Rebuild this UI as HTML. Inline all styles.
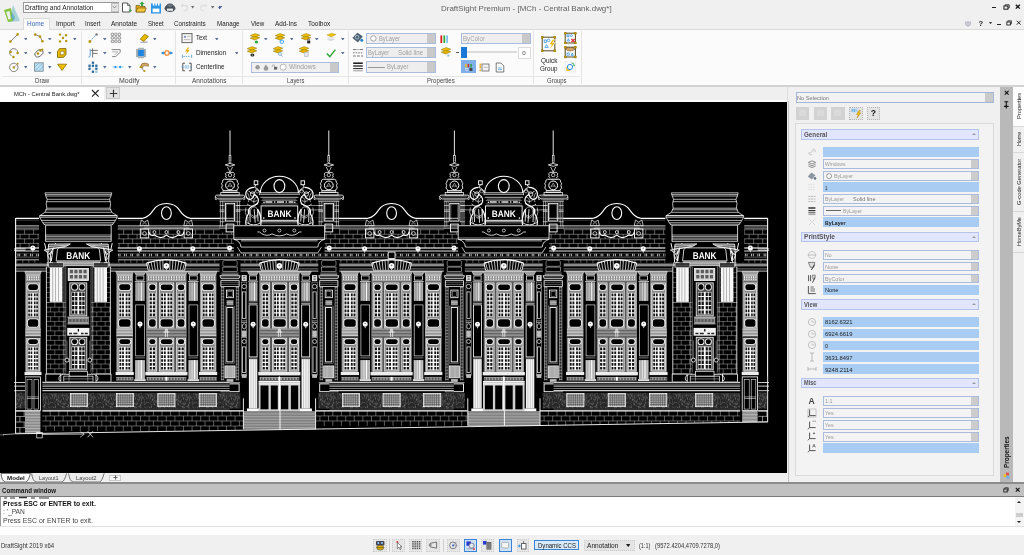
<!DOCTYPE html><html><head><meta charset="utf-8"><title>DraftSight Premium - [MCh - Central Bank.dwg*]</title><style>html,body{margin:0;padding:0;background:#f0f0f0;}
body{width:1024px;height:555px;position:relative;overflow:hidden;font-family:"Liberation Sans",sans-serif;}
.r{position:absolute;display:block;}
.t{position:absolute;white-space:nowrap;transform-origin:0 0;}
svg text{text-rendering:geometricPrecision;}
#root{position:absolute;left:0;top:0;width:1024px;height:555px;will-change:transform;}
#dw{position:absolute;left:0;top:101.5px;width:787px;height:371.5px;background:#000;}
</style></head><body><div id="root"><div class="r" style="left:0px;top:0px;width:1024px;height:30px;background:#f0f0f0;"></div>
<div class="r" style="left:0px;top:29.5px;width:1024px;height:56px;background:#fbfbfb;"></div>
<div class="r" style="left:0px;top:29px;width:1024px;height:1px;background:#dadada;"></div>
<div class="r" style="left:23px;top:18px;width:26.5px;height:12px;background:#fbfbfb;border:1px solid #dadada;box-sizing:border-box;border-bottom:none;"></div>
<div class="r" style="left:0px;top:85px;width:1024px;height:1.5px;background:#d2d2d2;"></div>
<div class="r" style="left:0px;top:86.5px;width:1024px;height:15px;background:#efefef;"></div>
<div class="r" style="left:0px;top:86.5px;width:104px;height:13.5px;background:#ffffff;"></div>
<div class="r" style="left:0px;top:100px;width:787px;height:1.5px;background:#fdfdfd;"></div>
<svg class="r" style="left:3px;top:4px" width="18" height="20" viewBox="0 0 18 20">
<polygon points="10,1 17,17 6,18" fill="#8fc5cf" opacity=".75"/>
<polygon points="1,6 8,4 10,17 5,18" fill="#86c440"/>
<polygon points="3.2,8 6.5,7 7.8,15 5.5,15.6" fill="#f0f0f0"/>
<polygon points="9,8 12,14 10,17 8,12" fill="#5aa9bd" opacity=".8"/>
</svg>
<div class="r" style="left:23px;top:1.5px;width:96px;height:11px;background:#ffffff;border:1px solid #9a9a9a;box-sizing:border-box;"></div>
<div class="r" style="left:110.5px;top:2.5px;width:8px;height:9px;background:#e4e4e4;border:1px solid #c2c2c2;box-sizing:border-box;"></div>
<svg class="r" style="left:112px;top:5px" width="5" height="4" viewBox="0 0 5 4"><polyline points="0.6,0.8 2.5,3 4.4,0.8" fill="none" stroke="#888" stroke-width=".9"/></svg>
<div class="t" style="transform:scaleX(0.9939);left:24.5px;top:3.5px;font-size:6.6px;line-height:8px;color:#222">Drafting and Annotation</div>
<svg class="r" style="left:121px;top:2px" width="12" height="11" viewBox="0 0 12 11"><path d="M1.5,1 h5 l2.5,2.5 v6.5 h-7.5z" fill="#fff" stroke="#555" stroke-width="1"/><path d="M6.5,1 v2.5 h2.5" fill="none" stroke="#555" stroke-width=".8"/><path d="M8.2,8.5 h2.6 M9.5,7.2 v2.6" stroke="#3aa84a" stroke-width="1.1"/></svg>
<svg class="r" style="left:135px;top:1px" width="12" height="12" viewBox="0 0 12 12"><path d="M1,4.5 h3.5 l1,1 h4.5 v5.5 h-9z" fill="#e2a71c" stroke="#6b5410" stroke-width=".7"/><path d="M1,11 l1.6,-4 h8.6 l-1.6,4z" fill="#f6c638" stroke="#6b5410" stroke-width=".6"/><path d="M7,0.5 l2.6,2.6 h-1.5 v1.8 h-2.2 v-1.8 h-1.5z" fill="#3aa84a"/></svg>
<svg class="r" style="left:149.5px;top:1.5px" width="12" height="12" viewBox="0 0 12 12"><path d="M1,1.5 h10 v10 h-10z" fill="#2f96e8"/><rect x="2.6" y="6.6" width="6.8" height="3.6" fill="#fff"/><rect x="2.8" y="0.8" width="1.5" height="2.8" fill="#fff"/><rect x="5.4" y="0.8" width="1.5" height="2.8" fill="#fff"/><rect x="8" y="0.8" width="1.5" height="2.8" fill="#fff"/></svg>
<svg class="r" style="left:164px;top:2px" width="12" height="11" viewBox="0 0 12 11"><ellipse cx="6" cy="6.2" rx="5.4" ry="3.8" fill="#4a5560"/><ellipse cx="6" cy="3.6" rx="3" ry="1.8" fill="#6b7680" stroke="#39424a" stroke-width=".6"/><rect x="3" y="6.6" width="6" height="2.2" fill="#e8e8e8"/></svg>
<svg class="r" style="left:179.5px;top:2.5px" width="9" height="9" viewBox="0 0 9 9"><path d="M2,2.5 h3 a2.6,2.6 0 0 1 0,5.2 h-1.5" fill="none" stroke="#dcdcdc" stroke-width="1.3"/><path d="M0.5,2.5 l2.4,-2 v4z" fill="#dcdcdc"/></svg>
<svg class="r" style="left:191.35px;top:6.20px" width="3.30" height="2.40" viewBox="0 0 3.30 2.40"><path d="M0,0H3.30L1.65,2.40z" fill="#6a6a6a"/></svg>
<svg class="r" style="left:199px;top:2.5px" width="9" height="9" viewBox="0 0 9 9"><path d="M7,2.5 h-3 a2.6,2.6 0 0 0 0,5.2 h1.5" fill="none" stroke="#e0e0e0" stroke-width="1.3"/><path d="M8.5,2.5 l-2.4,-2 v4z" fill="#e0e0e0"/></svg>
<svg class="r" style="left:210.95px;top:6.20px" width="3.30" height="2.40" viewBox="0 0 3.30 2.40"><path d="M0,0H3.30L1.65,2.40z" fill="#6a6a6a"/></svg>
<div class="r" style="left:218.6px;top:5.6px;width:3px;height:0.9px;background:#4a5f9a;"></div>
<svg class="r" style="left:218.45px;top:7.00px" width="3.30" height="2.40" viewBox="0 0 3.30 2.40"><path d="M0,0H3.30L1.65,2.40z" fill="#4a5f9a"/></svg>
<div class="t" style="transform:scaleX(0.9826);left:440.7px;top:3.6999999999999993px;font-size:8.1px;line-height:9.8px;color:#606060">DraftSight Premium - [MCh - Central Bank.dwg*]</div>
<div class="r" style="left:992.4px;top:7.0px;width:3.6px;height:1.1px;background:#222;"></div>
<svg class="r" style="left:1003px;top:3.6px" width="7" height="6" viewBox="0 0 7 6"><rect x="0.9" y="2" width="4" height="3.2" fill="none" stroke="#222" stroke-width="1"/><path d="M2.2,2 v-1.2 h4 v3.2 h-1.3" fill="none" stroke="#222" stroke-width=".9"/></svg>
<svg class="r" style="left:1015.4px;top:3.8px" width="6" height="6" viewBox="0 0 6 6"><path d="M0.8,0.8 L4.8,4.6 M4.8,0.8 L0.8,4.6" stroke="#111" stroke-width="1.3"/></svg>
<svg class="r" style="left:964.5px;top:20.5px" width="6" height="6" viewBox="0 0 6 6"><path d="M0.5,0.8 h5 v2 q0,2 -2.5,2.6 q-2.5,-.6 -2.5,-2.6z" fill="#c9c9cf" stroke="#a9a9b4" stroke-width=".5"/></svg>
<div class="t" style="left:978.6px;top:18.64px;font-size:7.6px;line-height:9.12px;color:#222;font-weight:bold;">?</div>
<svg class="r" style="left:989.06px;top:21.68px" width="3.08" height="2.24" viewBox="0 0 3.08 2.24"><path d="M0,0H3.08L1.54,2.24z" fill="#333"/></svg>
<div class="r" style="left:997px;top:24.2px;width:4px;height:1.1px;background:#222;"></div>
<svg class="r" style="left:1006.3px;top:20.2px" width="6" height="6" viewBox="0 0 6 6"><rect x="0.8" y="2" width="3.6" height="3" fill="none" stroke="#222" stroke-width=".9"/><path d="M1.8,2 v-1.2 h3.6 v3 h-1" fill="none" stroke="#222" stroke-width=".8"/></svg>
<svg class="r" style="left:1016.4px;top:20.3px" width="6" height="6" viewBox="0 0 6 6"><path d="M0.8,0.8 L4.6,4.6 M4.6,0.8 L0.8,4.6" stroke="#222" stroke-width="1"/></svg>
<div class="t" style="transform:scaleX(0.9583);left:27.3px;top:19.799999999999997px;font-size:6.7px;line-height:8.2px;color:#3b6cb3">Home</div>
<div class="t" style="transform:scaleX(0.9919);left:55.9px;top:19.799999999999997px;font-size:6.7px;line-height:8.2px;color:#222">Import</div>
<div class="t" style="transform:scaleX(0.9262);left:85.2px;top:19.799999999999997px;font-size:6.7px;line-height:8.2px;color:#222">Insert</div>
<div class="t" style="transform:scaleX(0.9746);left:111.2px;top:19.799999999999997px;font-size:6.7px;line-height:8.2px;color:#222">Annotate</div>
<div class="t" style="transform:scaleX(0.8979);left:148.3px;top:19.799999999999997px;font-size:6.7px;line-height:8.2px;color:#222">Sheet</div>
<div class="t" style="transform:scaleX(0.9312);left:174.3px;top:19.799999999999997px;font-size:6.7px;line-height:8.2px;color:#222">Constraints</div>
<div class="t" style="transform:scaleX(0.9350);left:217px;top:19.799999999999997px;font-size:6.7px;line-height:8.2px;color:#222">Manage</div>
<div class="t" style="transform:scaleX(0.9183);left:250.8px;top:19.799999999999997px;font-size:6.7px;line-height:8.2px;color:#222">View</div>
<div class="t" style="transform:scaleX(0.9539);left:274.6px;top:19.799999999999997px;font-size:6.7px;line-height:8.2px;color:#222">Add-Ins</div>
<div class="t" style="transform:scaleX(0.9669);left:308px;top:19.799999999999997px;font-size:6.7px;line-height:8.2px;color:#222">Toolbox</div>
<div class="r" style="left:80.8px;top:31px;width:1px;height:53px;background:#e4e4e4;"></div>
<div class="r" style="left:175.4px;top:31px;width:1px;height:53px;background:#e4e4e4;"></div>
<div class="r" style="left:241.7px;top:31px;width:1px;height:53px;background:#e4e4e4;"></div>
<div class="r" style="left:348.2px;top:31px;width:1px;height:53px;background:#e4e4e4;"></div>
<div class="r" style="left:532.5px;top:31px;width:1px;height:53px;background:#e4e4e4;"></div>
<div class="r" style="left:580.5px;top:31px;width:1px;height:53px;background:#e4e4e4;"></div>
<div class="r" style="left:2px;top:76.2px;width:578px;height:1px;background:#e6e6e6;"></div>
<div class="t" style="transform:scaleX(0.9161);left:34.5px;top:76.80000000000001px;font-size:6.7px;line-height:8.2px;color:#444">Draw</div>
<div class="t" style="transform:scaleX(1.0455);left:118.8px;top:76.80000000000001px;font-size:6.7px;line-height:8.2px;color:#444">Modify</div>
<div class="t" style="transform:scaleX(0.9737);left:192px;top:76.80000000000001px;font-size:6.7px;line-height:8.2px;color:#444">Annotations</div>
<div class="t" style="transform:scaleX(0.8616);left:286.7px;top:76.80000000000001px;font-size:6.7px;line-height:8.2px;color:#444">Layers</div>
<div class="t" style="transform:scaleX(0.9119);left:426.9px;top:76.80000000000001px;font-size:6.7px;line-height:8.2px;color:#444">Properties</div>
<div class="t" style="transform:scaleX(0.8934);left:547.2px;top:76.80000000000001px;font-size:6.7px;line-height:8.2px;color:#444">Groups</div>
<div class="t" style="transform:scaleX(0.9397);left:14.4px;top:89.8px;font-size:6.2px;line-height:7.6px;color:#222">MCh - Central Bank.dwg*</div>
<svg class="r" style="left:91.3px;top:89.3px" width="9" height="9" viewBox="0 0 9 9"><path d="M1,1 L7.6,7.6 M7.6,1 L1,7.6" stroke="#222" stroke-width="1.1"/></svg>
<div class="r" style="left:106px;top:87.3px;width:14px;height:11.6px;background:#e3e3e3;border:1px solid #c9c9c9;box-sizing:border-box;"></div>
<svg class="r" style="left:108.5px;top:88.6px" width="9" height="9" viewBox="0 0 9 9"><path d="M4.5,0.8 V8.2 M0.8,4.5 H8.2" stroke="#333" stroke-width="1.1"/></svg><svg class="r" style="left:7.8px;top:32.3px" width="12" height="12" viewBox="0 0 12 12"><path d="M2.2,9.8 L9.8,2.2" stroke="#666" stroke-width=".8"/><circle cx="2.4" cy="9.6" r="1.3" fill="#b8960c"/><circle cx="9.6" cy="2.4" r="1.3" fill="#b8960c"/></svg>
<svg class="r" style="left:23.74px;top:37.72px" width="3.52" height="2.56" viewBox="0 0 3.52 2.56"><path d="M0,0H3.52L1.76,2.56z" fill="#5a6e96"/></svg>
<svg class="r" style="left:33.0px;top:32.3px" width="12" height="12" viewBox="0 0 12 12"><path d="M2,2.5 L7,4.5 L9.5,9.5" stroke="#777" stroke-width=".9" fill="none"/><circle cx="2.2" cy="2.6" r="1.3" fill="#b8960c"/><circle cx="7" cy="4.6" r="1.3" fill="#b8960c"/><circle cx="9.4" cy="9.3" r="1.3" fill="#b8960c"/></svg>
<svg class="r" style="left:48.24px;top:37.72px" width="3.52" height="2.56" viewBox="0 0 3.52 2.56"><path d="M0,0H3.52L1.76,2.56z" fill="#5a6e96"/></svg>
<svg class="r" style="left:56.5px;top:32.3px" width="12" height="12" viewBox="0 0 12 12"><circle cx="3" cy="2.6" r="1.2" fill="#b8960c"/><circle cx="9" cy="3.2" r="1.2" fill="#b8960c"/><circle cx="6" cy="6" r="1.2" fill="#b8960c"/><circle cx="3" cy="9.4" r="1.2" fill="#b8960c"/><circle cx="9.2" cy="9" r="1.2" fill="#b8960c"/></svg>
<svg class="r" style="left:73.24px;top:37.72px" width="3.52" height="2.56" viewBox="0 0 3.52 2.56"><path d="M0,0H3.52L1.76,2.56z" fill="#5a6e96"/></svg>
<svg class="r" style="left:7.8px;top:46.5px" width="12" height="12" viewBox="0 0 12 12"><path d="M3.5,9 A4,4 0 1 1 9.5,6.5" stroke="#777" stroke-width=".9" fill="none"/><circle cx="2.6" cy="5" r="1.3" fill="#b8960c"/><circle cx="9.6" cy="6" r="1.3" fill="#b8960c"/><circle cx="5.4" cy="10" r="1.3" fill="#b8960c"/></svg>
<svg class="r" style="left:23.74px;top:51.92px" width="3.52" height="2.56" viewBox="0 0 3.52 2.56"><path d="M0,0H3.52L1.76,2.56z" fill="#5a6e96"/></svg>
<svg class="r" style="left:33.0px;top:46.5px" width="12" height="12" viewBox="0 0 12 12"><ellipse cx="6" cy="6.3" rx="4.6" ry="3" transform="rotate(-35 6 6.3)" stroke="#666" stroke-width=".9" fill="none"/><circle cx="7.5" cy="3.5" r="1.3" fill="#b8960c"/><circle cx="5" cy="6.6" r="1.3" fill="#b8960c"/><circle cx="9.4" cy="2.6" r="1" fill="#b8960c"/></svg>
<svg class="r" style="left:48.24px;top:51.92px" width="3.52" height="2.56" viewBox="0 0 3.52 2.56"><path d="M0,0H3.52L1.76,2.56z" fill="#5a6e96"/></svg>
<svg class="r" style="left:56.3px;top:46.5px" width="12" height="12" viewBox="0 0 12 12"><path d="M3.5,1.6 h6.5 v6 l-2.5,2.8 h-6 v-6z" fill="#e6b800" stroke="#7a6400" stroke-width=".8"/><path d="M5,4.2 h3 v2.4 l-1,1.2 h-2.6 v-2.4z" fill="#fbfbfb" stroke="#7a6400" stroke-width=".6"/></svg>
<svg class="r" style="left:7.8px;top:60.6px" width="12" height="12" viewBox="0 0 12 12"><circle cx="5.8" cy="6.4" r="4.2" stroke="#777" stroke-width=".9" fill="none"/><circle cx="5.8" cy="6.4" r="1.2" fill="#b8960c"/><path d="M5.8,6.4 L9.6,2.6" stroke="#888" stroke-width=".7"/><circle cx="9.6" cy="2.8" r="1" fill="#b8960c"/></svg>
<svg class="r" style="left:23.74px;top:66.02px" width="3.52" height="2.56" viewBox="0 0 3.52 2.56"><path d="M0,0H3.52L1.76,2.56z" fill="#5a6e96"/></svg>
<svg class="r" style="left:33.0px;top:60.6px" width="12" height="12" viewBox="0 0 12 12"><rect x="1.6" y="1.8" width="8.6" height="8.4" fill="#bfe0f2" stroke="#7f8a92" stroke-width=".9"/><path d="M2,6 L6,2 M2,9.6 L9.8,2 M5.5,10 L10,5.6" stroke="#6fb2dc" stroke-width=".7"/></svg>
<svg class="r" style="left:48.24px;top:66.02px" width="3.52" height="2.56" viewBox="0 0 3.52 2.56"><path d="M0,0H3.52L1.76,2.56z" fill="#5a6e96"/></svg>
<svg class="r" style="left:56.3px;top:60.6px" width="12" height="12" viewBox="0 0 12 12"><path d="M1.6,3.2 h9 l-4.5,6.2z" fill="#f0c000" stroke="#8a6e00" stroke-width=".8"/></svg>
<svg class="r" style="left:87.4px;top:32.3px" width="12" height="12" viewBox="0 0 12 12"><path d="M3,9.2 L9,3" stroke="#3a8fd0" stroke-width=".9" stroke-dasharray="1.6 1"/><rect x="1.6" y="8.2" width="2.6" height="2.6" fill="#b8960c"/><circle cx="9.6" cy="2.4" r="1.2" fill="#777"/></svg>
<svg class="r" style="left:103.24px;top:37.72px" width="3.52" height="2.56" viewBox="0 0 3.52 2.56"><path d="M0,0H3.52L1.76,2.56z" fill="#5a6e96"/></svg>
<svg class="r" style="left:110.3px;top:32.3px" width="12" height="12" viewBox="0 0 12 12"><rect x="1.2" y="1.2" width="2.4" height="2.4" rx=".7" fill="none" stroke="#777" stroke-width=".8"/><rect x="1.2" y="4.7" width="2.4" height="2.4" rx=".7" fill="none" stroke="#777" stroke-width=".8"/><rect x="1.2" y="8.2" width="2.4" height="2.4" rx=".7" fill="none" stroke="#777" stroke-width=".8"/><rect x="4.7" y="1.2" width="2.4" height="2.4" rx=".7" fill="none" stroke="#777" stroke-width=".8"/><rect x="4.7" y="4.7" width="2.4" height="2.4" rx=".7" fill="none" stroke="#777" stroke-width=".8"/><rect x="4.7" y="8.2" width="2.4" height="2.4" rx=".7" fill="none" stroke="#777" stroke-width=".8"/><rect x="8.2" y="1.2" width="2.4" height="2.4" rx=".7" fill="none" stroke="#777" stroke-width=".8"/><rect x="8.2" y="4.7" width="2.4" height="2.4" rx=".7" fill="none" stroke="#777" stroke-width=".8"/><rect x="8.2" y="8.2" width="2.4" height="2.4" rx=".7" fill="none" stroke="#777" stroke-width=".8"/></svg>
<svg class="r" style="left:137.5px;top:32.3px" width="12" height="12" viewBox="0 0 12 12"><path d="M2.2,7.2 L6.6,2.2 L10.4,4.4 L6,9.4z" fill="#e6b800" stroke="#8a6e00" stroke-width=".7"/><path d="M2.5,10.2 h7" stroke="#777" stroke-width=".8"/></svg>
<svg class="r" style="left:153.24px;top:37.72px" width="3.52" height="2.56" viewBox="0 0 3.52 2.56"><path d="M0,0H3.52L1.76,2.56z" fill="#5a6e96"/></svg>
<svg class="r" style="left:87.4px;top:46.5px" width="12" height="12" viewBox="0 0 12 12"><path d="M3.2,2 v6.6 q0,1.6 -1.8,1.6" stroke="#3a8fd0" stroke-width=".8" fill="none"/><path d="M5.6,1.4 v9.2 M3.8,3.4 h7 M5.6,6.4 h5" stroke="#666" stroke-width=".9" fill="none"/></svg>
<svg class="r" style="left:103.24px;top:51.92px" width="3.52" height="2.56" viewBox="0 0 3.52 2.56"><path d="M0,0H3.52L1.76,2.56z" fill="#5a6e96"/></svg>
<svg class="r" style="left:110.3px;top:46.5px" width="12" height="12" viewBox="0 0 12 12"><path d="M1.6,2.6 h8.6 v2.6 l-4.4,4.4 h-3.6" stroke="#777" stroke-width=".9" fill="none"/><path d="M2.2,4.8 h5.6 l-3,3" stroke="#999" stroke-width=".7" fill="none"/></svg>
<svg class="r" style="left:135.0px;top:46.5px" width="12" height="12" viewBox="0 0 12 12"><rect x="1.2" y="2" width="9.6" height="8.2" fill="#9aa4ac"/><rect x="3" y="0.8" width="6" height="10.4" fill="#aab4bc"/><rect x="3.2" y="3" width="5.6" height="6" fill="#1e86e0"/></svg>
<svg class="r" style="left:160.8px;top:46.5px" width="12" height="12" viewBox="0 0 12 12"><path d="M0.6,6 h10.8" stroke="#2a8de0" stroke-width="1.6"/><path d="M0.4,6 l2.2,-1.8 v3.6z M11.6,6 l-2.2,-1.8 v3.6z" fill="#2a8de0"/><rect x="4" y="3.8" width="4" height="4.4" rx="1.2" fill="#fbfbfb" stroke="#f08020" stroke-width="1.2"/></svg>
<svg class="r" style="left:87.4px;top:61.0px" width="12" height="12" viewBox="0 0 12 12"><rect x="4.8" y="0.6" width="2.3" height="2.3" fill="#2a6b9e"/><rect x="1.4" y="3.6" width="2.3" height="2.3" fill="#2a6b9e"/><rect x="4.8" y="3.6" width="2.3" height="2.3" fill="#2a6b9e"/><rect x="8.2" y="3.6" width="2.3" height="2.3" fill="#2a6b9e"/><rect x="1.4" y="6.6" width="2.3" height="2.3" fill="#2a6b9e"/><rect x="4.8" y="6.6" width="2.3" height="2.3" fill="#e8e8e8"/><rect x="8.2" y="6.6" width="2.3" height="2.3" fill="#2a6b9e"/><rect x="4.8" y="9.6" width="2.3" height="2.3" fill="#2a6b9e"/><rect x="8.2" y="9.6" width="2.3" height="2.3" fill="#9cc4dc"/></svg>
<svg class="r" style="left:103.24px;top:66.02px" width="3.52" height="2.56" viewBox="0 0 3.52 2.56"><path d="M0,0H3.52L1.76,2.56z" fill="#5a6e96"/></svg>
<svg class="r" style="left:112.0px;top:60.9px" width="12" height="12" viewBox="0 0 12 12"><circle cx="3.4" cy="6" r="1.2" fill="#2a9df0"/><circle cx="8.2" cy="6" r="1.2" fill="#2a9df0"/><path d="M0.4,6 h1.8 M9.6,6 h1.8 M4.8,6 h2" stroke="#7cc4f4" stroke-width=".8"/></svg>
<svg class="r" style="left:128.04px;top:66.02px" width="3.52" height="2.56" viewBox="0 0 3.52 2.56"><path d="M0,0H3.52L1.76,2.56z" fill="#5a6e96"/></svg>
<svg class="r" style="left:137.8px;top:60.6px" width="12" height="12" viewBox="0 0 12 12"><path d="M2.6,5.4 q0.4,-3.6 4.4,-3.4 l3.4,1 v2.2 l-3.4,-.6 q-2.4,0 -2.6,2.6z" fill="#d8a868" stroke="#7a5a20" stroke-width=".6"/><path d="M3,6 q1.6,3 3.4,4" stroke="#555" stroke-width=".7" fill="none"/><circle cx="2.6" cy="6" r="1.1" fill="#b8960c"/><circle cx="6.4" cy="10" r="1.1" fill="#b8960c"/></svg>
<svg class="r" style="left:153.24px;top:66.02px" width="3.52" height="2.56" viewBox="0 0 3.52 2.56"><path d="M0,0H3.52L1.76,2.56z" fill="#5a6e96"/></svg>
<svg class="r" style="left:181.0px;top:32.3px" width="12" height="12" viewBox="0 0 12 12"><rect x="1" y="1.6" width="10" height="9" fill="#f4f4f4" stroke="#666" stroke-width="1"/><rect x="3" y="3.8" width="2" height="2" fill="#8a98c0"/><path d="M6,4.4 h3.4 M3,7.6 h6.4" stroke="#aaa" stroke-width=".7"/></svg>
<div class="t" style="transform:scaleX(0.8968);left:195.8px;top:34.4px;font-size:6.7px;line-height:8.2px;color:#222">Text</div>
<svg class="r" style="left:215.44px;top:37.72px" width="3.52" height="2.56" viewBox="0 0 3.52 2.56"><path d="M0,0H3.52L1.76,2.56z" fill="#5a6e96"/></svg>
<svg class="r" style="left:181.0px;top:46.5px" width="12" height="12" viewBox="0 0 12 12"><path d="M6.6,0.4 l-2.4,4 h2 l-1.4,3.2 l4,-4.6 h-2.2 l1.6,-2.6z" fill="#e6b000"/><path d="M1.4,7.6 v3.4 M10.6,7.6 v3.4" stroke="#3a8fd0" stroke-width=".7"/><path d="M2.4,9.4 h7.2" stroke="#3a8fd0" stroke-width=".8" stroke-dasharray="1.4 1"/></svg>
<div class="t" style="transform:scaleX(0.9559);left:195.8px;top:48.6px;font-size:6.7px;line-height:8.2px;color:#222">Dimension</div>
<svg class="r" style="left:234.64px;top:51.92px" width="3.52" height="2.56" viewBox="0 0 3.52 2.56"><path d="M0,0H3.52L1.76,2.56z" fill="#5a6e96"/></svg>
<svg class="r" style="left:181.0px;top:61.0px" width="12" height="12" viewBox="0 0 12 12"><path d="M4,2.2 h-2.2 v7.6 h2.2 M8,2.2 h2.2 v7.6 h-2.2" stroke="#444" stroke-width=".9" fill="none"/><path d="M0.4,6 h11.2" stroke="#3a8fd0" stroke-width=".7" stroke-dasharray="2 .8 .6 .8"/><rect x="4.6" y="4.4" width="2.8" height="3.2" fill="none" stroke="#9cc8e8" stroke-width=".6"/></svg>
<div class="t" style="transform:scaleX(0.9349);left:195.8px;top:63.09999999999999px;font-size:6.7px;line-height:8.2px;color:#222">Centerline</div>
<svg class="r" style="left:248.5px;top:31.7px" width="12" height="12" viewBox="0 0 12 12"><path d="M1.2,3.6 l5,-2 l4.6,1.6 l-5,2.2z" fill="#f2c200" stroke="#8a7000" stroke-width=".5"/><path d="M1.2,6.2 l5,-2 l4.6,1.6 l-5,2.2z" fill="#e4b400" stroke="#8a7000" stroke-width=".5"/><circle cx="7.4" cy="10" r="1.6" fill="#2eaa3c"/></svg>
<svg class="r" style="left:264.14px;top:37.72px" width="3.52" height="2.56" viewBox="0 0 3.52 2.56"><path d="M0,0H3.52L1.76,2.56z" fill="#5a6e96"/></svg>
<svg class="r" style="left:274.3px;top:31.7px" width="12" height="12" viewBox="0 0 12 12"><path d="M1.2,3.6 l5,-2 l4.6,1.6 l-5,2.2z" fill="#f2c200" stroke="#8a7000" stroke-width=".5"/><path d="M1.2,6.2 l5,-2 l4.6,1.6 l-5,2.2z" fill="#e4b400" stroke="#8a7000" stroke-width=".5"/><rect x="6.2" y="8.2" width="3.2" height="3" rx=".8" fill="#fff" stroke="#2a9df0" stroke-width="1"/></svg>
<svg class="r" style="left:289.74px;top:37.72px" width="3.52" height="2.56" viewBox="0 0 3.52 2.56"><path d="M0,0H3.52L1.76,2.56z" fill="#5a6e96"/></svg>
<svg class="r" style="left:299.7px;top:31.7px" width="12" height="12" viewBox="0 0 12 12"><path d="M1.2,3.6 l5,-2 l4.6,1.6 l-5,2.2z" fill="#f2c200" stroke="#8a7000" stroke-width=".5"/><path d="M1.2,6.2 l5,-2 l4.6,1.6 l-5,2.2z" fill="#e4b400" stroke="#8a7000" stroke-width=".5"/><rect x="7.2" y="8.6" width="3" height="2.8" fill="#222"/><path d="M7.8,8.6 v-1 a1,1 0 0 1 1.8,0 v1" stroke="#222" stroke-width=".6" fill="none"/></svg>
<svg class="r" style="left:315.24px;top:37.72px" width="3.52" height="2.56" viewBox="0 0 3.52 2.56"><path d="M0,0H3.52L1.76,2.56z" fill="#5a6e96"/></svg>
<svg class="r" style="left:325.2px;top:31.9px" width="12" height="12" viewBox="0 0 12 12"><path d="M1.6,7.4 l4.6,-1.6 l4.2,1.4 l-4.6,2z" fill="#d8dce2"/><path d="M1.6,5.4 l4.6,-1.6 l4.2,1.4 l-4.6,2z" fill="#e6e9ee"/><path d="M2,3 l4.8,-1.8 l4.2,1.4 l-4.8,2.2z" fill="#f2c200" stroke="#a88800" stroke-width=".4"/></svg>
<svg class="r" style="left:341.04px;top:37.72px" width="3.52" height="2.56" viewBox="0 0 3.52 2.56"><path d="M0,0H3.52L1.76,2.56z" fill="#5a6e96"/></svg>
<svg class="r" style="left:246.4px;top:45.3px" width="12" height="12" viewBox="0 0 12 12"><path d="M1.2,3.6 l5,-2 l4.6,1.6 l-5,2.2z" fill="#f2c200" stroke="#8a7000" stroke-width=".5"/><path d="M1.2,6.2 l5,-2 l4.6,1.6 l-5,2.2z" fill="#e4b400" stroke="#8a7000" stroke-width=".5"/><ellipse cx="6.4" cy="10" rx="2" ry="1.6" fill="#222"/><ellipse cx="6.4" cy="10" rx=".8" ry=".5" fill="#ccc"/></svg>
<svg class="r" style="left:271.8px;top:45.3px" width="12" height="12" viewBox="0 0 12 12"><path d="M1.2,3.6 l5,-2 l4.6,1.6 l-5,2.2z" fill="#f2c200" stroke="#8a7000" stroke-width=".5"/><path d="M1.2,6.2 l5,-2 l4.6,1.6 l-5,2.2z" fill="#e4b400" stroke="#8a7000" stroke-width=".5"/><circle cx="8" cy="9" r="1.6" fill="#dfeaf5" stroke="#7aa8d0" stroke-width=".7"/><path d="M9.2,10.2 l1.4,1.4" stroke="#7aa8d0" stroke-width=".8"/></svg>
<svg class="r" style="left:297.8px;top:45.3px" width="12" height="12" viewBox="0 0 12 12"><path d="M1.2,3.6 l5,-2 l4.6,1.6 l-5,2.2z" fill="#f2c200" stroke="#8a7000" stroke-width=".5"/><path d="M1.2,6.2 l5,-2 l4.6,1.6 l-5,2.2z" fill="#e4b400" stroke="#8a7000" stroke-width=".5"/><rect x="6.4" y="7.6" width="3.8" height="3.8" fill="#e4e8ee" stroke="#b0b8c4" stroke-width=".6"/></svg>
<svg class="r" style="left:325.2px;top:46.5px" width="12" height="12" viewBox="0 0 12 12"><path d="M1.8,6.4 L4.8,9.6 L10.4,2.6" stroke="#34a63c" stroke-width="1.5" fill="none"/></svg>
<svg class="r" style="left:341.04px;top:51.92px" width="3.52" height="2.56" viewBox="0 0 3.52 2.56"><path d="M0,0H3.52L1.76,2.56z" fill="#5a6e96"/></svg>
<div class="r" style="left:251.3px;top:61.5px;width:87.5px;height:11.2px;background:#f0f0f0;border:1px solid #a9bcdc;box-sizing:border-box;"></div>
<div class="r" style="left:330.3px;top:62.5px;width:7.5px;height:9.2px;background:#c9c9c9;"></div>
<svg class="r" style="left:254px;top:63px" width="34" height="8" viewBox="0 0 34 8"><g transform="translate(2,0)"><circle cx="1.6" cy="4.2" r="2.2" fill="#9a9a9a"/><path d="M10,1.4 q-2.4,3 -2.4,4.2 a2.4,2.2 0 0 0 4.8,0 q0,-1.2 -2.4,-4.2z" fill="#9a9a9a"/><rect x="18" y="3.8" width="3.2" height="2.8" fill="#666"/><path d="M16.2,4 v-1 a1.2,1.2 0 0 1 2.4,0 v1" stroke="#888" stroke-width=".6" fill="none"/><circle cx="27.2" cy="4.2" r="3" fill="#fff" stroke="#888" stroke-width=".6"/></g></svg>
<div class="t" style="transform:scaleX(0.9874);left:288.7px;top:62.99999999999999px;font-size:6.7px;line-height:8.2px;color:#a0a0a0">Windows</div>
<svg class="r" style="left:352.4px;top:32.3px" width="12" height="12" viewBox="0 0 12 12"><path d="M5.4,1 l5,3.6 l-4.6,5.4 l-5,-4z" fill="#4a6278" stroke="#2a3a48" stroke-width=".5"/><circle cx="5" cy="5.2" r="1.8" fill="none" stroke="#cfd8e0" stroke-width=".7"/><circle cx="9.8" cy="8.2" r="1.5" fill="#2a86c8"/></svg>
<svg class="r" style="left:352.4px;top:46.5px" width="12" height="12" viewBox="0 0 12 12"><path d="M1,2.6 h10" stroke="#555" stroke-width=".8" stroke-dasharray="3.4 1 1.2 1"/><path d="M1,5.8 h10" stroke="#555" stroke-width=".8" stroke-dasharray="1.6 1"/><path d="M1,9 h10" stroke="#555" stroke-width=".8" stroke-dasharray="2.8 1.2"/></svg>
<svg class="r" style="left:352.4px;top:60.6px" width="12" height="12" viewBox="0 0 12 12"><path d="M1.2,2.2 h9.6" stroke="#222" stroke-width="1.6"/><path d="M1.2,5 h9.6" stroke="#222" stroke-width="1.3"/><path d="M1.2,7.6 h9.6" stroke="#222" stroke-width="1"/><path d="M1.2,9.8 h9.6" stroke="#555" stroke-width=".6"/></svg>
<div class="r" style="left:366.2px;top:33.2px;width:69.7px;height:10.7px;background:#eeeeee;border:1px solid #a9bcdc;box-sizing:border-box;"></div><div class="r" style="left:426.9px;top:34.2px;width:8px;height:8.7px;background:#c9c9c9;"></div>
<div class="r" style="left:366.2px;top:47.2px;width:69.7px;height:10.7px;background:#eeeeee;border:1px solid #a9bcdc;box-sizing:border-box;"></div><div class="r" style="left:426.9px;top:48.2px;width:8px;height:8.7px;background:#c9c9c9;"></div>
<div class="r" style="left:366.2px;top:61.4px;width:69.7px;height:11.2px;background:#eeeeee;border:1px solid #a9bcdc;box-sizing:border-box;"></div><div class="r" style="left:426.9px;top:62.4px;width:8px;height:9.2px;background:#c9c9c9;"></div>
<svg class="r" style="left:369.5px;top:35.2px" width="7" height="7" viewBox="0 0 7 7"><circle cx="3.4" cy="3.4" r="2.7" fill="#fff" stroke="#888" stroke-width=".7"/></svg>
<div class="t" style="transform:scaleX(0.8555);left:379px;top:34.6px;font-size:6.7px;line-height:8.2px;color:#a0a0a0">ByLayer</div>
<div class="t" style="transform:scaleX(0.8637);left:368px;top:48.6px;font-size:6.7px;line-height:8.2px;color:#a0a0a0">ByLayer</div>
<div class="t" style="transform:scaleX(0.9285);left:398px;top:48.6px;font-size:6.7px;line-height:8.2px;color:#a0a0a0">Solid line</div>
<div class="r" style="left:368.4px;top:66.9px;width:16.6px;height:0.8px;background:#999;"></div>
<div class="t" style="transform:scaleX(0.8718);left:387px;top:63.1px;font-size:6.7px;line-height:8.2px;color:#a0a0a0">ByLayer</div>
<svg class="r" style="left:439.5px;top:34.8px" width="9" height="8.4" viewBox="0 0 9 8.4"><rect x="0.4" y="0.4" width="1.8" height="7.6" fill="#e02020"/><rect x="3.4" y="0.4" width="1.8" height="7.6" fill="#30b040"/><rect x="6.4" y="0.4" width="1.4" height="7.6" fill="#3aa0f0" opacity=".8"/></svg>
<svg class="r" style="left:439.6px;top:45.7px" width="12" height="12" viewBox="0 0 12 12"><path d="M1.2,3.6 l5,-2 l4.6,1.6 l-5,2.2z" fill="#f2c200" stroke="#8a7000" stroke-width=".5"/><path d="M1.2,6.2 l5,-2 l4.6,1.6 l-5,2.2z" fill="#e4b400" stroke="#8a7000" stroke-width=".5"/><circle cx="8.4" cy="9.6" r="1.2" fill="#9cc0e0"/></svg>
<div class="r" style="left:456.2px;top:52.4px;width:2.4px;height:0.9px;background:#555;"></div>
<div class="r" style="left:461.3px;top:33.2px;width:69.6px;height:10.7px;background:#eeeeee;border:1px solid #a9bcdc;box-sizing:border-box;"></div><div class="r" style="left:521.9px;top:34.2px;width:8px;height:8.7px;background:#c9c9c9;"></div>
<div class="t" style="transform:scaleX(0.9203);left:463px;top:34.6px;font-size:6.7px;line-height:8.2px;color:#a8a8a8">ByColor</div>
<div class="r" style="left:466px;top:51px;width:50.5px;height:1.6px;background:#dcdcdc;"></div>
<div class="r" style="left:461.3px;top:47px;width:5.3px;height:10.6px;background:#1a78d8;"></div>
<div class="r" style="left:517.8px;top:46.6px;width:12.8px;height:12.2px;background:#fff;border:1px solid #dcdcdc;box-sizing:border-box;"></div>
<div class="t" style="left:522.3px;top:49.08px;font-size:6.2px;line-height:7.44px;color:#444;">0</div>
<div class="r" style="left:461.3px;top:60.3px;width:14.7px;height:12.9px;background:#7fb0ea;"></div>
<svg class="r" style="left:463.5px;top:62.5px" width="11" height="9" viewBox="0 0 11 9"><rect x="1" y="1" width="1.6" height="3.4" fill="#e8c020"/><rect x="3.6" y="1" width="1.6" height="3.4" fill="#d03030"/><rect x="6.2" y="1" width="1.6" height="3.4" fill="#30a040"/><rect x="5.4" y="5" width="3" height="3" fill="#444"/><path d="M1,5.6 h3.4 M1,7.2 h3.4" stroke="#e8f0ff" stroke-width=".7"/></svg>
<svg class="r" style="left:478.8px;top:61.5px" width="11" height="11" viewBox="0 0 11 11"><rect x="3" y="2" width="7" height="7" fill="#f4f4f4" stroke="#666" stroke-width=".8"/><path d="M1.2,1.6 v5" stroke="#f0a000" stroke-width="1.2"/><circle cx="1.2" cy="8.4" r=".8" fill="#f0a000"/><path d="M4.6,5.4 h4" stroke="#999" stroke-width=".6"/></svg>
<svg class="r" style="left:495px;top:61.5px" width="10" height="11" viewBox="0 0 10 11"><path d="M1.2,1 h4.6 l3,3 v6 h-7.6z" fill="#fff" stroke="#555" stroke-width=".8"/><path d="M3,6 h4 M3,7.6 h4" stroke="#3a8fd0" stroke-width=".7"/></svg>
<svg class="r" style="left:540.6px;top:35.8px" width="15" height="16" viewBox="0 0 15 16"><rect x="1.2" y="1.2" width="12.6" height="13.6" fill="#fbfbfb" stroke="#5a4a20" stroke-width="1"/><circle cx="1.3" cy="1.3" r="1.2" fill="#c8a000" stroke="#6a5400" stroke-width=".4"/><circle cx="13.7" cy="1.3" r="1.2" fill="#c8a000" stroke="#6a5400" stroke-width=".4"/><circle cx="1.3" cy="14.7" r="1.2" fill="#c8a000" stroke="#6a5400" stroke-width=".4"/><circle cx="13.7" cy="14.7" r="1.2" fill="#c8a000" stroke="#6a5400" stroke-width=".4"/><rect x="3.2" y="4" width="2.4" height="2.4" fill="none" stroke="#2a8de0" stroke-width=".7"/><circle cx="7.6" cy="4.4" r="1.3" fill="none" stroke="#2a8de0" stroke-width=".7"/><path d="M4,11.6 l1.6,-3 l1.6,3z" fill="none" stroke="#2a8de0" stroke-width=".7"/><path d="M11.6,3.4 l-3.4,5.2 h2.4 l-1.8,5 l5.4,-7 h-2.6 l2.2,-3.2z" fill="#f2b800" stroke="#fbfbfb" stroke-width=".5"/></svg>
<div class="t" style="transform:scaleX(0.9585);left:540.8px;top:57.4px;font-size:6.7px;line-height:8.2px;color:#222">Quick</div>
<div class="t" style="transform:scaleX(0.9358);left:540.4px;top:65.2px;font-size:6.7px;line-height:8.2px;color:#222">Group</div>
<svg class="r" style="left:564.4px;top:32.2px" width="12.6" height="12.2" viewBox="0 0 12.6 12.2"><rect x="1.2" y="1.2" width="10.2" height="9.799999999999999" fill="#fbfbfb" stroke="#5a4a20" stroke-width="1"/><circle cx="1.3" cy="1.3" r="1.2" fill="#c8a000" stroke="#6a5400" stroke-width=".4"/><circle cx="11.299999999999999" cy="1.3" r="1.2" fill="#c8a000" stroke="#6a5400" stroke-width=".4"/><circle cx="1.3" cy="10.899999999999999" r="1.2" fill="#c8a000" stroke="#6a5400" stroke-width=".4"/><circle cx="11.299999999999999" cy="10.899999999999999" r="1.2" fill="#c8a000" stroke="#6a5400" stroke-width=".4"/><rect x="3" y="2.8" width="2" height="2" fill="none" stroke="#2a8de0" stroke-width=".7"/><circle cx="7.4" cy="3.6" r="1" fill="none" stroke="#2a8de0" stroke-width=".7"/><path d="M3.2,9 l1.2,-2.4 l1.2,2.4z" fill="none" stroke="#2a8de0" stroke-width=".7"/><path d="M7.4,7 l3.2,3.2 M10.6,7 l-3.2,3.2" stroke="#e02030" stroke-width="1.2"/></svg>
<svg class="r" style="left:564.4px;top:46.4px" width="12.6" height="12.2" viewBox="0 0 12.6 12.2"><rect x="1.2" y="1.2" width="10.2" height="9.799999999999999" fill="#fbfbfb" stroke="#5a4a20" stroke-width="1"/><circle cx="1.3" cy="1.3" r="1.2" fill="#c8a000" stroke="#6a5400" stroke-width=".4"/><circle cx="11.299999999999999" cy="1.3" r="1.2" fill="#c8a000" stroke="#6a5400" stroke-width=".4"/><circle cx="1.3" cy="10.899999999999999" r="1.2" fill="#c8a000" stroke="#6a5400" stroke-width=".4"/><circle cx="11.299999999999999" cy="10.899999999999999" r="1.2" fill="#c8a000" stroke="#6a5400" stroke-width=".4"/><path d="M1.2,3.2 q5,-3.4 10,0 q-5,3.6 -10,0z" fill="#d8a868" stroke="#5a4020" stroke-width=".5"/><rect x="3" y="7" width="2.2" height="2.2" fill="none" stroke="#2a8de0" stroke-width=".7"/><path d="M7,9.4 l1.2,-2.4 l1.2,2.4z" fill="none" stroke="#2a8de0" stroke-width=".7"/></svg>
<svg class="r" style="left:564.4px;top:60.6px" width="12.6" height="12" viewBox="0 0 12.6 12"><rect x="1" y="1" width="10.6" height="10" fill="none" stroke="#c8d0dc" stroke-width=".6" stroke-dasharray="1 1"/><rect x="2.2" y="6" width="4" height="4" fill="#f6c63a"/><circle cx="6" cy="6" r="2.6" fill="#fbfbfb" stroke="#2a8de0" stroke-width="1"/><path d="M7.6,2 q2.6,0 2.6,2.6" stroke="#30a848" stroke-width=".9" fill="none"/><path d="M10.2,5.6 l-1.2,-1.4 h2.4z" fill="#30a848"/></svg><div id="dw"></div><svg class="r" style="left:0;top:101.5px;will-change:transform" width="787" height="371.5" viewBox="0 101.5 787 371.5" fill="none"><defs><pattern id="sp" width="24" height="15.6" patternUnits="userSpaceOnUse"><rect width="24" height="15.6" fill="#272727"/><path d="M5.5,8.2h.6M8.6,9.1h.6M14.6,1.0h.6M0.3,12.6h.6M6.0,3.5h.6M23.2,7.1h.6M19.5,7.1h.6M14.9,2.3h.6M14.8,13.0h.6M12.2,11.1h.6M15.6,1.0h.6M17.7,8.9h.6M7.0,0.5h.6M20.2,7.1h.6M16.7,13.2h.6M16.6,13.8h.6M9.2,12.0h.6M10.4,14.0h.6M20.5,1.5h.6M3.2,3.3h.6M22.5,6.5h.6M14.6,4.5h.6M11.8,5.8h.6M8.2,8.8h.6M13.6,13.6h.6M15.9,13.9h.6M20.0,14.9h.6M15.6,2.4h.6M20.1,14.5h.6M21.1,8.5h.6M16.6,3.2h.6M19.4,8.6h.6M6.6,1.0h.6M19.9,14.8h.6M2.1,12.0h.6M9.6,2.3h.6M6.8,11.5h.6M20.3,0.7h.6M14.3,0.7h.6M16.7,5.0h.6M20.5,14.7h.6M11.8,15.0h.6M7.2,1.2h.6M14.0,0.5h.6M4.6,6.1h.6M14.2,2.3h.6M1.0,13.0h.6M7.3,14.4h.6M20.9,5.7h.6M10.7,7.8h.6M15.0,8.9h.6M13.0,9.3h.6M21.9,7.6h.6M10.0,10.8h.6M5.5,4.5h.6M22.8,7.8h.6M12.8,0.2h.6M9.7,8.7h.6M0.5,9.2h.6M14.7,0.9h.6M14.6,7.0h.6M15.8,5.3h.6M16.5,11.1h.6M0.5,0.9h.6M15.8,14.4h.6M5.9,6.8h.6M13.8,4.8h.6M8.5,4.7h.6M8.6,8.9h.6M7.0,5.7h.6M18.0,0.4h.6M13.3,11.0h.6M7.2,3.3h.6M18.7,3.6h.6M4.4,6.5h.6M16.3,1.5h.6M7.5,5.0h.6M19.4,6.6h.6M19.9,2.5h.6M7.8,9.8h.6M20.6,6.8h.6M5.2,1.8h.6M12.3,2.9h.6M18.8,12.6h.6M4.3,4.2h.6M18.8,9.6h.6M18.8,5.2h.6M3.0,4.4h.6M18.5,4.1h.6M8.1,6.3h.6M9.8,6.1h.6M21.5,2.3h.6M0.1,14.1h.6M20.5,14.8h.6M10.1,14.3h.6M21.6,3.3h.6M17.4,12.6h.6M15.4,7.8h.6M6.7,5.1h.6M5.3,1.0h.6M13.7,4.3h.6M18.9,0.7h.6M21.1,10.4h.6M21.5,13.4h.6M21.0,8.7h.6M0.3,11.2h.6M4.0,4.5h.6M15.4,7.9h.6M9.6,14.1h.6M14.3,5.1h.6M5.9,12.9h.6M11.1,11.7h.6M8.2,3.0h.6M12.5,12.3h.6M4.0,11.9h.6M21.5,12.1h.6M19.2,0.1h.6M14.6,12.9h.6M1.2,4.1h.6M6.3,7.9h.6M9.9,7.1h.6M18.1,0.0h.6M1.3,1.9h.6M2.9,1.0h.6M22.7,12.8h.6M2.0,7.5h.6M7.4,4.7h.6M8.2,9.7h.6M13.7,5.4h.6M4.5,4.9h.6M2.9,8.3h.6M16.7,5.7h.6M1.9,2.7h.6M8.7,9.1h.6M18.2,5.7h.6M18.7,9.3h.6M10.1,5.6h.6M11.6,10.5h.6M9.8,10.4h.6M10.7,3.7h.6M12.5,10.4h.6M1.7,6.4h.6M9.9,13.2h.6M21.8,5.6h.6M20.9,11.9h.6M6.1,7.0h.6M2.9,12.2h.6M15.4,13.3h.6M18.5,10.0h.6M17.1,8.5h.6" stroke="#8a8a8a" stroke-width=".7"/></pattern></defs><path d="M15.6,217.8H767.6" stroke="#fff" stroke-width="1.15" fill="none"/>
<path d="M15.6,219.6H767.6" stroke="#fff" stroke-width="0.5" fill="none" opacity="0.5"/>
<path d="M15.6,225.4H767.6" stroke="#fff" stroke-width="0.8" fill="none"/>
<path d="M15.6,227.6H767.6" stroke="#fff" stroke-width="0.7" fill="none" opacity="0.9"/>
<path d="M15.6,229.2H767.6M15.6,233.77H767.6M15.6,238.35H767.6M15.6,242.93H767.6M15.6,247.5H767.6" stroke="#fff" stroke-width="0.6" fill="none" opacity="0.62"/>
<path d="M24.6,229.2V233.77M33.6,229.2V233.77M42.6,229.2V233.77M51.6,229.2V233.77M60.6,229.2V233.77M69.6,229.2V233.77M78.6,229.2V233.77M87.6,229.2V233.77M96.6,229.2V233.77M105.6,229.2V233.77M114.6,229.2V233.77M123.6,229.2V233.77M132.6,229.2V233.77M141.6,229.2V233.77M150.6,229.2V233.77M159.6,229.2V233.77M168.6,229.2V233.77M177.6,229.2V233.77M186.6,229.2V233.77M195.6,229.2V233.77M204.6,229.2V233.77M213.6,229.2V233.77M222.6,229.2V233.77M231.6,229.2V233.77M240.6,229.2V233.77M249.6,229.2V233.77M258.6,229.2V233.77M267.6,229.2V233.77M276.6,229.2V233.77M285.6,229.2V233.77M294.6,229.2V233.77M303.6,229.2V233.77M312.6,229.2V233.77M321.6,229.2V233.77M330.6,229.2V233.77M339.6,229.2V233.77M348.6,229.2V233.77M357.6,229.2V233.77M366.6,229.2V233.77M375.6,229.2V233.77M384.6,229.2V233.77M393.6,229.2V233.77M402.6,229.2V233.77M411.6,229.2V233.77M420.6,229.2V233.77M429.6,229.2V233.77M438.6,229.2V233.77M447.6,229.2V233.77M456.6,229.2V233.77M465.6,229.2V233.77M474.6,229.2V233.77M483.6,229.2V233.77M492.6,229.2V233.77M501.6,229.2V233.77M510.6,229.2V233.77M519.6,229.2V233.77M528.6,229.2V233.77M537.6,229.2V233.77M546.6,229.2V233.77M555.6,229.2V233.77M564.6,229.2V233.77M573.6,229.2V233.77M582.6,229.2V233.77M591.6,229.2V233.77M600.6,229.2V233.77M609.6,229.2V233.77M618.6,229.2V233.77M627.6,229.2V233.77M636.6,229.2V233.77M645.6,229.2V233.77M654.6,229.2V233.77M663.6,229.2V233.77M672.6,229.2V233.77M681.6,229.2V233.77M690.6,229.2V233.77M699.6,229.2V233.77M708.6,229.2V233.77M717.6,229.2V233.77M726.6,229.2V233.77M735.6,229.2V233.77M744.6,229.2V233.77M753.6,229.2V233.77M762.6,229.2V233.77M20.1,233.77V238.35M29.1,233.77V238.35M38.1,233.77V238.35M47.1,233.77V238.35M56.1,233.77V238.35M65.1,233.77V238.35M74.1,233.77V238.35M83.1,233.77V238.35M92.1,233.77V238.35M101.1,233.77V238.35M110.1,233.77V238.35M119.1,233.77V238.35M128.1,233.77V238.35M137.1,233.77V238.35M146.1,233.77V238.35M155.1,233.77V238.35M164.1,233.77V238.35M173.1,233.77V238.35M182.1,233.77V238.35M191.1,233.77V238.35M200.1,233.77V238.35M209.1,233.77V238.35M218.1,233.77V238.35M227.1,233.77V238.35M236.1,233.77V238.35M245.1,233.77V238.35M254.1,233.77V238.35M263.1,233.77V238.35M272.1,233.77V238.35M281.1,233.77V238.35M290.1,233.77V238.35M299.1,233.77V238.35M308.1,233.77V238.35M317.1,233.77V238.35M326.1,233.77V238.35M335.1,233.77V238.35M344.1,233.77V238.35M353.1,233.77V238.35M362.1,233.77V238.35M371.1,233.77V238.35M380.1,233.77V238.35M389.1,233.77V238.35M398.1,233.77V238.35M407.1,233.77V238.35M416.1,233.77V238.35M425.1,233.77V238.35M434.1,233.77V238.35M443.1,233.77V238.35M452.1,233.77V238.35M461.1,233.77V238.35M470.1,233.77V238.35M479.1,233.77V238.35M488.1,233.77V238.35M497.1,233.77V238.35M506.1,233.77V238.35M515.1,233.77V238.35M524.1,233.77V238.35M533.1,233.77V238.35M542.1,233.77V238.35M551.1,233.77V238.35M560.1,233.77V238.35M569.1,233.77V238.35M578.1,233.77V238.35M587.1,233.77V238.35M596.1,233.77V238.35M605.1,233.77V238.35M614.1,233.77V238.35M623.1,233.77V238.35M632.1,233.77V238.35M641.1,233.77V238.35M650.1,233.77V238.35M659.1,233.77V238.35M668.1,233.77V238.35M677.1,233.77V238.35M686.1,233.77V238.35M695.1,233.77V238.35M704.1,233.77V238.35M713.1,233.77V238.35M722.1,233.77V238.35M731.1,233.77V238.35M740.1,233.77V238.35M749.1,233.77V238.35M758.1,233.77V238.35M24.6,238.35V242.93M33.6,238.35V242.93M42.6,238.35V242.93M51.6,238.35V242.93M60.6,238.35V242.93M69.6,238.35V242.93M78.6,238.35V242.93M87.6,238.35V242.93M96.6,238.35V242.93M105.6,238.35V242.93M114.6,238.35V242.93M123.6,238.35V242.93M132.6,238.35V242.93M141.6,238.35V242.93M150.6,238.35V242.93M159.6,238.35V242.93M168.6,238.35V242.93M177.6,238.35V242.93M186.6,238.35V242.93M195.6,238.35V242.93M204.6,238.35V242.93M213.6,238.35V242.93M222.6,238.35V242.93M231.6,238.35V242.93M240.6,238.35V242.93M249.6,238.35V242.93M258.6,238.35V242.93M267.6,238.35V242.93M276.6,238.35V242.93M285.6,238.35V242.93M294.6,238.35V242.93M303.6,238.35V242.93M312.6,238.35V242.93M321.6,238.35V242.93M330.6,238.35V242.93M339.6,238.35V242.93M348.6,238.35V242.93M357.6,238.35V242.93M366.6,238.35V242.93M375.6,238.35V242.93M384.6,238.35V242.93M393.6,238.35V242.93M402.6,238.35V242.93M411.6,238.35V242.93M420.6,238.35V242.93M429.6,238.35V242.93M438.6,238.35V242.93M447.6,238.35V242.93M456.6,238.35V242.93M465.6,238.35V242.93M474.6,238.35V242.93M483.6,238.35V242.93M492.6,238.35V242.93M501.6,238.35V242.93M510.6,238.35V242.93M519.6,238.35V242.93M528.6,238.35V242.93M537.6,238.35V242.93M546.6,238.35V242.93M555.6,238.35V242.93M564.6,238.35V242.93M573.6,238.35V242.93M582.6,238.35V242.93M591.6,238.35V242.93M600.6,238.35V242.93M609.6,238.35V242.93M618.6,238.35V242.93M627.6,238.35V242.93M636.6,238.35V242.93M645.6,238.35V242.93M654.6,238.35V242.93M663.6,238.35V242.93M672.6,238.35V242.93M681.6,238.35V242.93M690.6,238.35V242.93M699.6,238.35V242.93M708.6,238.35V242.93M717.6,238.35V242.93M726.6,238.35V242.93M735.6,238.35V242.93M744.6,238.35V242.93M753.6,238.35V242.93M762.6,238.35V242.93M20.1,242.93V247.5M29.1,242.93V247.5M38.1,242.93V247.5M47.1,242.93V247.5M56.1,242.93V247.5M65.1,242.93V247.5M74.1,242.93V247.5M83.1,242.93V247.5M92.1,242.93V247.5M101.1,242.93V247.5M110.1,242.93V247.5M119.1,242.93V247.5M128.1,242.93V247.5M137.1,242.93V247.5M146.1,242.93V247.5M155.1,242.93V247.5M164.1,242.93V247.5M173.1,242.93V247.5M182.1,242.93V247.5M191.1,242.93V247.5M200.1,242.93V247.5M209.1,242.93V247.5M218.1,242.93V247.5M227.1,242.93V247.5M236.1,242.93V247.5M245.1,242.93V247.5M254.1,242.93V247.5M263.1,242.93V247.5M272.1,242.93V247.5M281.1,242.93V247.5M290.1,242.93V247.5M299.1,242.93V247.5M308.1,242.93V247.5M317.1,242.93V247.5M326.1,242.93V247.5M335.1,242.93V247.5M344.1,242.93V247.5M353.1,242.93V247.5M362.1,242.93V247.5M371.1,242.93V247.5M380.1,242.93V247.5M389.1,242.93V247.5M398.1,242.93V247.5M407.1,242.93V247.5M416.1,242.93V247.5M425.1,242.93V247.5M434.1,242.93V247.5M443.1,242.93V247.5M452.1,242.93V247.5M461.1,242.93V247.5M470.1,242.93V247.5M479.1,242.93V247.5M488.1,242.93V247.5M497.1,242.93V247.5M506.1,242.93V247.5M515.1,242.93V247.5M524.1,242.93V247.5M533.1,242.93V247.5M542.1,242.93V247.5M551.1,242.93V247.5M560.1,242.93V247.5M569.1,242.93V247.5M578.1,242.93V247.5M587.1,242.93V247.5M596.1,242.93V247.5M605.1,242.93V247.5M614.1,242.93V247.5M623.1,242.93V247.5M632.1,242.93V247.5M641.1,242.93V247.5M650.1,242.93V247.5M659.1,242.93V247.5M668.1,242.93V247.5M677.1,242.93V247.5M686.1,242.93V247.5M695.1,242.93V247.5M704.1,242.93V247.5M713.1,242.93V247.5M722.1,242.93V247.5M731.1,242.93V247.5M740.1,242.93V247.5M749.1,242.93V247.5M758.1,242.93V247.5" stroke="#fff" stroke-width="0.6" fill="none" opacity="0.62"/>
<path d="M15.6,247.5H767.6" stroke="#fff" stroke-width="0.9" fill="none"/>
<path d="M15.6,250.5H767.6" stroke="#fff" stroke-width="0.9" fill="none"/>
<path d="M17.6,254.5H767.6" stroke="#fff" stroke-width="2.6" stroke-dasharray=".8 .9 .8 3.77" opacity=".85"/>
<path d="M15.6,253.2H767.6M15.6,255.8H767.6" stroke="#fff" stroke-width="0.4" fill="none" opacity="0.45"/>
<path d="M15.6,257.1H767.6" stroke="#fff" stroke-width="0.5" fill="none" opacity="0.5"/>
<path d="M15.6,259.3H767.6" stroke="#fff" stroke-width="0.8" fill="none" opacity="0.9"/>
<path d="M16.6,261H767.6" stroke="#fff" stroke-width="3.2" stroke-dasharray=".6 5.4" opacity=".5"/>
<rect x="15.6" y="263" width="752" height="2.9" fill="#8a8a8a"/>
<path d="M15.6,268.4H767.6" stroke="#fff" stroke-width="0.6" fill="none" opacity="0.8"/>
<path d="M15.6,270.6H767.6" stroke="#fff" stroke-width="0.8" fill="none" opacity="0.95"/>
<path d="M15.6,217.6L15.6,433.31" stroke="#fff" stroke-width="0.8"/>
<path d="M767.6,217.6L767.6,421.42" stroke="#fff" stroke-width="0.8"/>
<path d="M14,248.4H25.6M14,249.8H25.6" stroke="#fff" stroke-width="0.7" fill="none"/>
<path d="M757.6,248.4H769.2M757.6,249.8H769.2" stroke="#fff" stroke-width="0.7" fill="none"/>
<circle cx="32.8" cy="247.6" r="2.5" fill="#fff"/>
<path d="M31.7,249.7L32.8,252.1L33.9,249.7z" fill="#ccc"/>
<circle cx="32.8" cy="247.1" r="0.75" fill="#888"/>
<circle cx="750.4" cy="247.6" r="2.5" fill="#fff"/>
<path d="M749.3,249.7L750.4,252.1L751.5,249.7z" fill="#ccc"/>
<circle cx="750.4" cy="247.1" r="0.75" fill="#888"/>
<path d="M142.9,217.8C148.9,216.6 151,213 153.5,209.4C156.4,205 160,203 166.4,203C172.8,203 176.4,205 179.3,209.4C181.8,213 183.9,216.6 189.9,217.8V226.6H142.9z" stroke="#fff" stroke-width="0" fill="#000"/>
<path d="M142.9,217.8C148.9,216.6 151,213 153.5,209.4C156.4,205 160,203 166.4,203C172.8,203 176.4,205 179.3,209.4C181.8,213 183.9,216.6 189.9,217.8" stroke="#fff" stroke-width="1.1" fill="none"/>
<path d="M143.4,225.4H189.4" stroke="#fff" stroke-width="0.8" fill="none"/>
<path d="M143.4,227.6H189.4" stroke="#fff" stroke-width="0.7" fill="none" opacity="0.9"/>
<ellipse cx="166.4" cy="212.6" rx="4.9" ry="6.4" fill="none" stroke="#fff" stroke-width="1.1"/>
<path d="M140,225.2L141.3,219.6L144.5,221.6L147.7,219.6L149,225.2z" stroke="#fff" stroke-width="0.7" fill="none"/>
<path d="M142.9,225v-2.4h3.2v2.4" stroke="#fff" stroke-width="0.5" fill="none" opacity="0.8"/>
<rect x="140.3" y="228.5" width="8.4" height="8.9" fill="none" stroke="#fff" stroke-width="0.9"/>
<circle cx="144.5" cy="233" r="1.9" fill="none" stroke="#fff" stroke-width=".7"/>
<path d="M183.8,225.2L185.1,219.6L188.3,221.6L191.5,219.6L192.8,225.2z" stroke="#fff" stroke-width="0.7" fill="none"/>
<path d="M186.7,225v-2.4h3.2v2.4" stroke="#fff" stroke-width="0.5" fill="none" opacity="0.8"/>
<rect x="184.1" y="228.5" width="8.4" height="8.9" fill="none" stroke="#fff" stroke-width="0.9"/>
<circle cx="188.3" cy="233" r="1.9" fill="none" stroke="#fff" stroke-width=".7"/>
<path d="M148.8,231.2Q149.8,236.4 154.4,234.4Q160.4,239.6 166.4,234.6Q172.4,239.6 178.4,234.4Q183,236.4 184,231.2" stroke="#fff" stroke-width="1.15" fill="none"/>
<circle cx="154.4" cy="231.6" r="1.5" fill="none" stroke="#fff" stroke-width=".8"/>
<circle cx="166.4" cy="231.6" r="1.5" fill="none" stroke="#fff" stroke-width=".8"/>
<circle cx="178.4" cy="231.6" r="1.5" fill="none" stroke="#fff" stroke-width=".8"/>
<rect x="116.6" y="272.6" width="16.2" height="98.8" fill="#555"/>
<path d="M116.9,274V371M132.5,274V371" stroke="#fff" stroke-width="0.6" fill="none" opacity="0.7"/>
<path d="M115.8,271H133.6L132.2,274.3H117.2z" stroke="#fff" stroke-width="0.5" fill="#9c9c9c"/>
<rect x="117.2" y="275" width="15" height="5.3" fill="#8e8e8e"/>
<path d="M118.4,275.8v3.7M120.92,275.8v3.7M123.44,275.8v3.7M125.96,275.8v3.7M128.48,275.8v3.7M131,275.8v3.7" stroke="#fff" stroke-width="1.05" opacity=".9" stroke-dasharray="1.6 .6"/>
<path d="M117.2,275H132.2M117.2,280.3H132.2" stroke="#fff" stroke-width="0.5" fill="none" opacity="0.9"/>
<rect x="117.9" y="282.4" width="13.8" height="45.2" fill="#8c8c8c" stroke="#fff" stroke-width="0.7" opacity="0.95"/>
<rect x="117.9" y="337.6" width="13.8" height="33" fill="#8c8c8c" stroke="#fff" stroke-width="0.7" opacity="0.95"/>
<rect x="118.5" y="283.1" width="12.6" height="7.2" fill="#fff" rx="2.6" opacity="0.95"/>
<rect x="119.25" y="283.85" width="11.1" height="5.7" fill="#000" rx="2.2"/>
<rect x="119" y="292.3" width="11.6" height="23.9" fill="#fff" opacity="0.96"/>
<path d="M119.43,294.37h1.82M119.43,298.35h1.82M119.43,302.34h1.82M119.43,306.32h1.82M119.43,310.3h1.82M119.43,314.29h1.82M122.1,294.37h1.82M122.1,298.35h1.82M122.1,302.34h1.82M122.1,306.32h1.82M122.1,310.3h1.82M122.1,314.29h1.82M125.68,294.37h1.82M125.68,298.35h1.82M125.68,302.34h1.82M125.68,306.32h1.82M125.68,310.3h1.82M125.68,314.29h1.82M128.35,294.37h1.82M128.35,298.35h1.82M128.35,302.34h1.82M128.35,306.32h1.82M128.35,310.3h1.82M128.35,314.29h1.82" stroke="#000" stroke-width="2.71" opacity=".92"/>
<rect x="118.3" y="317.9" width="13" height="9.2" fill="#fff" rx="3.0" opacity="0.95"/>
<rect x="119.05" y="318.65" width="11.5" height="7.7" fill="#000" rx="2.6"/>
<rect x="116.6" y="328.2" width="16.2" height="7.8" fill="#9a9a9a"/>
<path d="M116.6,328.6H132.8M116.6,331.6H132.8M116.6,334.8H132.8" stroke="#fff" stroke-width="0.7" fill="none" opacity="0.9"/>
<rect x="116.6" y="336" width="16.2" height="1.4" fill="#333"/>
<rect x="118.5" y="338.1" width="12.6" height="6.2" fill="#fff" rx="2.8" opacity="0.95"/>
<rect x="119.25" y="338.85" width="11.1" height="4.7" fill="#000" rx="2.4"/>
<rect x="119" y="346.4" width="11.6" height="23.2" fill="#fff" opacity="0.96"/>
<path d="M119.43,348.41h1.82M119.43,352.28h1.82M119.43,356.14h1.82M119.43,360.01h1.82M119.43,363.88h1.82M119.43,367.74h1.82M122.1,348.41h1.82M122.1,352.28h1.82M122.1,356.14h1.82M122.1,360.01h1.82M122.1,363.88h1.82M122.1,367.74h1.82M125.68,348.41h1.82M125.68,352.28h1.82M125.68,356.14h1.82M125.68,360.01h1.82M125.68,363.88h1.82M125.68,367.74h1.82M128.35,348.41h1.82M128.35,352.28h1.82M128.35,356.14h1.82M128.35,360.01h1.82M128.35,363.88h1.82M128.35,367.74h1.82" stroke="#000" stroke-width="2.63" opacity=".92"/>
<rect x="115.6" y="371.4" width="18.2" height="3.2" fill="#ededed"/>
<rect x="116" y="376.4" width="17.4" height="3.6" fill="#aaa"/>
<path d="M116,378.2H133.4" stroke="#000" stroke-width="2.2" stroke-dasharray=".7 .8" opacity=".75"/>
<rect x="200" y="272.6" width="16.2" height="98.8" fill="#555"/>
<path d="M200.3,274V371M215.9,274V371" stroke="#fff" stroke-width="0.6" fill="none" opacity="0.7"/>
<path d="M199.2,271H217L215.6,274.3H200.6z" stroke="#fff" stroke-width="0.5" fill="#9c9c9c"/>
<rect x="200.6" y="275" width="15" height="5.3" fill="#8e8e8e"/>
<path d="M201.8,275.8v3.7M204.32,275.8v3.7M206.84,275.8v3.7M209.36,275.8v3.7M211.88,275.8v3.7M214.4,275.8v3.7" stroke="#fff" stroke-width="1.05" opacity=".9" stroke-dasharray="1.6 .6"/>
<path d="M200.6,275H215.6M200.6,280.3H215.6" stroke="#fff" stroke-width="0.5" fill="none" opacity="0.9"/>
<rect x="201.3" y="282.4" width="13.8" height="45.2" fill="#8c8c8c" stroke="#fff" stroke-width="0.7" opacity="0.95"/>
<rect x="201.3" y="337.6" width="13.8" height="33" fill="#8c8c8c" stroke="#fff" stroke-width="0.7" opacity="0.95"/>
<rect x="201.9" y="283.1" width="12.6" height="7.2" fill="#fff" rx="2.6" opacity="0.95"/>
<rect x="202.65" y="283.85" width="11.1" height="5.7" fill="#000" rx="2.2"/>
<rect x="202.4" y="292.3" width="11.6" height="23.9" fill="#fff" opacity="0.96"/>
<path d="M202.83,294.37h1.82M202.83,298.35h1.82M202.83,302.34h1.82M202.83,306.32h1.82M202.83,310.3h1.82M202.83,314.29h1.82M205.5,294.37h1.82M205.5,298.35h1.82M205.5,302.34h1.82M205.5,306.32h1.82M205.5,310.3h1.82M205.5,314.29h1.82M209.08,294.37h1.82M209.08,298.35h1.82M209.08,302.34h1.82M209.08,306.32h1.82M209.08,310.3h1.82M209.08,314.29h1.82M211.75,294.37h1.82M211.75,298.35h1.82M211.75,302.34h1.82M211.75,306.32h1.82M211.75,310.3h1.82M211.75,314.29h1.82" stroke="#000" stroke-width="2.71" opacity=".92"/>
<rect x="201.7" y="317.9" width="13" height="9.2" fill="#fff" rx="3.0" opacity="0.95"/>
<rect x="202.45" y="318.65" width="11.5" height="7.7" fill="#000" rx="2.6"/>
<rect x="200" y="328.2" width="16.2" height="7.8" fill="#9a9a9a"/>
<path d="M200,328.6H216.2M200,331.6H216.2M200,334.8H216.2" stroke="#fff" stroke-width="0.7" fill="none" opacity="0.9"/>
<rect x="200" y="336" width="16.2" height="1.4" fill="#333"/>
<rect x="201.9" y="338.1" width="12.6" height="6.2" fill="#fff" rx="2.8" opacity="0.95"/>
<rect x="202.65" y="338.85" width="11.1" height="4.7" fill="#000" rx="2.4"/>
<rect x="202.4" y="346.4" width="11.6" height="23.2" fill="#fff" opacity="0.96"/>
<path d="M202.83,348.41h1.82M202.83,352.28h1.82M202.83,356.14h1.82M202.83,360.01h1.82M202.83,363.88h1.82M202.83,367.74h1.82M205.5,348.41h1.82M205.5,352.28h1.82M205.5,356.14h1.82M205.5,360.01h1.82M205.5,363.88h1.82M205.5,367.74h1.82M209.08,348.41h1.82M209.08,352.28h1.82M209.08,356.14h1.82M209.08,360.01h1.82M209.08,363.88h1.82M209.08,367.74h1.82M211.75,348.41h1.82M211.75,352.28h1.82M211.75,356.14h1.82M211.75,360.01h1.82M211.75,363.88h1.82M211.75,367.74h1.82" stroke="#000" stroke-width="2.63" opacity=".92"/>
<rect x="199" y="371.4" width="18.2" height="3.2" fill="#ededed"/>
<rect x="199.4" y="376.4" width="17.4" height="3.6" fill="#aaa"/>
<path d="M199.4,378.2H216.8" stroke="#000" stroke-width="2.2" stroke-dasharray=".7 .8" opacity=".75"/>
<path d="M134.1,271H145.9L144.1,274.3H135.9z" stroke="#fff" stroke-width="0.5" fill="#9c9c9c"/>
<rect x="136.1" y="275.4" width="7.8" height="4.2" fill="#000" stroke="#fff" stroke-width="0.7"/>
<path d="M134.7,281H145.3" stroke="#fff" stroke-width="0.7" fill="none"/>
<rect x="135.5" y="281.8" width="9" height="18.6" fill="#9c9c9c"/>
<path d="M141.3,281.8V300.4" stroke="#fff" stroke-width="1" fill="none" opacity="0.95"/>
<path d="M138.8,281.8V300.4" stroke="#fff" stroke-width="0.7" fill="none" opacity="0.6"/>
<path d="M135.7,281.8V300.4M144.3,281.8V300.4" stroke="#fff" stroke-width="0.5" fill="none" opacity="0.6"/>
<rect x="135.7" y="304.4" width="8.8" height="51" fill="#000" stroke="#fff" stroke-width="0.7" opacity="0.85"/>
<circle cx="140" cy="323.6" r="2.5" fill="#fff"/>
<path d="M138.9,325.7L140,328.1L141.1,325.7z" fill="#ccc"/>
<circle cx="140" cy="323.1" r="0.75" fill="#888"/>
<path d="M135.1,357.4H144.9" stroke="#fff" stroke-width="0.6" fill="none" opacity="0.8"/>
<rect x="135.3" y="359.6" width="9.4" height="19" fill="#b4b4b4"/>
<path d="M141.3,359.6V378.6" stroke="#fff" stroke-width="1.1" fill="none"/>
<path d="M138.8,359.6V378.6" stroke="#fff" stroke-width="0.8" fill="none" opacity="0.7"/>
<path d="M135.6,359.6V378.6M144.4,359.6V378.6" stroke="#fff" stroke-width="0.5" fill="none" opacity="0.7"/>
<rect x="134.3" y="378.6" width="11.4" height="2" fill="#ddd"/>
<path d="M187.4,271H199.2L197.4,274.3H189.2z" stroke="#fff" stroke-width="0.5" fill="#9c9c9c"/>
<rect x="189.4" y="275.4" width="7.8" height="4.2" fill="#000" stroke="#fff" stroke-width="0.7"/>
<path d="M188,281H198.6" stroke="#fff" stroke-width="0.7" fill="none"/>
<rect x="188.8" y="281.8" width="9" height="18.6" fill="#9c9c9c"/>
<path d="M194.6,281.8V300.4" stroke="#fff" stroke-width="1" fill="none" opacity="0.95"/>
<path d="M192.1,281.8V300.4" stroke="#fff" stroke-width="0.7" fill="none" opacity="0.6"/>
<path d="M189,281.8V300.4M197.6,281.8V300.4" stroke="#fff" stroke-width="0.5" fill="none" opacity="0.6"/>
<rect x="189" y="304.4" width="8.8" height="51" fill="#000" stroke="#fff" stroke-width="0.7" opacity="0.85"/>
<circle cx="193.3" cy="323.6" r="2.5" fill="#fff"/>
<path d="M192.2,325.7L193.3,328.1L194.4,325.7z" fill="#ccc"/>
<circle cx="193.3" cy="323.1" r="0.75" fill="#888"/>
<path d="M188.4,357.4H198.2" stroke="#fff" stroke-width="0.6" fill="none" opacity="0.8"/>
<rect x="188.6" y="359.6" width="9.4" height="19" fill="#b4b4b4"/>
<path d="M194.6,359.6V378.6" stroke="#fff" stroke-width="1.1" fill="none"/>
<path d="M192.1,359.6V378.6" stroke="#fff" stroke-width="0.8" fill="none" opacity="0.7"/>
<path d="M188.9,359.6V378.6M197.7,359.6V378.6" stroke="#fff" stroke-width="0.5" fill="none" opacity="0.7"/>
<rect x="187.6" y="378.6" width="11.4" height="2" fill="#ddd"/>
<rect x="147.6" y="262" width="37.6" height="7.6" fill="#000"/>
<path d="M146.6,262.6Q166.4,255.6 186.2,262.6" stroke="#fff" stroke-width="1.3" fill="none"/>
<path d="M148,261.62L150.1,269.4M150.95,260.94L152.7,269.4M153.9,260.39L155.3,269.4M156.85,259.96L157.9,269.4M159.8,259.65L160.5,269.4M162.75,259.46L163.1,269.4M170.05,259.46L169.7,269.4M173,259.65L172.3,269.4M175.95,259.96L174.9,269.4M178.9,260.39L177.5,269.4M181.85,260.94L180.1,269.4M184.8,261.62L182.7,269.4" stroke="#fff" stroke-width="0.8" fill="none" opacity="0.9"/>
<path d="M148.1,269.8H184.7" stroke="#fff" stroke-width="0.7" fill="none"/>
<circle cx="166.4" cy="265.4" r="2.8" fill="#fff"/>
<path d="M165.3,267.8L166.4,270.2L167.5,267.8z" fill="#ccc"/>
<circle cx="166.4" cy="264.9" r="0.84" fill="#888"/>
<path d="M146.6,262.6L148.2,269.8M186.2,262.6L184.6,269.8" stroke="#fff" stroke-width="0.9" fill="none"/>
<rect x="146.5" y="272.6" width="39.8" height="102.4" fill="#555"/>
<path d="M145.7,271H187.1L185.7,274.3H147.1z" stroke="#fff" stroke-width="0.5" fill="#9c9c9c"/>
<rect x="147.3" y="275" width="38.2" height="5.3" fill="#8e8e8e"/>
<path d="M148.5,275.8v3.7M151.06,275.8v3.7M153.61,275.8v3.7M156.17,275.8v3.7M158.73,275.8v3.7M161.29,275.8v3.7M163.84,275.8v3.7M166.4,275.8v3.7M168.96,275.8v3.7M171.51,275.8v3.7M174.07,275.8v3.7M176.63,275.8v3.7M179.19,275.8v3.7M181.74,275.8v3.7M184.3,275.8v3.7" stroke="#fff" stroke-width="1.05" opacity=".9" stroke-dasharray="1.6 .6"/>
<path d="M147.3,275H185.5M147.3,280.3H185.5" stroke="#fff" stroke-width="0.5" fill="none" opacity="0.9"/>
<path d="M146.8,274V371M186,274V371" stroke="#fff" stroke-width="0.6" fill="none" opacity="0.7"/>
<rect x="148" y="282.4" width="8.7" height="45.2" fill="#8c8c8c" stroke="#fff" stroke-width="0.7" opacity="0.95"/>
<rect x="148" y="337.6" width="8.7" height="33" fill="#8c8c8c" stroke="#fff" stroke-width="0.7" opacity="0.95"/>
<rect x="148.5" y="283.3" width="7.7" height="7" fill="#fff" rx="2.6" opacity="0.95"/>
<rect x="149.25" y="284.05" width="6.2" height="5.5" fill="#000" rx="2.2"/>
<rect x="149.2" y="292.4" width="6.3" height="23.8" fill="#fff" opacity="0.96"/>
<path d="M149.7,294.46h2.14M149.7,298.43h2.14M149.7,302.4h2.14M149.7,306.36h2.14M149.7,310.33h2.14M149.7,314.3h2.14M152.85,294.46h2.14M152.85,298.43h2.14M152.85,302.4h2.14M152.85,306.36h2.14M152.85,310.33h2.14M152.85,314.3h2.14" stroke="#000" stroke-width="2.7" opacity=".92"/>
<rect x="148.3" y="317.9" width="8.1" height="9.2" fill="#fff" rx="2.8" opacity="0.95"/>
<rect x="149.05" y="318.65" width="6.6" height="7.7" fill="#000" rx="2.4"/>
<rect x="148.5" y="338.1" width="7.7" height="6.2" fill="#fff" rx="2.6" opacity="0.95"/>
<rect x="149.25" y="338.85" width="6.2" height="4.7" fill="#000" rx="2.2"/>
<rect x="149.2" y="346.4" width="6.3" height="23.2" fill="#fff" opacity="0.96"/>
<path d="M149.7,348.41h2.14M149.7,352.28h2.14M149.7,356.14h2.14M149.7,360.01h2.14M149.7,363.88h2.14M149.7,367.74h2.14M152.85,348.41h2.14M152.85,352.28h2.14M152.85,356.14h2.14M152.85,360.01h2.14M152.85,363.88h2.14M152.85,367.74h2.14" stroke="#000" stroke-width="2.63" opacity=".92"/>
<rect x="159.5" y="282.4" width="14.3" height="45.2" fill="#8c8c8c" stroke="#fff" stroke-width="0.7" opacity="0.95"/>
<rect x="159.5" y="337.6" width="14.3" height="33" fill="#8c8c8c" stroke="#fff" stroke-width="0.7" opacity="0.95"/>
<rect x="160" y="283.3" width="13.3" height="7" fill="#fff" rx="2.6" opacity="0.95"/>
<rect x="160.75" y="284.05" width="11.8" height="5.5" fill="#000" rx="2.2"/>
<rect x="160.7" y="292.4" width="11.9" height="23.8" fill="#fff" opacity="0.96"/>
<path d="M161.14,294.46h1.87M161.14,298.43h1.87M161.14,302.4h1.87M161.14,306.36h1.87M161.14,310.33h1.87M161.14,314.3h1.87M163.89,294.46h1.87M163.89,298.43h1.87M163.89,302.4h1.87M163.89,306.36h1.87M163.89,310.33h1.87M163.89,314.3h1.87M167.54,294.46h1.87M167.54,298.43h1.87M167.54,302.4h1.87M167.54,306.36h1.87M167.54,310.33h1.87M167.54,314.3h1.87M170.29,294.46h1.87M170.29,298.43h1.87M170.29,302.4h1.87M170.29,306.36h1.87M170.29,310.33h1.87M170.29,314.3h1.87" stroke="#000" stroke-width="2.7" opacity=".92"/>
<rect x="159.8" y="317.9" width="13.7" height="9.2" fill="#fff" rx="2.8" opacity="0.95"/>
<rect x="160.55" y="318.65" width="12.2" height="7.7" fill="#000" rx="2.4"/>
<rect x="160" y="338.1" width="13.3" height="6.2" fill="#fff" rx="2.6" opacity="0.95"/>
<rect x="160.75" y="338.85" width="11.8" height="4.7" fill="#000" rx="2.2"/>
<rect x="160.7" y="346.4" width="11.9" height="23.2" fill="#fff" opacity="0.96"/>
<path d="M161.14,348.41h1.87M161.14,352.28h1.87M161.14,356.14h1.87M161.14,360.01h1.87M161.14,363.88h1.87M161.14,367.74h1.87M163.89,348.41h1.87M163.89,352.28h1.87M163.89,356.14h1.87M163.89,360.01h1.87M163.89,363.88h1.87M163.89,367.74h1.87M167.54,348.41h1.87M167.54,352.28h1.87M167.54,356.14h1.87M167.54,360.01h1.87M167.54,363.88h1.87M167.54,367.74h1.87M170.29,348.41h1.87M170.29,352.28h1.87M170.29,356.14h1.87M170.29,360.01h1.87M170.29,363.88h1.87M170.29,367.74h1.87" stroke="#000" stroke-width="2.63" opacity=".92"/>
<rect x="176.6" y="282.4" width="8.9" height="45.2" fill="#8c8c8c" stroke="#fff" stroke-width="0.7" opacity="0.95"/>
<rect x="176.6" y="337.6" width="8.9" height="33" fill="#8c8c8c" stroke="#fff" stroke-width="0.7" opacity="0.95"/>
<rect x="177.1" y="283.3" width="7.9" height="7" fill="#fff" rx="2.6" opacity="0.95"/>
<rect x="177.85" y="284.05" width="6.4" height="5.5" fill="#000" rx="2.2"/>
<rect x="177.8" y="292.4" width="6.5" height="23.8" fill="#fff" opacity="0.96"/>
<path d="M178.32,294.46h2.21M178.32,298.43h2.21M178.32,302.4h2.21M178.32,306.36h2.21M178.32,310.33h2.21M178.32,314.3h2.21M181.57,294.46h2.21M181.57,298.43h2.21M181.57,302.4h2.21M181.57,306.36h2.21M181.57,310.33h2.21M181.57,314.3h2.21" stroke="#000" stroke-width="2.7" opacity=".92"/>
<rect x="176.9" y="317.9" width="8.3" height="9.2" fill="#fff" rx="2.8" opacity="0.95"/>
<rect x="177.65" y="318.65" width="6.8" height="7.7" fill="#000" rx="2.4"/>
<rect x="177.1" y="338.1" width="7.9" height="6.2" fill="#fff" rx="2.6" opacity="0.95"/>
<rect x="177.85" y="338.85" width="6.4" height="4.7" fill="#000" rx="2.2"/>
<rect x="177.8" y="346.4" width="6.5" height="23.2" fill="#fff" opacity="0.96"/>
<path d="M178.32,348.41h2.21M178.32,352.28h2.21M178.32,356.14h2.21M178.32,360.01h2.21M178.32,363.88h2.21M178.32,367.74h2.21M181.57,348.41h2.21M181.57,352.28h2.21M181.57,356.14h2.21M181.57,360.01h2.21M181.57,363.88h2.21M181.57,367.74h2.21" stroke="#000" stroke-width="2.63" opacity=".92"/>
<rect x="146.5" y="328.2" width="39.8" height="8.4" fill="#666"/>
<path d="M146.5,328.6H186.3M146.5,331.6H186.3M146.5,334.6H186.3" stroke="#fff" stroke-width="0.6" fill="none" opacity="0.8"/>
<path d="M165.4,328.4V336.4M167.4,328.4V336.4" stroke="#fff" stroke-width="0.7" fill="none"/>
<path d="M163.4,331.5h6M166.4,328v3" stroke="#fff" stroke-width="0.7" fill="none"/>
<rect x="145.3" y="371.4" width="42.2" height="3.4" fill="#ededed"/>
<rect x="146.5" y="376.6" width="39.8" height="3.4" fill="#bbb"/>
<path d="M146.5,378.3H186.3" stroke="#000" stroke-width="2.2" stroke-dasharray=".7 .8" opacity=".75"/>
<rect x="165.4" y="376.4" width="2" height="3.8" fill="#fff"/>
<circle cx="139.4" cy="248.2" r="2.5" fill="#fff"/>
<path d="M138.3,250.3L139.4,252.7L140.5,250.3z" fill="#ccc"/>
<circle cx="139.4" cy="247.7" r="0.75" fill="#888"/>
<circle cx="192.8" cy="248.2" r="2.5" fill="#fff"/>
<path d="M191.7,250.3L192.8,252.7L193.9,250.3z" fill="#ccc"/>
<circle cx="192.8" cy="247.7" r="0.75" fill="#888"/>
<path d="M368.1,217.8C374.1,216.6 376.2,213 378.7,209.4C381.6,205 385.2,203 391.6,203C398,203 401.6,205 404.5,209.4C407,213 409.1,216.6 415.1,217.8V226.6H368.1z" stroke="#fff" stroke-width="0" fill="#000"/>
<path d="M368.1,217.8C374.1,216.6 376.2,213 378.7,209.4C381.6,205 385.2,203 391.6,203C398,203 401.6,205 404.5,209.4C407,213 409.1,216.6 415.1,217.8" stroke="#fff" stroke-width="1.1" fill="none"/>
<path d="M368.6,225.4H414.6" stroke="#fff" stroke-width="0.8" fill="none"/>
<path d="M368.6,227.6H414.6" stroke="#fff" stroke-width="0.7" fill="none" opacity="0.9"/>
<ellipse cx="391.6" cy="212.6" rx="4.9" ry="6.4" fill="none" stroke="#fff" stroke-width="1.1"/>
<path d="M365.2,225.2L366.5,219.6L369.7,221.6L372.9,219.6L374.2,225.2z" stroke="#fff" stroke-width="0.7" fill="none"/>
<path d="M368.1,225v-2.4h3.2v2.4" stroke="#fff" stroke-width="0.5" fill="none" opacity="0.8"/>
<rect x="365.5" y="228.5" width="8.4" height="8.9" fill="none" stroke="#fff" stroke-width="0.9"/>
<circle cx="369.7" cy="233" r="1.9" fill="none" stroke="#fff" stroke-width=".7"/>
<path d="M409,225.2L410.3,219.6L413.5,221.6L416.7,219.6L418,225.2z" stroke="#fff" stroke-width="0.7" fill="none"/>
<path d="M411.9,225v-2.4h3.2v2.4" stroke="#fff" stroke-width="0.5" fill="none" opacity="0.8"/>
<rect x="409.3" y="228.5" width="8.4" height="8.9" fill="none" stroke="#fff" stroke-width="0.9"/>
<circle cx="413.5" cy="233" r="1.9" fill="none" stroke="#fff" stroke-width=".7"/>
<path d="M374,231.2Q375,236.4 379.6,234.4Q385.6,239.6 391.6,234.6Q397.6,239.6 403.6,234.4Q408.2,236.4 409.2,231.2" stroke="#fff" stroke-width="1.15" fill="none"/>
<circle cx="379.6" cy="231.6" r="1.5" fill="none" stroke="#fff" stroke-width=".8"/>
<circle cx="391.6" cy="231.6" r="1.5" fill="none" stroke="#fff" stroke-width=".8"/>
<circle cx="403.6" cy="231.6" r="1.5" fill="none" stroke="#fff" stroke-width=".8"/>
<rect x="388.2" y="251.6" width="6.8" height="6.4" fill="#000" stroke="#fff" stroke-width="0.8"/>
<rect x="341.8" y="272.6" width="16.2" height="98.8" fill="#555"/>
<path d="M342.1,274V371M357.7,274V371" stroke="#fff" stroke-width="0.6" fill="none" opacity="0.7"/>
<path d="M341,271H358.8L357.4,274.3H342.4z" stroke="#fff" stroke-width="0.5" fill="#9c9c9c"/>
<rect x="342.4" y="275" width="15" height="5.3" fill="#8e8e8e"/>
<path d="M343.6,275.8v3.7M346.12,275.8v3.7M348.64,275.8v3.7M351.16,275.8v3.7M353.68,275.8v3.7M356.2,275.8v3.7" stroke="#fff" stroke-width="1.05" opacity=".9" stroke-dasharray="1.6 .6"/>
<path d="M342.4,275H357.4M342.4,280.3H357.4" stroke="#fff" stroke-width="0.5" fill="none" opacity="0.9"/>
<rect x="343.1" y="282.4" width="13.8" height="45.2" fill="#8c8c8c" stroke="#fff" stroke-width="0.7" opacity="0.95"/>
<rect x="343.1" y="337.6" width="13.8" height="33" fill="#8c8c8c" stroke="#fff" stroke-width="0.7" opacity="0.95"/>
<rect x="343.7" y="283.1" width="12.6" height="7.2" fill="#fff" rx="2.6" opacity="0.95"/>
<rect x="344.45" y="283.85" width="11.1" height="5.7" fill="#000" rx="2.2"/>
<rect x="344.2" y="292.3" width="11.6" height="23.9" fill="#fff" opacity="0.96"/>
<path d="M344.63,294.37h1.82M344.63,298.35h1.82M344.63,302.34h1.82M344.63,306.32h1.82M344.63,310.3h1.82M344.63,314.29h1.82M347.3,294.37h1.82M347.3,298.35h1.82M347.3,302.34h1.82M347.3,306.32h1.82M347.3,310.3h1.82M347.3,314.29h1.82M350.88,294.37h1.82M350.88,298.35h1.82M350.88,302.34h1.82M350.88,306.32h1.82M350.88,310.3h1.82M350.88,314.29h1.82M353.55,294.37h1.82M353.55,298.35h1.82M353.55,302.34h1.82M353.55,306.32h1.82M353.55,310.3h1.82M353.55,314.29h1.82" stroke="#000" stroke-width="2.71" opacity=".92"/>
<rect x="343.5" y="317.9" width="13" height="9.2" fill="#fff" rx="3.0" opacity="0.95"/>
<rect x="344.25" y="318.65" width="11.5" height="7.7" fill="#000" rx="2.6"/>
<rect x="341.8" y="328.2" width="16.2" height="7.8" fill="#9a9a9a"/>
<path d="M341.8,328.6H358M341.8,331.6H358M341.8,334.8H358" stroke="#fff" stroke-width="0.7" fill="none" opacity="0.9"/>
<rect x="341.8" y="336" width="16.2" height="1.4" fill="#333"/>
<rect x="343.7" y="338.1" width="12.6" height="6.2" fill="#fff" rx="2.8" opacity="0.95"/>
<rect x="344.45" y="338.85" width="11.1" height="4.7" fill="#000" rx="2.4"/>
<rect x="344.2" y="346.4" width="11.6" height="23.2" fill="#fff" opacity="0.96"/>
<path d="M344.63,348.41h1.82M344.63,352.28h1.82M344.63,356.14h1.82M344.63,360.01h1.82M344.63,363.88h1.82M344.63,367.74h1.82M347.3,348.41h1.82M347.3,352.28h1.82M347.3,356.14h1.82M347.3,360.01h1.82M347.3,363.88h1.82M347.3,367.74h1.82M350.88,348.41h1.82M350.88,352.28h1.82M350.88,356.14h1.82M350.88,360.01h1.82M350.88,363.88h1.82M350.88,367.74h1.82M353.55,348.41h1.82M353.55,352.28h1.82M353.55,356.14h1.82M353.55,360.01h1.82M353.55,363.88h1.82M353.55,367.74h1.82" stroke="#000" stroke-width="2.63" opacity=".92"/>
<rect x="340.8" y="371.4" width="18.2" height="3.2" fill="#ededed"/>
<rect x="341.2" y="376.4" width="17.4" height="3.6" fill="#aaa"/>
<path d="M341.2,378.2H358.6" stroke="#000" stroke-width="2.2" stroke-dasharray=".7 .8" opacity=".75"/>
<rect x="425.2" y="272.6" width="16.2" height="98.8" fill="#555"/>
<path d="M425.5,274V371M441.1,274V371" stroke="#fff" stroke-width="0.6" fill="none" opacity="0.7"/>
<path d="M424.4,271H442.2L440.8,274.3H425.8z" stroke="#fff" stroke-width="0.5" fill="#9c9c9c"/>
<rect x="425.8" y="275" width="15" height="5.3" fill="#8e8e8e"/>
<path d="M427,275.8v3.7M429.52,275.8v3.7M432.04,275.8v3.7M434.56,275.8v3.7M437.08,275.8v3.7M439.6,275.8v3.7" stroke="#fff" stroke-width="1.05" opacity=".9" stroke-dasharray="1.6 .6"/>
<path d="M425.8,275H440.8M425.8,280.3H440.8" stroke="#fff" stroke-width="0.5" fill="none" opacity="0.9"/>
<rect x="426.5" y="282.4" width="13.8" height="45.2" fill="#8c8c8c" stroke="#fff" stroke-width="0.7" opacity="0.95"/>
<rect x="426.5" y="337.6" width="13.8" height="33" fill="#8c8c8c" stroke="#fff" stroke-width="0.7" opacity="0.95"/>
<rect x="427.1" y="283.1" width="12.6" height="7.2" fill="#fff" rx="2.6" opacity="0.95"/>
<rect x="427.85" y="283.85" width="11.1" height="5.7" fill="#000" rx="2.2"/>
<rect x="427.6" y="292.3" width="11.6" height="23.9" fill="#fff" opacity="0.96"/>
<path d="M428.03,294.37h1.82M428.03,298.35h1.82M428.03,302.34h1.82M428.03,306.32h1.82M428.03,310.3h1.82M428.03,314.29h1.82M430.7,294.37h1.82M430.7,298.35h1.82M430.7,302.34h1.82M430.7,306.32h1.82M430.7,310.3h1.82M430.7,314.29h1.82M434.28,294.37h1.82M434.28,298.35h1.82M434.28,302.34h1.82M434.28,306.32h1.82M434.28,310.3h1.82M434.28,314.29h1.82M436.95,294.37h1.82M436.95,298.35h1.82M436.95,302.34h1.82M436.95,306.32h1.82M436.95,310.3h1.82M436.95,314.29h1.82" stroke="#000" stroke-width="2.71" opacity=".92"/>
<rect x="426.9" y="317.9" width="13" height="9.2" fill="#fff" rx="3.0" opacity="0.95"/>
<rect x="427.65" y="318.65" width="11.5" height="7.7" fill="#000" rx="2.6"/>
<rect x="425.2" y="328.2" width="16.2" height="7.8" fill="#9a9a9a"/>
<path d="M425.2,328.6H441.4M425.2,331.6H441.4M425.2,334.8H441.4" stroke="#fff" stroke-width="0.7" fill="none" opacity="0.9"/>
<rect x="425.2" y="336" width="16.2" height="1.4" fill="#333"/>
<rect x="427.1" y="338.1" width="12.6" height="6.2" fill="#fff" rx="2.8" opacity="0.95"/>
<rect x="427.85" y="338.85" width="11.1" height="4.7" fill="#000" rx="2.4"/>
<rect x="427.6" y="346.4" width="11.6" height="23.2" fill="#fff" opacity="0.96"/>
<path d="M428.03,348.41h1.82M428.03,352.28h1.82M428.03,356.14h1.82M428.03,360.01h1.82M428.03,363.88h1.82M428.03,367.74h1.82M430.7,348.41h1.82M430.7,352.28h1.82M430.7,356.14h1.82M430.7,360.01h1.82M430.7,363.88h1.82M430.7,367.74h1.82M434.28,348.41h1.82M434.28,352.28h1.82M434.28,356.14h1.82M434.28,360.01h1.82M434.28,363.88h1.82M434.28,367.74h1.82M436.95,348.41h1.82M436.95,352.28h1.82M436.95,356.14h1.82M436.95,360.01h1.82M436.95,363.88h1.82M436.95,367.74h1.82" stroke="#000" stroke-width="2.63" opacity=".92"/>
<rect x="424.2" y="371.4" width="18.2" height="3.2" fill="#ededed"/>
<rect x="424.6" y="376.4" width="17.4" height="3.6" fill="#aaa"/>
<path d="M424.6,378.2H442" stroke="#000" stroke-width="2.2" stroke-dasharray=".7 .8" opacity=".75"/>
<path d="M359.3,271H371.1L369.3,274.3H361.1z" stroke="#fff" stroke-width="0.5" fill="#9c9c9c"/>
<rect x="361.3" y="275.4" width="7.8" height="4.2" fill="#000" stroke="#fff" stroke-width="0.7"/>
<path d="M359.9,281H370.5" stroke="#fff" stroke-width="0.7" fill="none"/>
<rect x="360.7" y="281.8" width="9" height="18.6" fill="#9c9c9c"/>
<path d="M366.5,281.8V300.4" stroke="#fff" stroke-width="1" fill="none" opacity="0.95"/>
<path d="M364,281.8V300.4" stroke="#fff" stroke-width="0.7" fill="none" opacity="0.6"/>
<path d="M360.9,281.8V300.4M369.5,281.8V300.4" stroke="#fff" stroke-width="0.5" fill="none" opacity="0.6"/>
<rect x="360.9" y="304.4" width="8.8" height="51" fill="#000" stroke="#fff" stroke-width="0.7" opacity="0.85"/>
<circle cx="365.2" cy="323.6" r="2.5" fill="#fff"/>
<path d="M364.1,325.7L365.2,328.1L366.3,325.7z" fill="#ccc"/>
<circle cx="365.2" cy="323.1" r="0.75" fill="#888"/>
<path d="M360.3,357.4H370.1" stroke="#fff" stroke-width="0.6" fill="none" opacity="0.8"/>
<rect x="360.5" y="359.6" width="9.4" height="19" fill="#b4b4b4"/>
<path d="M366.5,359.6V378.6" stroke="#fff" stroke-width="1.1" fill="none"/>
<path d="M364,359.6V378.6" stroke="#fff" stroke-width="0.8" fill="none" opacity="0.7"/>
<path d="M360.8,359.6V378.6M369.6,359.6V378.6" stroke="#fff" stroke-width="0.5" fill="none" opacity="0.7"/>
<rect x="359.5" y="378.6" width="11.4" height="2" fill="#ddd"/>
<path d="M412.6,271H424.4L422.6,274.3H414.4z" stroke="#fff" stroke-width="0.5" fill="#9c9c9c"/>
<rect x="414.6" y="275.4" width="7.8" height="4.2" fill="#000" stroke="#fff" stroke-width="0.7"/>
<path d="M413.2,281H423.8" stroke="#fff" stroke-width="0.7" fill="none"/>
<rect x="414" y="281.8" width="9" height="18.6" fill="#9c9c9c"/>
<path d="M419.8,281.8V300.4" stroke="#fff" stroke-width="1" fill="none" opacity="0.95"/>
<path d="M417.3,281.8V300.4" stroke="#fff" stroke-width="0.7" fill="none" opacity="0.6"/>
<path d="M414.2,281.8V300.4M422.8,281.8V300.4" stroke="#fff" stroke-width="0.5" fill="none" opacity="0.6"/>
<rect x="414.2" y="304.4" width="8.8" height="51" fill="#000" stroke="#fff" stroke-width="0.7" opacity="0.85"/>
<circle cx="418.5" cy="323.6" r="2.5" fill="#fff"/>
<path d="M417.4,325.7L418.5,328.1L419.6,325.7z" fill="#ccc"/>
<circle cx="418.5" cy="323.1" r="0.75" fill="#888"/>
<path d="M413.6,357.4H423.4" stroke="#fff" stroke-width="0.6" fill="none" opacity="0.8"/>
<rect x="413.8" y="359.6" width="9.4" height="19" fill="#b4b4b4"/>
<path d="M419.8,359.6V378.6" stroke="#fff" stroke-width="1.1" fill="none"/>
<path d="M417.3,359.6V378.6" stroke="#fff" stroke-width="0.8" fill="none" opacity="0.7"/>
<path d="M414.1,359.6V378.6M422.9,359.6V378.6" stroke="#fff" stroke-width="0.5" fill="none" opacity="0.7"/>
<rect x="412.8" y="378.6" width="11.4" height="2" fill="#ddd"/>
<rect x="372.8" y="262" width="37.6" height="7.6" fill="#000"/>
<path d="M371.8,262.6Q391.6,255.6 411.4,262.6" stroke="#fff" stroke-width="1.3" fill="none"/>
<path d="M373.2,261.62L375.3,269.4M376.15,260.94L377.9,269.4M379.1,260.39L380.5,269.4M382.05,259.96L383.1,269.4M385,259.65L385.7,269.4M387.95,259.46L388.3,269.4M395.25,259.46L394.9,269.4M398.2,259.65L397.5,269.4M401.15,259.96L400.1,269.4M404.1,260.39L402.7,269.4M407.05,260.94L405.3,269.4M410,261.62L407.9,269.4" stroke="#fff" stroke-width="0.8" fill="none" opacity="0.9"/>
<path d="M373.3,269.8H409.9" stroke="#fff" stroke-width="0.7" fill="none"/>
<circle cx="391.6" cy="265.4" r="2.8" fill="#fff"/>
<path d="M390.5,267.8L391.6,270.2L392.7,267.8z" fill="#ccc"/>
<circle cx="391.6" cy="264.9" r="0.84" fill="#888"/>
<path d="M371.8,262.6L373.4,269.8M411.4,262.6L409.8,269.8" stroke="#fff" stroke-width="0.9" fill="none"/>
<rect x="371.7" y="272.6" width="39.8" height="102.4" fill="#555"/>
<path d="M370.9,271H412.3L410.9,274.3H372.3z" stroke="#fff" stroke-width="0.5" fill="#9c9c9c"/>
<rect x="372.5" y="275" width="38.2" height="5.3" fill="#8e8e8e"/>
<path d="M373.7,275.8v3.7M376.26,275.8v3.7M378.81,275.8v3.7M381.37,275.8v3.7M383.93,275.8v3.7M386.49,275.8v3.7M389.04,275.8v3.7M391.6,275.8v3.7M394.16,275.8v3.7M396.71,275.8v3.7M399.27,275.8v3.7M401.83,275.8v3.7M404.39,275.8v3.7M406.94,275.8v3.7M409.5,275.8v3.7" stroke="#fff" stroke-width="1.05" opacity=".9" stroke-dasharray="1.6 .6"/>
<path d="M372.5,275H410.7M372.5,280.3H410.7" stroke="#fff" stroke-width="0.5" fill="none" opacity="0.9"/>
<path d="M372,274V371M411.2,274V371" stroke="#fff" stroke-width="0.6" fill="none" opacity="0.7"/>
<rect x="373.2" y="282.4" width="8.7" height="45.2" fill="#8c8c8c" stroke="#fff" stroke-width="0.7" opacity="0.95"/>
<rect x="373.2" y="337.6" width="8.7" height="33" fill="#8c8c8c" stroke="#fff" stroke-width="0.7" opacity="0.95"/>
<rect x="373.7" y="283.3" width="7.7" height="7" fill="#fff" rx="2.6" opacity="0.95"/>
<rect x="374.45" y="284.05" width="6.2" height="5.5" fill="#000" rx="2.2"/>
<rect x="374.4" y="292.4" width="6.3" height="23.8" fill="#fff" opacity="0.96"/>
<path d="M374.9,294.46h2.14M374.9,298.43h2.14M374.9,302.4h2.14M374.9,306.36h2.14M374.9,310.33h2.14M374.9,314.3h2.14M378.05,294.46h2.14M378.05,298.43h2.14M378.05,302.4h2.14M378.05,306.36h2.14M378.05,310.33h2.14M378.05,314.3h2.14" stroke="#000" stroke-width="2.7" opacity=".92"/>
<rect x="373.5" y="317.9" width="8.1" height="9.2" fill="#fff" rx="2.8" opacity="0.95"/>
<rect x="374.25" y="318.65" width="6.6" height="7.7" fill="#000" rx="2.4"/>
<rect x="373.7" y="338.1" width="7.7" height="6.2" fill="#fff" rx="2.6" opacity="0.95"/>
<rect x="374.45" y="338.85" width="6.2" height="4.7" fill="#000" rx="2.2"/>
<rect x="374.4" y="346.4" width="6.3" height="23.2" fill="#fff" opacity="0.96"/>
<path d="M374.9,348.41h2.14M374.9,352.28h2.14M374.9,356.14h2.14M374.9,360.01h2.14M374.9,363.88h2.14M374.9,367.74h2.14M378.05,348.41h2.14M378.05,352.28h2.14M378.05,356.14h2.14M378.05,360.01h2.14M378.05,363.88h2.14M378.05,367.74h2.14" stroke="#000" stroke-width="2.63" opacity=".92"/>
<rect x="384.7" y="282.4" width="14.3" height="45.2" fill="#8c8c8c" stroke="#fff" stroke-width="0.7" opacity="0.95"/>
<rect x="384.7" y="337.6" width="14.3" height="33" fill="#8c8c8c" stroke="#fff" stroke-width="0.7" opacity="0.95"/>
<rect x="385.2" y="283.3" width="13.3" height="7" fill="#fff" rx="2.6" opacity="0.95"/>
<rect x="385.95" y="284.05" width="11.8" height="5.5" fill="#000" rx="2.2"/>
<rect x="385.9" y="292.4" width="11.9" height="23.8" fill="#fff" opacity="0.96"/>
<path d="M386.34,294.46h1.87M386.34,298.43h1.87M386.34,302.4h1.87M386.34,306.36h1.87M386.34,310.33h1.87M386.34,314.3h1.87M389.09,294.46h1.87M389.09,298.43h1.87M389.09,302.4h1.87M389.09,306.36h1.87M389.09,310.33h1.87M389.09,314.3h1.87M392.74,294.46h1.87M392.74,298.43h1.87M392.74,302.4h1.87M392.74,306.36h1.87M392.74,310.33h1.87M392.74,314.3h1.87M395.49,294.46h1.87M395.49,298.43h1.87M395.49,302.4h1.87M395.49,306.36h1.87M395.49,310.33h1.87M395.49,314.3h1.87" stroke="#000" stroke-width="2.7" opacity=".92"/>
<rect x="385" y="317.9" width="13.7" height="9.2" fill="#fff" rx="2.8" opacity="0.95"/>
<rect x="385.75" y="318.65" width="12.2" height="7.7" fill="#000" rx="2.4"/>
<rect x="385.2" y="338.1" width="13.3" height="6.2" fill="#fff" rx="2.6" opacity="0.95"/>
<rect x="385.95" y="338.85" width="11.8" height="4.7" fill="#000" rx="2.2"/>
<rect x="385.9" y="346.4" width="11.9" height="23.2" fill="#fff" opacity="0.96"/>
<path d="M386.34,348.41h1.87M386.34,352.28h1.87M386.34,356.14h1.87M386.34,360.01h1.87M386.34,363.88h1.87M386.34,367.74h1.87M389.09,348.41h1.87M389.09,352.28h1.87M389.09,356.14h1.87M389.09,360.01h1.87M389.09,363.88h1.87M389.09,367.74h1.87M392.74,348.41h1.87M392.74,352.28h1.87M392.74,356.14h1.87M392.74,360.01h1.87M392.74,363.88h1.87M392.74,367.74h1.87M395.49,348.41h1.87M395.49,352.28h1.87M395.49,356.14h1.87M395.49,360.01h1.87M395.49,363.88h1.87M395.49,367.74h1.87" stroke="#000" stroke-width="2.63" opacity=".92"/>
<rect x="401.8" y="282.4" width="8.9" height="45.2" fill="#8c8c8c" stroke="#fff" stroke-width="0.7" opacity="0.95"/>
<rect x="401.8" y="337.6" width="8.9" height="33" fill="#8c8c8c" stroke="#fff" stroke-width="0.7" opacity="0.95"/>
<rect x="402.3" y="283.3" width="7.9" height="7" fill="#fff" rx="2.6" opacity="0.95"/>
<rect x="403.05" y="284.05" width="6.4" height="5.5" fill="#000" rx="2.2"/>
<rect x="403" y="292.4" width="6.5" height="23.8" fill="#fff" opacity="0.96"/>
<path d="M403.52,294.46h2.21M403.52,298.43h2.21M403.52,302.4h2.21M403.52,306.36h2.21M403.52,310.33h2.21M403.52,314.3h2.21M406.77,294.46h2.21M406.77,298.43h2.21M406.77,302.4h2.21M406.77,306.36h2.21M406.77,310.33h2.21M406.77,314.3h2.21" stroke="#000" stroke-width="2.7" opacity=".92"/>
<rect x="402.1" y="317.9" width="8.3" height="9.2" fill="#fff" rx="2.8" opacity="0.95"/>
<rect x="402.85" y="318.65" width="6.8" height="7.7" fill="#000" rx="2.4"/>
<rect x="402.3" y="338.1" width="7.9" height="6.2" fill="#fff" rx="2.6" opacity="0.95"/>
<rect x="403.05" y="338.85" width="6.4" height="4.7" fill="#000" rx="2.2"/>
<rect x="403" y="346.4" width="6.5" height="23.2" fill="#fff" opacity="0.96"/>
<path d="M403.52,348.41h2.21M403.52,352.28h2.21M403.52,356.14h2.21M403.52,360.01h2.21M403.52,363.88h2.21M403.52,367.74h2.21M406.77,348.41h2.21M406.77,352.28h2.21M406.77,356.14h2.21M406.77,360.01h2.21M406.77,363.88h2.21M406.77,367.74h2.21" stroke="#000" stroke-width="2.63" opacity=".92"/>
<rect x="371.7" y="328.2" width="39.8" height="8.4" fill="#666"/>
<path d="M371.7,328.6H411.5M371.7,331.6H411.5M371.7,334.6H411.5" stroke="#fff" stroke-width="0.6" fill="none" opacity="0.8"/>
<path d="M390.6,328.4V336.4M392.6,328.4V336.4" stroke="#fff" stroke-width="0.7" fill="none"/>
<path d="M388.6,331.5h6M391.6,328v3" stroke="#fff" stroke-width="0.7" fill="none"/>
<rect x="370.5" y="371.4" width="42.2" height="3.4" fill="#ededed"/>
<rect x="371.7" y="376.6" width="39.8" height="3.4" fill="#bbb"/>
<path d="M371.7,378.3H411.5" stroke="#000" stroke-width="2.2" stroke-dasharray=".7 .8" opacity=".75"/>
<rect x="390.6" y="376.4" width="2" height="3.8" fill="#fff"/>
<circle cx="364.6" cy="248.2" r="2.5" fill="#fff"/>
<path d="M363.5,250.3L364.6,252.7L365.7,250.3z" fill="#ccc"/>
<circle cx="364.6" cy="247.7" r="0.75" fill="#888"/>
<circle cx="418" cy="248.2" r="2.5" fill="#fff"/>
<path d="M416.9,250.3L418,252.7L419.1,250.3z" fill="#ccc"/>
<circle cx="418" cy="247.7" r="0.75" fill="#888"/>
<path d="M593.3,217.8C599.3,216.6 601.4,213 603.9,209.4C606.8,205 610.4,203 616.8,203C623.2,203 626.8,205 629.7,209.4C632.2,213 634.3,216.6 640.3,217.8V226.6H593.3z" stroke="#fff" stroke-width="0" fill="#000"/>
<path d="M593.3,217.8C599.3,216.6 601.4,213 603.9,209.4C606.8,205 610.4,203 616.8,203C623.2,203 626.8,205 629.7,209.4C632.2,213 634.3,216.6 640.3,217.8" stroke="#fff" stroke-width="1.1" fill="none"/>
<path d="M593.8,225.4H639.8" stroke="#fff" stroke-width="0.8" fill="none"/>
<path d="M593.8,227.6H639.8" stroke="#fff" stroke-width="0.7" fill="none" opacity="0.9"/>
<ellipse cx="616.8" cy="212.6" rx="4.9" ry="6.4" fill="none" stroke="#fff" stroke-width="1.1"/>
<path d="M590.4,225.2L591.7,219.6L594.9,221.6L598.1,219.6L599.4,225.2z" stroke="#fff" stroke-width="0.7" fill="none"/>
<path d="M593.3,225v-2.4h3.2v2.4" stroke="#fff" stroke-width="0.5" fill="none" opacity="0.8"/>
<rect x="590.7" y="228.5" width="8.4" height="8.9" fill="none" stroke="#fff" stroke-width="0.9"/>
<circle cx="594.9" cy="233" r="1.9" fill="none" stroke="#fff" stroke-width=".7"/>
<path d="M634.2,225.2L635.5,219.6L638.7,221.6L641.9,219.6L643.2,225.2z" stroke="#fff" stroke-width="0.7" fill="none"/>
<path d="M637.1,225v-2.4h3.2v2.4" stroke="#fff" stroke-width="0.5" fill="none" opacity="0.8"/>
<rect x="634.5" y="228.5" width="8.4" height="8.9" fill="none" stroke="#fff" stroke-width="0.9"/>
<circle cx="638.7" cy="233" r="1.9" fill="none" stroke="#fff" stroke-width=".7"/>
<path d="M599.2,231.2Q600.2,236.4 604.8,234.4Q610.8,239.6 616.8,234.6Q622.8,239.6 628.8,234.4Q633.4,236.4 634.4,231.2" stroke="#fff" stroke-width="1.15" fill="none"/>
<circle cx="604.8" cy="231.6" r="1.5" fill="none" stroke="#fff" stroke-width=".8"/>
<circle cx="616.8" cy="231.6" r="1.5" fill="none" stroke="#fff" stroke-width=".8"/>
<circle cx="628.8" cy="231.6" r="1.5" fill="none" stroke="#fff" stroke-width=".8"/>
<rect x="567" y="272.6" width="16.2" height="98.8" fill="#555"/>
<path d="M567.3,274V371M582.9,274V371" stroke="#fff" stroke-width="0.6" fill="none" opacity="0.7"/>
<path d="M566.2,271H584L582.6,274.3H567.6z" stroke="#fff" stroke-width="0.5" fill="#9c9c9c"/>
<rect x="567.6" y="275" width="15" height="5.3" fill="#8e8e8e"/>
<path d="M568.8,275.8v3.7M571.32,275.8v3.7M573.84,275.8v3.7M576.36,275.8v3.7M578.88,275.8v3.7M581.4,275.8v3.7" stroke="#fff" stroke-width="1.05" opacity=".9" stroke-dasharray="1.6 .6"/>
<path d="M567.6,275H582.6M567.6,280.3H582.6" stroke="#fff" stroke-width="0.5" fill="none" opacity="0.9"/>
<rect x="568.3" y="282.4" width="13.8" height="45.2" fill="#8c8c8c" stroke="#fff" stroke-width="0.7" opacity="0.95"/>
<rect x="568.3" y="337.6" width="13.8" height="33" fill="#8c8c8c" stroke="#fff" stroke-width="0.7" opacity="0.95"/>
<rect x="568.9" y="283.1" width="12.6" height="7.2" fill="#fff" rx="2.6" opacity="0.95"/>
<rect x="569.65" y="283.85" width="11.1" height="5.7" fill="#000" rx="2.2"/>
<rect x="569.4" y="292.3" width="11.6" height="23.9" fill="#fff" opacity="0.96"/>
<path d="M569.83,294.37h1.82M569.83,298.35h1.82M569.83,302.34h1.82M569.83,306.32h1.82M569.83,310.3h1.82M569.83,314.29h1.82M572.5,294.37h1.82M572.5,298.35h1.82M572.5,302.34h1.82M572.5,306.32h1.82M572.5,310.3h1.82M572.5,314.29h1.82M576.08,294.37h1.82M576.08,298.35h1.82M576.08,302.34h1.82M576.08,306.32h1.82M576.08,310.3h1.82M576.08,314.29h1.82M578.75,294.37h1.82M578.75,298.35h1.82M578.75,302.34h1.82M578.75,306.32h1.82M578.75,310.3h1.82M578.75,314.29h1.82" stroke="#000" stroke-width="2.71" opacity=".92"/>
<rect x="568.7" y="317.9" width="13" height="9.2" fill="#fff" rx="3.0" opacity="0.95"/>
<rect x="569.45" y="318.65" width="11.5" height="7.7" fill="#000" rx="2.6"/>
<rect x="567" y="328.2" width="16.2" height="7.8" fill="#9a9a9a"/>
<path d="M567,328.6H583.2M567,331.6H583.2M567,334.8H583.2" stroke="#fff" stroke-width="0.7" fill="none" opacity="0.9"/>
<rect x="567" y="336" width="16.2" height="1.4" fill="#333"/>
<rect x="568.9" y="338.1" width="12.6" height="6.2" fill="#fff" rx="2.8" opacity="0.95"/>
<rect x="569.65" y="338.85" width="11.1" height="4.7" fill="#000" rx="2.4"/>
<rect x="569.4" y="346.4" width="11.6" height="23.2" fill="#fff" opacity="0.96"/>
<path d="M569.83,348.41h1.82M569.83,352.28h1.82M569.83,356.14h1.82M569.83,360.01h1.82M569.83,363.88h1.82M569.83,367.74h1.82M572.5,348.41h1.82M572.5,352.28h1.82M572.5,356.14h1.82M572.5,360.01h1.82M572.5,363.88h1.82M572.5,367.74h1.82M576.08,348.41h1.82M576.08,352.28h1.82M576.08,356.14h1.82M576.08,360.01h1.82M576.08,363.88h1.82M576.08,367.74h1.82M578.75,348.41h1.82M578.75,352.28h1.82M578.75,356.14h1.82M578.75,360.01h1.82M578.75,363.88h1.82M578.75,367.74h1.82" stroke="#000" stroke-width="2.63" opacity=".92"/>
<rect x="566" y="371.4" width="18.2" height="3.2" fill="#ededed"/>
<rect x="566.4" y="376.4" width="17.4" height="3.6" fill="#aaa"/>
<path d="M566.4,378.2H583.8" stroke="#000" stroke-width="2.2" stroke-dasharray=".7 .8" opacity=".75"/>
<rect x="650.4" y="272.6" width="16.2" height="98.8" fill="#555"/>
<path d="M650.7,274V371M666.3,274V371" stroke="#fff" stroke-width="0.6" fill="none" opacity="0.7"/>
<path d="M649.6,271H667.4L666,274.3H651z" stroke="#fff" stroke-width="0.5" fill="#9c9c9c"/>
<rect x="651" y="275" width="15" height="5.3" fill="#8e8e8e"/>
<path d="M652.2,275.8v3.7M654.72,275.8v3.7M657.24,275.8v3.7M659.76,275.8v3.7M662.28,275.8v3.7M664.8,275.8v3.7" stroke="#fff" stroke-width="1.05" opacity=".9" stroke-dasharray="1.6 .6"/>
<path d="M651,275H666M651,280.3H666" stroke="#fff" stroke-width="0.5" fill="none" opacity="0.9"/>
<rect x="651.7" y="282.4" width="13.8" height="45.2" fill="#8c8c8c" stroke="#fff" stroke-width="0.7" opacity="0.95"/>
<rect x="651.7" y="337.6" width="13.8" height="33" fill="#8c8c8c" stroke="#fff" stroke-width="0.7" opacity="0.95"/>
<rect x="652.3" y="283.1" width="12.6" height="7.2" fill="#fff" rx="2.6" opacity="0.95"/>
<rect x="653.05" y="283.85" width="11.1" height="5.7" fill="#000" rx="2.2"/>
<rect x="652.8" y="292.3" width="11.6" height="23.9" fill="#fff" opacity="0.96"/>
<path d="M653.23,294.37h1.82M653.23,298.35h1.82M653.23,302.34h1.82M653.23,306.32h1.82M653.23,310.3h1.82M653.23,314.29h1.82M655.9,294.37h1.82M655.9,298.35h1.82M655.9,302.34h1.82M655.9,306.32h1.82M655.9,310.3h1.82M655.9,314.29h1.82M659.48,294.37h1.82M659.48,298.35h1.82M659.48,302.34h1.82M659.48,306.32h1.82M659.48,310.3h1.82M659.48,314.29h1.82M662.15,294.37h1.82M662.15,298.35h1.82M662.15,302.34h1.82M662.15,306.32h1.82M662.15,310.3h1.82M662.15,314.29h1.82" stroke="#000" stroke-width="2.71" opacity=".92"/>
<rect x="652.1" y="317.9" width="13" height="9.2" fill="#fff" rx="3.0" opacity="0.95"/>
<rect x="652.85" y="318.65" width="11.5" height="7.7" fill="#000" rx="2.6"/>
<rect x="650.4" y="328.2" width="16.2" height="7.8" fill="#9a9a9a"/>
<path d="M650.4,328.6H666.6M650.4,331.6H666.6M650.4,334.8H666.6" stroke="#fff" stroke-width="0.7" fill="none" opacity="0.9"/>
<rect x="650.4" y="336" width="16.2" height="1.4" fill="#333"/>
<rect x="652.3" y="338.1" width="12.6" height="6.2" fill="#fff" rx="2.8" opacity="0.95"/>
<rect x="653.05" y="338.85" width="11.1" height="4.7" fill="#000" rx="2.4"/>
<rect x="652.8" y="346.4" width="11.6" height="23.2" fill="#fff" opacity="0.96"/>
<path d="M653.23,348.41h1.82M653.23,352.28h1.82M653.23,356.14h1.82M653.23,360.01h1.82M653.23,363.88h1.82M653.23,367.74h1.82M655.9,348.41h1.82M655.9,352.28h1.82M655.9,356.14h1.82M655.9,360.01h1.82M655.9,363.88h1.82M655.9,367.74h1.82M659.48,348.41h1.82M659.48,352.28h1.82M659.48,356.14h1.82M659.48,360.01h1.82M659.48,363.88h1.82M659.48,367.74h1.82M662.15,348.41h1.82M662.15,352.28h1.82M662.15,356.14h1.82M662.15,360.01h1.82M662.15,363.88h1.82M662.15,367.74h1.82" stroke="#000" stroke-width="2.63" opacity=".92"/>
<rect x="649.4" y="371.4" width="18.2" height="3.2" fill="#ededed"/>
<rect x="649.8" y="376.4" width="17.4" height="3.6" fill="#aaa"/>
<path d="M649.8,378.2H667.2" stroke="#000" stroke-width="2.2" stroke-dasharray=".7 .8" opacity=".75"/>
<path d="M584.5,271H596.3L594.5,274.3H586.3z" stroke="#fff" stroke-width="0.5" fill="#9c9c9c"/>
<rect x="586.5" y="275.4" width="7.8" height="4.2" fill="#000" stroke="#fff" stroke-width="0.7"/>
<path d="M585.1,281H595.7" stroke="#fff" stroke-width="0.7" fill="none"/>
<rect x="585.9" y="281.8" width="9" height="18.6" fill="#9c9c9c"/>
<path d="M591.7,281.8V300.4" stroke="#fff" stroke-width="1" fill="none" opacity="0.95"/>
<path d="M589.2,281.8V300.4" stroke="#fff" stroke-width="0.7" fill="none" opacity="0.6"/>
<path d="M586.1,281.8V300.4M594.7,281.8V300.4" stroke="#fff" stroke-width="0.5" fill="none" opacity="0.6"/>
<rect x="586.1" y="304.4" width="8.8" height="51" fill="#000" stroke="#fff" stroke-width="0.7" opacity="0.85"/>
<circle cx="590.4" cy="323.6" r="2.5" fill="#fff"/>
<path d="M589.3,325.7L590.4,328.1L591.5,325.7z" fill="#ccc"/>
<circle cx="590.4" cy="323.1" r="0.75" fill="#888"/>
<path d="M585.5,357.4H595.3" stroke="#fff" stroke-width="0.6" fill="none" opacity="0.8"/>
<rect x="585.7" y="359.6" width="9.4" height="19" fill="#b4b4b4"/>
<path d="M591.7,359.6V378.6" stroke="#fff" stroke-width="1.1" fill="none"/>
<path d="M589.2,359.6V378.6" stroke="#fff" stroke-width="0.8" fill="none" opacity="0.7"/>
<path d="M586,359.6V378.6M594.8,359.6V378.6" stroke="#fff" stroke-width="0.5" fill="none" opacity="0.7"/>
<rect x="584.7" y="378.6" width="11.4" height="2" fill="#ddd"/>
<path d="M637.8,271H649.6L647.8,274.3H639.6z" stroke="#fff" stroke-width="0.5" fill="#9c9c9c"/>
<rect x="639.8" y="275.4" width="7.8" height="4.2" fill="#000" stroke="#fff" stroke-width="0.7"/>
<path d="M638.4,281H649" stroke="#fff" stroke-width="0.7" fill="none"/>
<rect x="639.2" y="281.8" width="9" height="18.6" fill="#9c9c9c"/>
<path d="M645,281.8V300.4" stroke="#fff" stroke-width="1" fill="none" opacity="0.95"/>
<path d="M642.5,281.8V300.4" stroke="#fff" stroke-width="0.7" fill="none" opacity="0.6"/>
<path d="M639.4,281.8V300.4M648,281.8V300.4" stroke="#fff" stroke-width="0.5" fill="none" opacity="0.6"/>
<rect x="639.4" y="304.4" width="8.8" height="51" fill="#000" stroke="#fff" stroke-width="0.7" opacity="0.85"/>
<circle cx="643.7" cy="323.6" r="2.5" fill="#fff"/>
<path d="M642.6,325.7L643.7,328.1L644.8,325.7z" fill="#ccc"/>
<circle cx="643.7" cy="323.1" r="0.75" fill="#888"/>
<path d="M638.8,357.4H648.6" stroke="#fff" stroke-width="0.6" fill="none" opacity="0.8"/>
<rect x="639" y="359.6" width="9.4" height="19" fill="#b4b4b4"/>
<path d="M645,359.6V378.6" stroke="#fff" stroke-width="1.1" fill="none"/>
<path d="M642.5,359.6V378.6" stroke="#fff" stroke-width="0.8" fill="none" opacity="0.7"/>
<path d="M639.3,359.6V378.6M648.1,359.6V378.6" stroke="#fff" stroke-width="0.5" fill="none" opacity="0.7"/>
<rect x="638" y="378.6" width="11.4" height="2" fill="#ddd"/>
<rect x="598" y="262" width="37.6" height="7.6" fill="#000"/>
<path d="M597,262.6Q616.8,255.6 636.6,262.6" stroke="#fff" stroke-width="1.3" fill="none"/>
<path d="M598.4,261.62L600.5,269.4M601.35,260.94L603.1,269.4M604.3,260.39L605.7,269.4M607.25,259.96L608.3,269.4M610.2,259.65L610.9,269.4M613.15,259.46L613.5,269.4M620.45,259.46L620.1,269.4M623.4,259.65L622.7,269.4M626.35,259.96L625.3,269.4M629.3,260.39L627.9,269.4M632.25,260.94L630.5,269.4M635.2,261.62L633.1,269.4" stroke="#fff" stroke-width="0.8" fill="none" opacity="0.9"/>
<path d="M598.5,269.8H635.1" stroke="#fff" stroke-width="0.7" fill="none"/>
<circle cx="616.8" cy="265.4" r="2.8" fill="#fff"/>
<path d="M615.7,267.8L616.8,270.2L617.9,267.8z" fill="#ccc"/>
<circle cx="616.8" cy="264.9" r="0.84" fill="#888"/>
<path d="M597,262.6L598.6,269.8M636.6,262.6L635,269.8" stroke="#fff" stroke-width="0.9" fill="none"/>
<rect x="596.9" y="272.6" width="39.8" height="102.4" fill="#555"/>
<path d="M596.1,271H637.5L636.1,274.3H597.5z" stroke="#fff" stroke-width="0.5" fill="#9c9c9c"/>
<rect x="597.7" y="275" width="38.2" height="5.3" fill="#8e8e8e"/>
<path d="M598.9,275.8v3.7M601.46,275.8v3.7M604.01,275.8v3.7M606.57,275.8v3.7M609.13,275.8v3.7M611.69,275.8v3.7M614.24,275.8v3.7M616.8,275.8v3.7M619.36,275.8v3.7M621.91,275.8v3.7M624.47,275.8v3.7M627.03,275.8v3.7M629.59,275.8v3.7M632.14,275.8v3.7M634.7,275.8v3.7" stroke="#fff" stroke-width="1.05" opacity=".9" stroke-dasharray="1.6 .6"/>
<path d="M597.7,275H635.9M597.7,280.3H635.9" stroke="#fff" stroke-width="0.5" fill="none" opacity="0.9"/>
<path d="M597.2,274V371M636.4,274V371" stroke="#fff" stroke-width="0.6" fill="none" opacity="0.7"/>
<rect x="598.4" y="282.4" width="8.7" height="45.2" fill="#8c8c8c" stroke="#fff" stroke-width="0.7" opacity="0.95"/>
<rect x="598.4" y="337.6" width="8.7" height="33" fill="#8c8c8c" stroke="#fff" stroke-width="0.7" opacity="0.95"/>
<rect x="598.9" y="283.3" width="7.7" height="7" fill="#fff" rx="2.6" opacity="0.95"/>
<rect x="599.65" y="284.05" width="6.2" height="5.5" fill="#000" rx="2.2"/>
<rect x="599.6" y="292.4" width="6.3" height="23.8" fill="#fff" opacity="0.96"/>
<path d="M600.1,294.46h2.14M600.1,298.43h2.14M600.1,302.4h2.14M600.1,306.36h2.14M600.1,310.33h2.14M600.1,314.3h2.14M603.25,294.46h2.14M603.25,298.43h2.14M603.25,302.4h2.14M603.25,306.36h2.14M603.25,310.33h2.14M603.25,314.3h2.14" stroke="#000" stroke-width="2.7" opacity=".92"/>
<rect x="598.7" y="317.9" width="8.1" height="9.2" fill="#fff" rx="2.8" opacity="0.95"/>
<rect x="599.45" y="318.65" width="6.6" height="7.7" fill="#000" rx="2.4"/>
<rect x="598.9" y="338.1" width="7.7" height="6.2" fill="#fff" rx="2.6" opacity="0.95"/>
<rect x="599.65" y="338.85" width="6.2" height="4.7" fill="#000" rx="2.2"/>
<rect x="599.6" y="346.4" width="6.3" height="23.2" fill="#fff" opacity="0.96"/>
<path d="M600.1,348.41h2.14M600.1,352.28h2.14M600.1,356.14h2.14M600.1,360.01h2.14M600.1,363.88h2.14M600.1,367.74h2.14M603.25,348.41h2.14M603.25,352.28h2.14M603.25,356.14h2.14M603.25,360.01h2.14M603.25,363.88h2.14M603.25,367.74h2.14" stroke="#000" stroke-width="2.63" opacity=".92"/>
<rect x="609.9" y="282.4" width="14.3" height="45.2" fill="#8c8c8c" stroke="#fff" stroke-width="0.7" opacity="0.95"/>
<rect x="609.9" y="337.6" width="14.3" height="33" fill="#8c8c8c" stroke="#fff" stroke-width="0.7" opacity="0.95"/>
<rect x="610.4" y="283.3" width="13.3" height="7" fill="#fff" rx="2.6" opacity="0.95"/>
<rect x="611.15" y="284.05" width="11.8" height="5.5" fill="#000" rx="2.2"/>
<rect x="611.1" y="292.4" width="11.9" height="23.8" fill="#fff" opacity="0.96"/>
<path d="M611.54,294.46h1.87M611.54,298.43h1.87M611.54,302.4h1.87M611.54,306.36h1.87M611.54,310.33h1.87M611.54,314.3h1.87M614.29,294.46h1.87M614.29,298.43h1.87M614.29,302.4h1.87M614.29,306.36h1.87M614.29,310.33h1.87M614.29,314.3h1.87M617.94,294.46h1.87M617.94,298.43h1.87M617.94,302.4h1.87M617.94,306.36h1.87M617.94,310.33h1.87M617.94,314.3h1.87M620.69,294.46h1.87M620.69,298.43h1.87M620.69,302.4h1.87M620.69,306.36h1.87M620.69,310.33h1.87M620.69,314.3h1.87" stroke="#000" stroke-width="2.7" opacity=".92"/>
<rect x="610.2" y="317.9" width="13.7" height="9.2" fill="#fff" rx="2.8" opacity="0.95"/>
<rect x="610.95" y="318.65" width="12.2" height="7.7" fill="#000" rx="2.4"/>
<rect x="610.4" y="338.1" width="13.3" height="6.2" fill="#fff" rx="2.6" opacity="0.95"/>
<rect x="611.15" y="338.85" width="11.8" height="4.7" fill="#000" rx="2.2"/>
<rect x="611.1" y="346.4" width="11.9" height="23.2" fill="#fff" opacity="0.96"/>
<path d="M611.54,348.41h1.87M611.54,352.28h1.87M611.54,356.14h1.87M611.54,360.01h1.87M611.54,363.88h1.87M611.54,367.74h1.87M614.29,348.41h1.87M614.29,352.28h1.87M614.29,356.14h1.87M614.29,360.01h1.87M614.29,363.88h1.87M614.29,367.74h1.87M617.94,348.41h1.87M617.94,352.28h1.87M617.94,356.14h1.87M617.94,360.01h1.87M617.94,363.88h1.87M617.94,367.74h1.87M620.69,348.41h1.87M620.69,352.28h1.87M620.69,356.14h1.87M620.69,360.01h1.87M620.69,363.88h1.87M620.69,367.74h1.87" stroke="#000" stroke-width="2.63" opacity=".92"/>
<rect x="627" y="282.4" width="8.9" height="45.2" fill="#8c8c8c" stroke="#fff" stroke-width="0.7" opacity="0.95"/>
<rect x="627" y="337.6" width="8.9" height="33" fill="#8c8c8c" stroke="#fff" stroke-width="0.7" opacity="0.95"/>
<rect x="627.5" y="283.3" width="7.9" height="7" fill="#fff" rx="2.6" opacity="0.95"/>
<rect x="628.25" y="284.05" width="6.4" height="5.5" fill="#000" rx="2.2"/>
<rect x="628.2" y="292.4" width="6.5" height="23.8" fill="#fff" opacity="0.96"/>
<path d="M628.72,294.46h2.21M628.72,298.43h2.21M628.72,302.4h2.21M628.72,306.36h2.21M628.72,310.33h2.21M628.72,314.3h2.21M631.97,294.46h2.21M631.97,298.43h2.21M631.97,302.4h2.21M631.97,306.36h2.21M631.97,310.33h2.21M631.97,314.3h2.21" stroke="#000" stroke-width="2.7" opacity=".92"/>
<rect x="627.3" y="317.9" width="8.3" height="9.2" fill="#fff" rx="2.8" opacity="0.95"/>
<rect x="628.05" y="318.65" width="6.8" height="7.7" fill="#000" rx="2.4"/>
<rect x="627.5" y="338.1" width="7.9" height="6.2" fill="#fff" rx="2.6" opacity="0.95"/>
<rect x="628.25" y="338.85" width="6.4" height="4.7" fill="#000" rx="2.2"/>
<rect x="628.2" y="346.4" width="6.5" height="23.2" fill="#fff" opacity="0.96"/>
<path d="M628.72,348.41h2.21M628.72,352.28h2.21M628.72,356.14h2.21M628.72,360.01h2.21M628.72,363.88h2.21M628.72,367.74h2.21M631.97,348.41h2.21M631.97,352.28h2.21M631.97,356.14h2.21M631.97,360.01h2.21M631.97,363.88h2.21M631.97,367.74h2.21" stroke="#000" stroke-width="2.63" opacity=".92"/>
<rect x="596.9" y="328.2" width="39.8" height="8.4" fill="#666"/>
<path d="M596.9,328.6H636.7M596.9,331.6H636.7M596.9,334.6H636.7" stroke="#fff" stroke-width="0.6" fill="none" opacity="0.8"/>
<path d="M615.8,328.4V336.4M617.8,328.4V336.4" stroke="#fff" stroke-width="0.7" fill="none"/>
<path d="M613.8,331.5h6M616.8,328v3" stroke="#fff" stroke-width="0.7" fill="none"/>
<rect x="595.7" y="371.4" width="42.2" height="3.4" fill="#ededed"/>
<rect x="596.9" y="376.6" width="39.8" height="3.4" fill="#bbb"/>
<path d="M596.9,378.3H636.7" stroke="#000" stroke-width="2.2" stroke-dasharray=".7 .8" opacity=".75"/>
<rect x="615.8" y="376.4" width="2" height="3.8" fill="#fff"/>
<circle cx="589.8" cy="248.2" r="2.5" fill="#fff"/>
<path d="M588.7,250.3L589.8,252.7L590.9,250.3z" fill="#ccc"/>
<circle cx="589.8" cy="247.7" r="0.75" fill="#888"/>
<circle cx="643.2" cy="248.2" r="2.5" fill="#fff"/>
<path d="M642.1,250.3L643.2,252.7L644.3,250.3z" fill="#ccc"/>
<circle cx="643.2" cy="247.7" r="0.75" fill="#888"/>
<rect x="25.5" y="272.6" width="15" height="98.8" fill="#555"/>
<path d="M25.8,274V371M40.2,274V371" stroke="#fff" stroke-width="0.6" fill="none" opacity="0.7"/>
<path d="M24.7,271H41.3L39.9,274.3H26.1z" stroke="#fff" stroke-width="0.5" fill="#9c9c9c"/>
<rect x="26.1" y="275" width="13.8" height="5.3" fill="#8e8e8e"/>
<path d="M27.3,275.8v3.7M29.58,275.8v3.7M31.86,275.8v3.7M34.14,275.8v3.7M36.42,275.8v3.7M38.7,275.8v3.7" stroke="#fff" stroke-width="1.05" opacity=".9" stroke-dasharray="1.6 .6"/>
<path d="M26.1,275H39.9M26.1,280.3H39.9" stroke="#fff" stroke-width="0.5" fill="none" opacity="0.9"/>
<rect x="26.8" y="282.4" width="12.6" height="45.2" fill="#8c8c8c" stroke="#fff" stroke-width="0.7" opacity="0.95"/>
<rect x="26.8" y="337.6" width="12.6" height="33" fill="#8c8c8c" stroke="#fff" stroke-width="0.7" opacity="0.95"/>
<rect x="27.4" y="283.1" width="11.4" height="7.2" fill="#fff" rx="2.6" opacity="0.95"/>
<rect x="28.15" y="283.85" width="9.9" height="5.7" fill="#000" rx="2.2"/>
<rect x="27.9" y="292.3" width="10.4" height="23.9" fill="#fff" opacity="0.96"/>
<path d="M28.28,294.37h1.61M28.28,298.35h1.61M28.28,302.34h1.61M28.28,306.32h1.61M28.28,310.3h1.61M28.28,314.29h1.61M30.65,294.37h1.61M30.65,298.35h1.61M30.65,302.34h1.61M30.65,306.32h1.61M30.65,310.3h1.61M30.65,314.29h1.61M33.93,294.37h1.61M33.93,298.35h1.61M33.93,302.34h1.61M33.93,306.32h1.61M33.93,310.3h1.61M33.93,314.29h1.61M36.3,294.37h1.61M36.3,298.35h1.61M36.3,302.34h1.61M36.3,306.32h1.61M36.3,310.3h1.61M36.3,314.29h1.61" stroke="#000" stroke-width="2.71" opacity=".92"/>
<rect x="27.2" y="317.9" width="11.8" height="9.2" fill="#fff" rx="3.0" opacity="0.95"/>
<rect x="27.95" y="318.65" width="10.3" height="7.7" fill="#000" rx="2.6"/>
<rect x="25.5" y="328.2" width="15" height="7.8" fill="#9a9a9a"/>
<path d="M25.5,328.6H40.5M25.5,331.6H40.5M25.5,334.8H40.5" stroke="#fff" stroke-width="0.7" fill="none" opacity="0.9"/>
<rect x="25.5" y="336" width="15" height="1.4" fill="#333"/>
<rect x="27.4" y="338.1" width="11.4" height="6.2" fill="#fff" rx="2.8" opacity="0.95"/>
<rect x="28.15" y="338.85" width="9.9" height="4.7" fill="#000" rx="2.4"/>
<rect x="27.9" y="346.4" width="10.4" height="23.2" fill="#fff" opacity="0.96"/>
<path d="M28.28,348.41h1.61M28.28,352.28h1.61M28.28,356.14h1.61M28.28,360.01h1.61M28.28,363.88h1.61M28.28,367.74h1.61M30.65,348.41h1.61M30.65,352.28h1.61M30.65,356.14h1.61M30.65,360.01h1.61M30.65,363.88h1.61M30.65,367.74h1.61M33.93,348.41h1.61M33.93,352.28h1.61M33.93,356.14h1.61M33.93,360.01h1.61M33.93,363.88h1.61M33.93,367.74h1.61M36.3,348.41h1.61M36.3,352.28h1.61M36.3,356.14h1.61M36.3,360.01h1.61M36.3,363.88h1.61M36.3,367.74h1.61" stroke="#000" stroke-width="2.63" opacity=".92"/>
<rect x="24.5" y="371.4" width="17" height="3.2" fill="#ededed"/>
<rect x="24.9" y="376.4" width="16.2" height="3.6" fill="#aaa"/>
<path d="M24.9,378.2H41.1" stroke="#000" stroke-width="2.2" stroke-dasharray=".7 .8" opacity=".75"/>
<rect x="742.7" y="272.6" width="15" height="98.8" fill="#555"/>
<path d="M743,274V371M757.4,274V371" stroke="#fff" stroke-width="0.6" fill="none" opacity="0.7"/>
<path d="M741.9,271H758.5L757.1,274.3H743.3z" stroke="#fff" stroke-width="0.5" fill="#9c9c9c"/>
<rect x="743.3" y="275" width="13.8" height="5.3" fill="#8e8e8e"/>
<path d="M744.5,275.8v3.7M746.78,275.8v3.7M749.06,275.8v3.7M751.34,275.8v3.7M753.62,275.8v3.7M755.9,275.8v3.7" stroke="#fff" stroke-width="1.05" opacity=".9" stroke-dasharray="1.6 .6"/>
<path d="M743.3,275H757.1M743.3,280.3H757.1" stroke="#fff" stroke-width="0.5" fill="none" opacity="0.9"/>
<rect x="744" y="282.4" width="12.6" height="45.2" fill="#8c8c8c" stroke="#fff" stroke-width="0.7" opacity="0.95"/>
<rect x="744" y="337.6" width="12.6" height="33" fill="#8c8c8c" stroke="#fff" stroke-width="0.7" opacity="0.95"/>
<rect x="744.6" y="283.1" width="11.4" height="7.2" fill="#fff" rx="2.6" opacity="0.95"/>
<rect x="745.35" y="283.85" width="9.9" height="5.7" fill="#000" rx="2.2"/>
<rect x="745.1" y="292.3" width="10.4" height="23.9" fill="#fff" opacity="0.96"/>
<path d="M745.48,294.37h1.61M745.48,298.35h1.61M745.48,302.34h1.61M745.48,306.32h1.61M745.48,310.3h1.61M745.48,314.29h1.61M747.86,294.37h1.61M747.86,298.35h1.61M747.86,302.34h1.61M747.86,306.32h1.61M747.86,310.3h1.61M747.86,314.29h1.61M751.13,294.37h1.61M751.13,298.35h1.61M751.13,302.34h1.61M751.13,306.32h1.61M751.13,310.3h1.61M751.13,314.29h1.61M753.5,294.37h1.61M753.5,298.35h1.61M753.5,302.34h1.61M753.5,306.32h1.61M753.5,310.3h1.61M753.5,314.29h1.61" stroke="#000" stroke-width="2.71" opacity=".92"/>
<rect x="744.4" y="317.9" width="11.8" height="9.2" fill="#fff" rx="3.0" opacity="0.95"/>
<rect x="745.15" y="318.65" width="10.3" height="7.7" fill="#000" rx="2.6"/>
<rect x="742.7" y="328.2" width="15" height="7.8" fill="#9a9a9a"/>
<path d="M742.7,328.6H757.7M742.7,331.6H757.7M742.7,334.8H757.7" stroke="#fff" stroke-width="0.7" fill="none" opacity="0.9"/>
<rect x="742.7" y="336" width="15" height="1.4" fill="#333"/>
<rect x="744.6" y="338.1" width="11.4" height="6.2" fill="#fff" rx="2.8" opacity="0.95"/>
<rect x="745.35" y="338.85" width="9.9" height="4.7" fill="#000" rx="2.4"/>
<rect x="745.1" y="346.4" width="10.4" height="23.2" fill="#fff" opacity="0.96"/>
<path d="M745.48,348.41h1.61M745.48,352.28h1.61M745.48,356.14h1.61M745.48,360.01h1.61M745.48,363.88h1.61M745.48,367.74h1.61M747.86,348.41h1.61M747.86,352.28h1.61M747.86,356.14h1.61M747.86,360.01h1.61M747.86,363.88h1.61M747.86,367.74h1.61M751.13,348.41h1.61M751.13,352.28h1.61M751.13,356.14h1.61M751.13,360.01h1.61M751.13,363.88h1.61M751.13,367.74h1.61M753.5,348.41h1.61M753.5,352.28h1.61M753.5,356.14h1.61M753.5,360.01h1.61M753.5,363.88h1.61M753.5,367.74h1.61" stroke="#000" stroke-width="2.63" opacity=".92"/>
<rect x="741.7" y="371.4" width="17" height="3.2" fill="#ededed"/>
<rect x="742.1" y="376.4" width="16.2" height="3.6" fill="#aaa"/>
<path d="M742.1,378.2H758.3" stroke="#000" stroke-width="2.2" stroke-dasharray=".7 .8" opacity=".75"/>
<rect x="219.9" y="216.8" width="119" height="15.2" fill="#000"/>
<path d="M230,130L230,155" stroke="#fff" stroke-width="0.9"/>
<rect x="229.1" y="155" width="1.8" height="7" fill="none" stroke="#fff" stroke-width="0.6"/>
<path d="M228.6,157.4H231.4M228.6,159.6H231.4" stroke="#fff" stroke-width="0.5" fill="none" opacity="0.8"/>
<path d="M225.2,164.4Q230,161.4 234.8,164.4Q230,167.2 225.2,164.4z" stroke="#fff" stroke-width="0.8" fill="none"/>
<path d="M227.4,166.4L230,171.6L232.6,166.4" stroke="#fff" stroke-width="0.7" fill="none"/>
<path d="M227,177.3l-1.6,-1.2l.8,-1.4l-.9,-1.4l1.5,-1.4h6.4l1.5,1.4l-.9,1.4l.8,1.4l-1.6,1.2" stroke="#fff" stroke-width="0.8" fill="none"/>
<circle cx="230" cy="174.6" r="1.7" fill="none" stroke="#fff" stroke-width=".7"/>
<path d="M223.4,190.3l-.9,-2l-1,-.6l.8,-2.6l-.8,-2.4l1,-.8l.3,-2.2l1.6,-1h11.2l1.6,1l.3,2.2l1,.8l-.8,2.4l.8,2.6l-1,.6l-.9,2z" stroke="#fff" stroke-width="0.85" fill="none"/>
<circle cx="230" cy="184.9" r="4.4" fill="none" stroke="#fff" stroke-width="1"/>
<path d="M227.4,187l2.6,-4.4l2.6,4.4M228,185.6h4" stroke="#fff" stroke-width="0.6" fill="none" opacity="0.85"/>
<path d="M225,179H235" stroke="#fff" stroke-width="0.5" fill="none" opacity="0.7"/>
<rect x="223" y="190.3" width="14" height="1.8" fill="none" stroke="#fff" stroke-width="0.7"/>
<rect x="220.8" y="192.1" width="18.4" height="2.5" fill="none" stroke="#fff" stroke-width="0.7"/>
<path d="M215.2,195.6q1,-1.2 3,-1h23.6q2,-.2 3,1l-.6,1.4l-2,1.4h-24.4l-2,-1.4z" stroke="#fff" stroke-width="0.85" fill="none"/>
<path d="M217.4,196.4H242.6" stroke="#fff" stroke-width="0.5" fill="none" opacity="0.8"/>
<path d="M215.4,196.4l-.2,2.4l1.6,.4M244.6,196.4l.2,2.4l-1.6,.4" stroke="#fff" stroke-width="0.7" fill="none"/>
<path d="M219.4,199.6H240.6M219.4,201H240.6" stroke="#fff" stroke-width="0.6" fill="none" opacity="0.9"/>
<path d="M220.4,201V226M222.4,201V226M237.6,201V226M239.6,201V226" stroke="#fff" stroke-width="0.6" fill="none" opacity="0.9"/>
<path d="M224,201V222M236,201V222" stroke="#fff" stroke-width="0.5" fill="none" opacity="0.7"/>
<path d="M219.6,205H224.4M219.6,209.4H224.4M219.6,211H224.4M219.6,221.2H224.4" stroke="#fff" stroke-width="0.6" fill="none" opacity="0.9"/>
<path d="M235.6,205H240.4M235.6,209.4H240.4M235.6,211H240.4M235.6,221.2H240.4" stroke="#fff" stroke-width="0.6" fill="none" opacity="0.9"/>
<rect x="225.4" y="202.8" width="9.2" height="17.8" fill="#000" stroke="#fff" stroke-width="0.9"/>
<rect x="226.6" y="204" width="6.8" height="15.6" fill="none" stroke="#fff" stroke-width="0.4" opacity="0.6"/>
<rect x="226.1" y="223.6" width="7.8" height="7.8" fill="#000" stroke="#fff" stroke-width="0.9"/>
<path d="M328.8,130L328.8,155" stroke="#fff" stroke-width="0.9"/>
<rect x="327.9" y="155" width="1.8" height="7" fill="none" stroke="#fff" stroke-width="0.6"/>
<path d="M327.4,157.4H330.2M327.4,159.6H330.2" stroke="#fff" stroke-width="0.5" fill="none" opacity="0.8"/>
<path d="M324,164.4Q328.8,161.4 333.6,164.4Q328.8,167.2 324,164.4z" stroke="#fff" stroke-width="0.8" fill="none"/>
<path d="M326.2,166.4L328.8,171.6L331.4,166.4" stroke="#fff" stroke-width="0.7" fill="none"/>
<path d="M325.8,177.3l-1.6,-1.2l.8,-1.4l-.9,-1.4l1.5,-1.4h6.4l1.5,1.4l-.9,1.4l.8,1.4l-1.6,1.2" stroke="#fff" stroke-width="0.8" fill="none"/>
<circle cx="328.8" cy="174.6" r="1.7" fill="none" stroke="#fff" stroke-width=".7"/>
<path d="M322.2,190.3l-.9,-2l-1,-.6l.8,-2.6l-.8,-2.4l1,-.8l.3,-2.2l1.6,-1h11.2l1.6,1l.3,2.2l1,.8l-.8,2.4l.8,2.6l-1,.6l-.9,2z" stroke="#fff" stroke-width="0.85" fill="none"/>
<circle cx="328.8" cy="184.9" r="4.4" fill="none" stroke="#fff" stroke-width="1"/>
<path d="M326.2,187l2.6,-4.4l2.6,4.4M326.8,185.6h4" stroke="#fff" stroke-width="0.6" fill="none" opacity="0.85"/>
<path d="M323.8,179H333.8" stroke="#fff" stroke-width="0.5" fill="none" opacity="0.7"/>
<rect x="321.8" y="190.3" width="14" height="1.8" fill="none" stroke="#fff" stroke-width="0.7"/>
<rect x="319.6" y="192.1" width="18.4" height="2.5" fill="none" stroke="#fff" stroke-width="0.7"/>
<path d="M314,195.6q1,-1.2 3,-1h23.6q2,-.2 3,1l-.6,1.4l-2,1.4h-24.4l-2,-1.4z" stroke="#fff" stroke-width="0.85" fill="none"/>
<path d="M316.2,196.4H341.4" stroke="#fff" stroke-width="0.5" fill="none" opacity="0.8"/>
<path d="M314.2,196.4l-.2,2.4l1.6,.4M343.4,196.4l.2,2.4l-1.6,.4" stroke="#fff" stroke-width="0.7" fill="none"/>
<path d="M318.2,199.6H339.4M318.2,201H339.4" stroke="#fff" stroke-width="0.6" fill="none" opacity="0.9"/>
<path d="M319.2,201V226M321.2,201V226M336.4,201V226M338.4,201V226" stroke="#fff" stroke-width="0.6" fill="none" opacity="0.9"/>
<path d="M322.8,201V222M334.8,201V222" stroke="#fff" stroke-width="0.5" fill="none" opacity="0.7"/>
<path d="M318.4,205H323.2M318.4,209.4H323.2M318.4,211H323.2M318.4,221.2H323.2" stroke="#fff" stroke-width="0.6" fill="none" opacity="0.9"/>
<path d="M334.4,205H339.2M334.4,209.4H339.2M334.4,211H339.2M334.4,221.2H339.2" stroke="#fff" stroke-width="0.6" fill="none" opacity="0.9"/>
<rect x="324.2" y="202.8" width="9.2" height="17.8" fill="#000" stroke="#fff" stroke-width="0.9"/>
<rect x="325.4" y="204" width="6.8" height="15.6" fill="none" stroke="#fff" stroke-width="0.4" opacity="0.6"/>
<rect x="324.9" y="223.6" width="7.8" height="7.8" fill="#000" stroke="#fff" stroke-width="0.9"/>
<rect x="254.2" y="180.3" width="3.6" height="3.9" fill="none" stroke="#fff" stroke-width="0.9"/>
<path d="M256,184.2l-1.4,2.6" stroke="#fff" stroke-width="0.9" fill="none"/>
<path d="M254.2,186.8c-7,.4 -10,5 -7.6,10.4c2.6,3.6 7,1 7.6,-3.4c4,2.4 5.4,6 3,9.6c-6,2.6 -10,4.6 -8.6,9.4c-3.6,5 -3.6,12 -1,15.6c3,3 11,3 12.4,-1c2.4,-6 0.6,-14.6 -2.4,-18.8" stroke="#fff" stroke-width="1.2" fill="none"/>
<path d="M254.6,187c4,1 5.6,4 5,7.6M248.6,190.4c3,3.6 6,3 7,-.6M247.2,203.6c4,3.4 8.6,2.4 10,-1M249.6,209l0.6,12.6M254.2,208.6l1,13.6M257.6,209l0.4,12M246.6,222q7,4.8 14.6,0" stroke="#fff" stroke-width="0.9" fill="none" opacity="0.95"/>
<path d="M247.2,192q3.6,5 1,9.6M257.6,196q-5,2 -3.6,7M250.6,200q4,2.4 6.4,0M251.6,214q2.6,4 5.6,0M248,216.6q-1,4 1.4,7M260.2,214q1.6,4 -0.4,8M246,207q-1.6,5 0.6,9" stroke="#fff" stroke-width="0.7" fill="none" opacity="0.85"/>
<circle cx="252.6" cy="193.6" r="2.3" fill="none" stroke="#fff" stroke-width=".8" opacity=".95"/>
<circle cx="257.2" cy="191" r="1.5" fill="none" stroke="#fff" stroke-width=".6" opacity=".8"/>
<ellipse cx="254.2" cy="212" rx="4" ry="5.6" fill="none" stroke="#fff" stroke-width=".7" opacity=".85"/>
<rect x="301" y="180.3" width="3.6" height="3.9" fill="none" stroke="#fff" stroke-width="0.9"/>
<path d="M302.8,184.2l1.4,2.6" stroke="#fff" stroke-width="0.9" fill="none"/>
<path d="M304.6,186.8c7,.4 10,5 7.6,10.4c-2.6,3.6 -7,1 -7.6,-3.4c-4,2.4 -5.4,6 -3,9.6c6,2.6 10,4.6 8.6,9.4c3.6,5 3.6,12 1,15.6c-3,3 -11,3 -12.4,-1c-2.4,-6 -0.6,-14.6 2.4,-18.8" stroke="#fff" stroke-width="1.2" fill="none"/>
<path d="M304.2,187c-4,1 -5.6,4 -5,7.6M310.2,190.4c-3,3.6 -6,3 -7,-.6M311.6,203.6c-4,3.4 -8.6,2.4 -10,-1M309.2,209l-0.6,12.6M304.6,208.6l-1,13.6M301.2,209l-0.4,12M312.2,222q-7,4.8 -14.6,0" stroke="#fff" stroke-width="0.9" fill="none" opacity="0.95"/>
<path d="M311.6,192q-3.6,5 -1,9.6M301.2,196q5,2 3.6,7M308.2,200q-4,2.4 -6.4,0M307.2,214q-2.6,4 -5.6,0M310.8,216.6q1,4 -1.4,7M298.6,214q-1.6,4 0.4,8M312.8,207q1.6,5 -0.6,9" stroke="#fff" stroke-width="0.7" fill="none" opacity="0.85"/>
<circle cx="306.2" cy="193.6" r="2.3" fill="none" stroke="#fff" stroke-width=".8" opacity=".95"/>
<circle cx="301.6" cy="191" r="1.5" fill="none" stroke="#fff" stroke-width=".6" opacity=".8"/>
<ellipse cx="304.6" cy="212" rx="4" ry="5.6" fill="none" stroke="#fff" stroke-width=".7" opacity=".85"/>
<path d="M260.4,192.4A19,16.7 0 0 1 298.4,192.4" stroke="#fff" stroke-width="1.05" fill="none"/>
<path d="M260.4,192c-1.4,-2 -3,-3 -5,-3.4M298.4,192c1.4,-2 3,-3 5,-3.4" stroke="#fff" stroke-width="0.7" fill="none"/>
<ellipse cx="279.4" cy="185.6" rx="5.4" ry="6.5" fill="none" stroke="#fff" stroke-width="1.1"/>
<path d="M260.4,192.2H298.4M260.4,193.8H298.4M260.4,196.8H298.4" stroke="#fff" stroke-width="0.7" fill="none"/>
<path d="M262.4,198.6H296.4" stroke="#fff" stroke-width="0.6" fill="none" opacity="0.8"/>
<path d="M265.4,201.6H293.4" stroke="#fff" stroke-width="1.5" stroke-dasharray="7 1.6 1.4 1.6" opacity=".9"/>
<path d="M261.4,200H297.4M261.4,203.4H297.4" stroke="#fff" stroke-width="0.5" fill="none" opacity="0.8"/>
<rect x="261.1" y="205.4" width="36.6" height="14.4" fill="#000" stroke="#fff" stroke-width="0.9"/>
<path d="M260.4,220.8H298.4" stroke="#fff" stroke-width="0.7" fill="none"/>
<path d="M261.8,222.4H297" stroke="#fff" stroke-width="0.5" fill="none" opacity="0.8"/>
<circle cx="264" cy="201.8" r=".8" fill="#fff"/>
<circle cx="263.8" cy="217.6" r=".8" fill="#fff"/>
<circle cx="294.8" cy="201.8" r=".8" fill="#fff"/>
<circle cx="295" cy="217.6" r=".8" fill="#fff"/>
<text x="279.4" y="216.5" font-family="Liberation Sans, sans-serif" font-weight="bold" font-size="9.3" fill="#fff" text-anchor="middle" textLength="24" lengthAdjust="spacingAndGlyphs">BANK</text>
<path d="M236.4,205H248.4M236.4,209.4H248.4" stroke="#fff" stroke-width="0.6" fill="none" opacity="0.85"/>
<path d="M310.4,205H322.4M310.4,209.4H322.4" stroke="#fff" stroke-width="0.6" fill="none" opacity="0.85"/>
<rect x="233.8" y="224.6" width="90.8" height="28" fill="#000"/>
<path d="M233.8,225.2H324.6" stroke="#fff" stroke-width="0.8" fill="none"/>
<path d="M233.8,238.8H324.6" stroke="#fff" stroke-width="1.1" fill="none"/>
<path d="M233.8,237.2H324.6" stroke="#fff" stroke-width="0.5" fill="none" opacity="0.7"/>
<path d="M233.8,225.2V238.8M324.6,225.2V238.8" stroke="#fff" stroke-width="0.8" fill="none"/>
<path d="M257.4,231.4q2.6,-.4 4,1.6q5.4,3.4 10.6,.4q7.4,4 14.8,0q5.2,3 10.6,-.4q1.4,-2 4,-1.6" stroke="#fff" stroke-width="0.8" fill="none"/>
<circle cx="264.5" cy="230" r="1.5" fill="none" stroke="#fff" stroke-width=".7"/>
<circle cx="279.4" cy="230" r="1.5" fill="none" stroke="#fff" stroke-width=".7"/>
<circle cx="294.3" cy="230" r="1.5" fill="none" stroke="#fff" stroke-width=".7"/>
<path d="M241,239.6H317.6M241,246.6H317.6M241,252.4H317.6" stroke="#fff" stroke-width="0.7" fill="none"/>
<path d="M241,240.8H317.6" stroke="#fff" stroke-width="0.5" fill="none" opacity="0.6"/>
<path d="M234,238.8Q240.4,240.4 241,246.6" stroke="#fff" stroke-width="0.8" fill="none"/>
<path d="M237.4,246.6L241,252.4" stroke="#fff" stroke-width="0.7" fill="none"/>
<circle cx="229.6" cy="247.6" r="2.5" fill="#fff"/>
<path d="M228.5,249.7L229.6,252.1L230.7,249.7z" fill="#ccc"/>
<circle cx="229.6" cy="247.1" r="0.75" fill="#888"/>
<path d="M324.8,238.8Q318.4,240.4 317.8,246.6" stroke="#fff" stroke-width="0.8" fill="none"/>
<path d="M321.4,246.6L317.8,252.4" stroke="#fff" stroke-width="0.7" fill="none"/>
<circle cx="329.2" cy="247.6" r="2.5" fill="#fff"/>
<path d="M328.1,249.7L329.2,252.1L330.3,249.7z" fill="#ccc"/>
<circle cx="329.2" cy="247.1" r="0.75" fill="#888"/>
<path d="M219.4,217.8H233.8M219.4,225.4H233.8M219.4,227.6H233.8" stroke="#fff" stroke-width="0.8" fill="none" opacity="0.95"/>
<path d="M324.6,217.8H339.4M324.6,225.4H339.4M324.6,227.6H339.4" stroke="#fff" stroke-width="0.8" fill="none" opacity="0.95"/>
<rect x="219.5" y="259.6" width="21" height="26.8" fill="#000"/>
<rect x="222.8" y="260" width="14.4" height="5.8" fill="#000" stroke="#fff" stroke-width="0.7" rx="1.5" opacity="0.6"/>
<rect x="222.8" y="266.6" width="14.4" height="4.4" fill="#000" stroke="#fff" stroke-width="0.7" opacity="0.65"/>
<path d="M221.5,272.6H238.5M221.5,274H238.5" stroke="#fff" stroke-width="0.6" fill="none" opacity="0.85"/>
<path d="M219.9,275.2H240.1L238.9,278.2H221.1z" stroke="#fff" stroke-width="0.8" fill="none"/>
<path d="M220.5,276.6H239.5" stroke="#fff" stroke-width="0.5" fill="none" opacity="0.7"/>
<rect x="220.9" y="280.2" width="18.2" height="5.8" fill="#000" stroke="#fff" stroke-width="0.8"/>
<path d="M220.9,282.2H239.1M220.9,284H239.1" stroke="#fff" stroke-width="0.5" fill="none" opacity="0.6"/>
<rect x="221.1" y="286.4" width="17.8" height="93.6" fill="#2c2c2c" opacity="0.9"/>
<path d="M221.3,286.4V380M223.9,286.4V380M236.1,286.4V380M238.7,286.4V380" stroke="#fff" stroke-width="0.55" fill="none" opacity="0.75"/>
<path d="M221.3,287h2.6M236.1,287h2.6M221.3,290.07h2.6M236.1,290.07h2.6M221.3,293.13h2.6M236.1,293.13h2.6M221.3,296.2h2.6M236.1,296.2h2.6M221.3,299.27h2.6M236.1,299.27h2.6M221.3,302.33h2.6M236.1,302.33h2.6M221.3,305.4h2.6M236.1,305.4h2.6M221.3,308.47h2.6M236.1,308.47h2.6M221.3,311.53h2.6M236.1,311.53h2.6M221.3,314.6h2.6M236.1,314.6h2.6M221.3,317.67h2.6M236.1,317.67h2.6M221.3,320.73h2.6M236.1,320.73h2.6M221.3,323.8h2.6M236.1,323.8h2.6M221.3,326.87h2.6M236.1,326.87h2.6M221.3,329.93h2.6M236.1,329.93h2.6M221.3,333h2.6M236.1,333h2.6M221.3,336.07h2.6M236.1,336.07h2.6M221.3,339.13h2.6M236.1,339.13h2.6M221.3,342.2h2.6M236.1,342.2h2.6M221.3,345.27h2.6M236.1,345.27h2.6M221.3,348.33h2.6M236.1,348.33h2.6M221.3,351.4h2.6M236.1,351.4h2.6M221.3,354.47h2.6M236.1,354.47h2.6M221.3,357.53h2.6M236.1,357.53h2.6M221.3,360.6h2.6M236.1,360.6h2.6M221.3,363.67h2.6M236.1,363.67h2.6M221.3,366.73h2.6M236.1,366.73h2.6M221.3,369.8h2.6M236.1,369.8h2.6M221.3,372.87h2.6M236.1,372.87h2.6M221.3,375.93h2.6M236.1,375.93h2.6M221.3,379h2.6M236.1,379h2.6" stroke="#fff" stroke-width="0.5" fill="none" opacity="0.7"/>
<rect x="224.3" y="286.6" width="11.4" height="93.4" fill="#000"/>
<rect x="226.4" y="289.6" width="7.2" height="7.6" fill="#000" stroke="#fff" stroke-width="0.8"/>
<rect x="227.8" y="291" width="4.4" height="4.8" fill="#000" stroke="#fff" stroke-width="0.5" opacity="0.7"/>
<rect x="226.6" y="300.2" width="6.8" height="4" fill="#8a8a8a"/>
<path d="M226.6,300.2H233.4M226.6,302.2H233.4M226.6,304.2H233.4" stroke="#fff" stroke-width="0.5" fill="none" opacity="0.9"/>
<rect x="226.8" y="307" width="6.2" height="54.4" fill="#000" stroke="#fff" stroke-width="0.9"/>
<rect x="225.2" y="305.6" width="9.4" height="57.2" fill="none" stroke="#fff" stroke-width="0.5" opacity="0.6"/>
<rect x="225" y="365.4" width="10" height="12" fill="#8c8c8c"/>
<path d="M225,365.4V377.4M226.25,365.4V377.4M227.5,365.4V377.4M228.75,365.4V377.4M230,365.4V377.4M231.25,365.4V377.4M232.5,365.4V377.4M233.75,365.4V377.4M235,365.4V377.4" stroke="#fff" stroke-width="0.5" fill="none" opacity="0.8"/>
<rect x="225" y="365.4" width="10" height="12" fill="none" stroke="#fff" stroke-width="0.6"/>
<rect x="226.6" y="378.6" width="6.8" height="2.8" fill="#bbb"/>
<rect x="220.9" y="383.4" width="18.2" height="7.8" fill="#000" stroke="#fff" stroke-width="0.9"/>
<path d="M219.9,382.2H240.1" stroke="#fff" stroke-width="0.7" fill="none"/>
<rect x="241.6" y="274.6" width="5.2" height="6" fill="#dcdcdc"/>
<path d="M244.2,275.6v4" stroke="#000" stroke-width="2.2" stroke-dasharray=".8 .8" opacity=".6"/>
<rect x="241.6" y="281.6" width="5.2" height="93.4" fill="none" stroke="#fff" stroke-width="0.5" opacity="0.75"/>
<circle cx="244.2" cy="286" r="2.2" fill="#000" stroke="#fff" stroke-width=".7"/>
<rect x="242.6" y="291.4" width="3.2" height="26.6" fill="#000" stroke="#fff" stroke-width="0.7"/>
<path d="M241.6,320.4H246.8M241.6,322H246.8" stroke="#fff" stroke-width="0.6" fill="none" opacity="0.9"/>
<ellipse cx="244.2" cy="325.8" rx="1.9" ry="2.6" fill="#000" stroke="#fff" stroke-width=".7"/>
<rect x="242" y="330.4" width="4.4" height="6.4" fill="#aaa"/>
<path d="M241.6,330.4H246.8M241.6,332.4H246.8M241.6,334.6H246.8M241.6,336.8H246.8" stroke="#fff" stroke-width="0.5" fill="none" opacity="0.9"/>
<circle cx="244.2" cy="341" r="2" fill="#000" stroke="#fff" stroke-width=".7"/>
<rect x="242.6" y="346.4" width="3.2" height="25.6" fill="#000" stroke="#fff" stroke-width="0.7"/>
<rect x="241.8" y="373.6" width="4.8" height="3.8" fill="#bbb"/>
<path d="M247.5,271H258.7L256.9,274.3H249.3z" stroke="#fff" stroke-width="0.5" fill="#9c9c9c"/>
<rect x="249.5" y="275.4" width="7.2" height="4.2" fill="#000" stroke="#fff" stroke-width="0.7"/>
<path d="M248.1,280.8H258.1" stroke="#fff" stroke-width="0.7" fill="none"/>
<rect x="248.9" y="281.8" width="8.4" height="18.6" fill="#9c9c9c"/>
<path d="M254.4,281.8V300.4" stroke="#fff" stroke-width="1" fill="none" opacity="0.95"/>
<path d="M251.9,281.8V300.4" stroke="#fff" stroke-width="0.7" fill="none" opacity="0.6"/>
<path d="M249.1,281.8V300.4M257.1,281.8V300.4" stroke="#fff" stroke-width="0.5" fill="none" opacity="0.6"/>
<path d="M248.5,301.4H257.7M248.5,303H257.7" stroke="#fff" stroke-width="0.6" fill="none" opacity="0.9"/>
<rect x="249.1" y="304.4" width="8" height="52" fill="#000" stroke="#fff" stroke-width="0.8"/>
<circle cx="253.1" cy="323.8" r="2.5" fill="#fff"/>
<path d="M252,325.9L253.1,328.3L254.2,325.9z" fill="#ccc"/>
<circle cx="253.1" cy="323.3" r="0.75" fill="#888"/>
<path d="M248.5,357.6H257.7" stroke="#fff" stroke-width="0.6" fill="none" opacity="0.9"/>
<rect x="248.9" y="358.6" width="8.4" height="49.4" fill="#f4f4f4"/>
<path d="M250.9,358.6V408M253.3,358.6V408M255.7,358.6V408" stroke="#666" stroke-width="0.6" fill="none" opacity="0.5"/>
<rect x="246.9" y="408" width="12.4" height="2.8" fill="#fff"/>
<rect x="318.3" y="259.6" width="21" height="26.8" fill="#000"/>
<rect x="321.6" y="260" width="14.4" height="5.8" fill="#000" stroke="#fff" stroke-width="0.7" rx="1.5" opacity="0.6"/>
<rect x="321.6" y="266.6" width="14.4" height="4.4" fill="#000" stroke="#fff" stroke-width="0.7" opacity="0.65"/>
<path d="M320.3,272.6H337.3M320.3,274H337.3" stroke="#fff" stroke-width="0.6" fill="none" opacity="0.85"/>
<path d="M318.7,275.2H338.9L337.7,278.2H319.9z" stroke="#fff" stroke-width="0.8" fill="none"/>
<path d="M319.3,276.6H338.3" stroke="#fff" stroke-width="0.5" fill="none" opacity="0.7"/>
<rect x="319.7" y="280.2" width="18.2" height="5.8" fill="#000" stroke="#fff" stroke-width="0.8"/>
<path d="M319.7,282.2H337.9M319.7,284H337.9" stroke="#fff" stroke-width="0.5" fill="none" opacity="0.6"/>
<rect x="319.9" y="286.4" width="17.8" height="93.6" fill="#2c2c2c" opacity="0.9"/>
<path d="M320.1,286.4V380M322.7,286.4V380M334.9,286.4V380M337.5,286.4V380" stroke="#fff" stroke-width="0.55" fill="none" opacity="0.75"/>
<path d="M320.1,287h2.6M334.9,287h2.6M320.1,290.07h2.6M334.9,290.07h2.6M320.1,293.13h2.6M334.9,293.13h2.6M320.1,296.2h2.6M334.9,296.2h2.6M320.1,299.27h2.6M334.9,299.27h2.6M320.1,302.33h2.6M334.9,302.33h2.6M320.1,305.4h2.6M334.9,305.4h2.6M320.1,308.47h2.6M334.9,308.47h2.6M320.1,311.53h2.6M334.9,311.53h2.6M320.1,314.6h2.6M334.9,314.6h2.6M320.1,317.67h2.6M334.9,317.67h2.6M320.1,320.73h2.6M334.9,320.73h2.6M320.1,323.8h2.6M334.9,323.8h2.6M320.1,326.87h2.6M334.9,326.87h2.6M320.1,329.93h2.6M334.9,329.93h2.6M320.1,333h2.6M334.9,333h2.6M320.1,336.07h2.6M334.9,336.07h2.6M320.1,339.13h2.6M334.9,339.13h2.6M320.1,342.2h2.6M334.9,342.2h2.6M320.1,345.27h2.6M334.9,345.27h2.6M320.1,348.33h2.6M334.9,348.33h2.6M320.1,351.4h2.6M334.9,351.4h2.6M320.1,354.47h2.6M334.9,354.47h2.6M320.1,357.53h2.6M334.9,357.53h2.6M320.1,360.6h2.6M334.9,360.6h2.6M320.1,363.67h2.6M334.9,363.67h2.6M320.1,366.73h2.6M334.9,366.73h2.6M320.1,369.8h2.6M334.9,369.8h2.6M320.1,372.87h2.6M334.9,372.87h2.6M320.1,375.93h2.6M334.9,375.93h2.6M320.1,379h2.6M334.9,379h2.6" stroke="#fff" stroke-width="0.5" fill="none" opacity="0.7"/>
<rect x="323.1" y="286.6" width="11.4" height="93.4" fill="#000"/>
<rect x="325.2" y="289.6" width="7.2" height="7.6" fill="#000" stroke="#fff" stroke-width="0.8"/>
<rect x="326.6" y="291" width="4.4" height="4.8" fill="#000" stroke="#fff" stroke-width="0.5" opacity="0.7"/>
<rect x="325.4" y="300.2" width="6.8" height="4" fill="#8a8a8a"/>
<path d="M325.4,300.2H332.2M325.4,302.2H332.2M325.4,304.2H332.2" stroke="#fff" stroke-width="0.5" fill="none" opacity="0.9"/>
<rect x="325.6" y="307" width="6.2" height="54.4" fill="#000" stroke="#fff" stroke-width="0.9"/>
<rect x="324" y="305.6" width="9.4" height="57.2" fill="none" stroke="#fff" stroke-width="0.5" opacity="0.6"/>
<rect x="323.8" y="365.4" width="10" height="12" fill="#8c8c8c"/>
<path d="M323.8,365.4V377.4M325.05,365.4V377.4M326.3,365.4V377.4M327.55,365.4V377.4M328.8,365.4V377.4M330.05,365.4V377.4M331.3,365.4V377.4M332.55,365.4V377.4M333.8,365.4V377.4" stroke="#fff" stroke-width="0.5" fill="none" opacity="0.8"/>
<rect x="323.8" y="365.4" width="10" height="12" fill="none" stroke="#fff" stroke-width="0.6"/>
<rect x="325.4" y="378.6" width="6.8" height="2.8" fill="#bbb"/>
<rect x="319.7" y="383.4" width="18.2" height="7.8" fill="#000" stroke="#fff" stroke-width="0.9"/>
<path d="M318.7,382.2H338.9" stroke="#fff" stroke-width="0.7" fill="none"/>
<rect x="312" y="274.6" width="5.2" height="6" fill="#dcdcdc"/>
<path d="M314.6,275.6v4" stroke="#000" stroke-width="2.2" stroke-dasharray=".8 .8" opacity=".6"/>
<rect x="312" y="281.6" width="5.2" height="93.4" fill="none" stroke="#fff" stroke-width="0.5" opacity="0.75"/>
<circle cx="314.6" cy="286" r="2.2" fill="#000" stroke="#fff" stroke-width=".7"/>
<rect x="313" y="291.4" width="3.2" height="26.6" fill="#000" stroke="#fff" stroke-width="0.7"/>
<path d="M312,320.4H317.2M312,322H317.2" stroke="#fff" stroke-width="0.6" fill="none" opacity="0.9"/>
<ellipse cx="314.6" cy="325.8" rx="1.9" ry="2.6" fill="#000" stroke="#fff" stroke-width=".7"/>
<rect x="312.4" y="330.4" width="4.4" height="6.4" fill="#aaa"/>
<path d="M312,330.4H317.2M312,332.4H317.2M312,334.6H317.2M312,336.8H317.2" stroke="#fff" stroke-width="0.5" fill="none" opacity="0.9"/>
<circle cx="314.6" cy="341" r="2" fill="#000" stroke="#fff" stroke-width=".7"/>
<rect x="313" y="346.4" width="3.2" height="25.6" fill="#000" stroke="#fff" stroke-width="0.7"/>
<rect x="312.2" y="373.6" width="4.8" height="3.8" fill="#bbb"/>
<path d="M300.1,271H311.3L309.5,274.3H301.9z" stroke="#fff" stroke-width="0.5" fill="#9c9c9c"/>
<rect x="302.1" y="275.4" width="7.2" height="4.2" fill="#000" stroke="#fff" stroke-width="0.7"/>
<path d="M300.7,280.8H310.7" stroke="#fff" stroke-width="0.7" fill="none"/>
<rect x="301.5" y="281.8" width="8.4" height="18.6" fill="#9c9c9c"/>
<path d="M307,281.8V300.4" stroke="#fff" stroke-width="1" fill="none" opacity="0.95"/>
<path d="M304.5,281.8V300.4" stroke="#fff" stroke-width="0.7" fill="none" opacity="0.6"/>
<path d="M301.7,281.8V300.4M309.7,281.8V300.4" stroke="#fff" stroke-width="0.5" fill="none" opacity="0.6"/>
<path d="M301.1,301.4H310.3M301.1,303H310.3" stroke="#fff" stroke-width="0.6" fill="none" opacity="0.9"/>
<rect x="301.7" y="304.4" width="8" height="52" fill="#000" stroke="#fff" stroke-width="0.8"/>
<circle cx="305.7" cy="323.8" r="2.5" fill="#fff"/>
<path d="M304.6,325.9L305.7,328.3L306.8,325.9z" fill="#ccc"/>
<circle cx="305.7" cy="323.3" r="0.75" fill="#888"/>
<path d="M301.1,357.6H310.3" stroke="#fff" stroke-width="0.6" fill="none" opacity="0.9"/>
<rect x="301.5" y="358.6" width="8.4" height="49.4" fill="#f4f4f4"/>
<path d="M303.5,358.6V408M305.9,358.6V408M308.3,358.6V408" stroke="#666" stroke-width="0.6" fill="none" opacity="0.5"/>
<rect x="299.5" y="408" width="12.4" height="2.8" fill="#fff"/>
<rect x="260.6" y="262" width="37.6" height="7.6" fill="#000"/>
<path d="M259.6,262.6Q279.4,255.6 299.2,262.6" stroke="#fff" stroke-width="1.3" fill="none"/>
<path d="M261,261.62L263.1,269.4M263.95,260.94L265.7,269.4M266.9,260.39L268.3,269.4M269.85,259.96L270.9,269.4M272.8,259.65L273.5,269.4M275.75,259.46L276.1,269.4M283.05,259.46L282.7,269.4M286,259.65L285.3,269.4M288.95,259.96L287.9,269.4M291.9,260.39L290.5,269.4M294.85,260.94L293.1,269.4M297.8,261.62L295.7,269.4" stroke="#fff" stroke-width="0.8" fill="none" opacity="0.9"/>
<path d="M261.1,269.8H297.7" stroke="#fff" stroke-width="0.7" fill="none"/>
<circle cx="279.4" cy="265.4" r="2.8" fill="#fff"/>
<path d="M278.3,267.8L279.4,270.2L280.5,267.8z" fill="#ccc"/>
<circle cx="279.4" cy="264.9" r="0.84" fill="#888"/>
<path d="M259.6,262.6L261.2,269.8M299.2,262.6L297.6,269.8" stroke="#fff" stroke-width="0.9" fill="none"/>
<rect x="259.5" y="272.6" width="39.8" height="102.4" fill="#555"/>
<path d="M258.7,271H300.1L298.7,274.3H260.1z" stroke="#fff" stroke-width="0.5" fill="#9c9c9c"/>
<rect x="260.3" y="275" width="38.2" height="5.3" fill="#8e8e8e"/>
<path d="M261.5,275.8v3.7M264.06,275.8v3.7M266.61,275.8v3.7M269.17,275.8v3.7M271.73,275.8v3.7M274.29,275.8v3.7M276.84,275.8v3.7M279.4,275.8v3.7M281.96,275.8v3.7M284.51,275.8v3.7M287.07,275.8v3.7M289.63,275.8v3.7M292.19,275.8v3.7M294.74,275.8v3.7M297.3,275.8v3.7" stroke="#fff" stroke-width="1.05" opacity=".9" stroke-dasharray="1.6 .6"/>
<path d="M260.3,275H298.5M260.3,280.3H298.5" stroke="#fff" stroke-width="0.5" fill="none" opacity="0.9"/>
<path d="M259.8,274V371M299,274V371" stroke="#fff" stroke-width="0.6" fill="none" opacity="0.7"/>
<rect x="261" y="282.4" width="8.7" height="45.2" fill="#8c8c8c" stroke="#fff" stroke-width="0.7" opacity="0.95"/>
<rect x="261" y="337.6" width="8.7" height="33" fill="#8c8c8c" stroke="#fff" stroke-width="0.7" opacity="0.95"/>
<rect x="261.5" y="283.3" width="7.7" height="7" fill="#fff" rx="2.6" opacity="0.95"/>
<rect x="262.25" y="284.05" width="6.2" height="5.5" fill="#000" rx="2.2"/>
<rect x="262.2" y="292.4" width="6.3" height="23.8" fill="#fff" opacity="0.96"/>
<path d="M262.7,294.46h2.14M262.7,298.43h2.14M262.7,302.4h2.14M262.7,306.36h2.14M262.7,310.33h2.14M262.7,314.3h2.14M265.85,294.46h2.14M265.85,298.43h2.14M265.85,302.4h2.14M265.85,306.36h2.14M265.85,310.33h2.14M265.85,314.3h2.14" stroke="#000" stroke-width="2.7" opacity=".92"/>
<rect x="261.3" y="317.9" width="8.1" height="9.2" fill="#fff" rx="2.8" opacity="0.95"/>
<rect x="262.05" y="318.65" width="6.6" height="7.7" fill="#000" rx="2.4"/>
<rect x="261.5" y="338.1" width="7.7" height="6.2" fill="#fff" rx="2.6" opacity="0.95"/>
<rect x="262.25" y="338.85" width="6.2" height="4.7" fill="#000" rx="2.2"/>
<rect x="262.2" y="346.4" width="6.3" height="23.2" fill="#fff" opacity="0.96"/>
<path d="M262.7,348.41h2.14M262.7,352.28h2.14M262.7,356.14h2.14M262.7,360.01h2.14M262.7,363.88h2.14M262.7,367.74h2.14M265.85,348.41h2.14M265.85,352.28h2.14M265.85,356.14h2.14M265.85,360.01h2.14M265.85,363.88h2.14M265.85,367.74h2.14" stroke="#000" stroke-width="2.63" opacity=".92"/>
<rect x="272.5" y="282.4" width="14.3" height="45.2" fill="#8c8c8c" stroke="#fff" stroke-width="0.7" opacity="0.95"/>
<rect x="272.5" y="337.6" width="14.3" height="33" fill="#8c8c8c" stroke="#fff" stroke-width="0.7" opacity="0.95"/>
<rect x="273" y="283.3" width="13.3" height="7" fill="#fff" rx="2.6" opacity="0.95"/>
<rect x="273.75" y="284.05" width="11.8" height="5.5" fill="#000" rx="2.2"/>
<rect x="273.7" y="292.4" width="11.9" height="23.8" fill="#fff" opacity="0.96"/>
<path d="M274.14,294.46h1.87M274.14,298.43h1.87M274.14,302.4h1.87M274.14,306.36h1.87M274.14,310.33h1.87M274.14,314.3h1.87M276.89,294.46h1.87M276.89,298.43h1.87M276.89,302.4h1.87M276.89,306.36h1.87M276.89,310.33h1.87M276.89,314.3h1.87M280.54,294.46h1.87M280.54,298.43h1.87M280.54,302.4h1.87M280.54,306.36h1.87M280.54,310.33h1.87M280.54,314.3h1.87M283.29,294.46h1.87M283.29,298.43h1.87M283.29,302.4h1.87M283.29,306.36h1.87M283.29,310.33h1.87M283.29,314.3h1.87" stroke="#000" stroke-width="2.7" opacity=".92"/>
<rect x="272.8" y="317.9" width="13.7" height="9.2" fill="#fff" rx="2.8" opacity="0.95"/>
<rect x="273.55" y="318.65" width="12.2" height="7.7" fill="#000" rx="2.4"/>
<rect x="273" y="338.1" width="13.3" height="6.2" fill="#fff" rx="2.6" opacity="0.95"/>
<rect x="273.75" y="338.85" width="11.8" height="4.7" fill="#000" rx="2.2"/>
<rect x="273.7" y="346.4" width="11.9" height="23.2" fill="#fff" opacity="0.96"/>
<path d="M274.14,348.41h1.87M274.14,352.28h1.87M274.14,356.14h1.87M274.14,360.01h1.87M274.14,363.88h1.87M274.14,367.74h1.87M276.89,348.41h1.87M276.89,352.28h1.87M276.89,356.14h1.87M276.89,360.01h1.87M276.89,363.88h1.87M276.89,367.74h1.87M280.54,348.41h1.87M280.54,352.28h1.87M280.54,356.14h1.87M280.54,360.01h1.87M280.54,363.88h1.87M280.54,367.74h1.87M283.29,348.41h1.87M283.29,352.28h1.87M283.29,356.14h1.87M283.29,360.01h1.87M283.29,363.88h1.87M283.29,367.74h1.87" stroke="#000" stroke-width="2.63" opacity=".92"/>
<rect x="289.6" y="282.4" width="8.9" height="45.2" fill="#8c8c8c" stroke="#fff" stroke-width="0.7" opacity="0.95"/>
<rect x="289.6" y="337.6" width="8.9" height="33" fill="#8c8c8c" stroke="#fff" stroke-width="0.7" opacity="0.95"/>
<rect x="290.1" y="283.3" width="7.9" height="7" fill="#fff" rx="2.6" opacity="0.95"/>
<rect x="290.85" y="284.05" width="6.4" height="5.5" fill="#000" rx="2.2"/>
<rect x="290.8" y="292.4" width="6.5" height="23.8" fill="#fff" opacity="0.96"/>
<path d="M291.32,294.46h2.21M291.32,298.43h2.21M291.32,302.4h2.21M291.32,306.36h2.21M291.32,310.33h2.21M291.32,314.3h2.21M294.57,294.46h2.21M294.57,298.43h2.21M294.57,302.4h2.21M294.57,306.36h2.21M294.57,310.33h2.21M294.57,314.3h2.21" stroke="#000" stroke-width="2.7" opacity=".92"/>
<rect x="289.9" y="317.9" width="8.3" height="9.2" fill="#fff" rx="2.8" opacity="0.95"/>
<rect x="290.65" y="318.65" width="6.8" height="7.7" fill="#000" rx="2.4"/>
<rect x="290.1" y="338.1" width="7.9" height="6.2" fill="#fff" rx="2.6" opacity="0.95"/>
<rect x="290.85" y="338.85" width="6.4" height="4.7" fill="#000" rx="2.2"/>
<rect x="290.8" y="346.4" width="6.5" height="23.2" fill="#fff" opacity="0.96"/>
<path d="M291.32,348.41h2.21M291.32,352.28h2.21M291.32,356.14h2.21M291.32,360.01h2.21M291.32,363.88h2.21M291.32,367.74h2.21M294.57,348.41h2.21M294.57,352.28h2.21M294.57,356.14h2.21M294.57,360.01h2.21M294.57,363.88h2.21M294.57,367.74h2.21" stroke="#000" stroke-width="2.63" opacity=".92"/>
<rect x="259.5" y="328.2" width="39.8" height="8.4" fill="#666"/>
<path d="M259.5,328.6H299.3M259.5,331.6H299.3M259.5,334.6H299.3" stroke="#fff" stroke-width="0.6" fill="none" opacity="0.8"/>
<path d="M278.4,328.4V336.4M280.4,328.4V336.4" stroke="#fff" stroke-width="0.7" fill="none"/>
<path d="M276.4,331.5h6M279.4,328v3" stroke="#fff" stroke-width="0.7" fill="none"/>
<rect x="258.3" y="371.4" width="42.2" height="3.4" fill="#ededed"/>
<rect x="259.5" y="376.6" width="39.8" height="3.4" fill="#bbb"/>
<path d="M259.5,378.3H299.3" stroke="#000" stroke-width="2.2" stroke-dasharray=".7 .8" opacity=".75"/>
<rect x="278.4" y="376.4" width="2" height="3.8" fill="#fff"/>
<rect x="258.6" y="380.4" width="41.6" height="30.2" fill="#cfcfcf"/>
<path d="M258.6,381H300.2M258.6,383.4H300.2" stroke="#fff" stroke-width="0.8" fill="none"/>
<rect x="260.5" y="385" width="8" height="23.8" fill="#000"/>
<rect x="270.8" y="385" width="7" height="23.8" fill="#000"/>
<rect x="281" y="385" width="7.3" height="23.8" fill="#000"/>
<rect x="290.9" y="385" width="7.3" height="23.8" fill="#000"/>
<rect x="278.9" y="376" width="1" height="34" fill="#fff"/>
<rect x="444.3" y="216.8" width="119" height="15.2" fill="#000"/>
<path d="M454.4,130L454.4,155" stroke="#fff" stroke-width="0.9"/>
<rect x="453.5" y="155" width="1.8" height="7" fill="none" stroke="#fff" stroke-width="0.6"/>
<path d="M453,157.4H455.8M453,159.6H455.8" stroke="#fff" stroke-width="0.5" fill="none" opacity="0.8"/>
<path d="M449.6,164.4Q454.4,161.4 459.2,164.4Q454.4,167.2 449.6,164.4z" stroke="#fff" stroke-width="0.8" fill="none"/>
<path d="M451.8,166.4L454.4,171.6L457,166.4" stroke="#fff" stroke-width="0.7" fill="none"/>
<path d="M451.4,177.3l-1.6,-1.2l.8,-1.4l-.9,-1.4l1.5,-1.4h6.4l1.5,1.4l-.9,1.4l.8,1.4l-1.6,1.2" stroke="#fff" stroke-width="0.8" fill="none"/>
<circle cx="454.4" cy="174.6" r="1.7" fill="none" stroke="#fff" stroke-width=".7"/>
<path d="M447.8,190.3l-.9,-2l-1,-.6l.8,-2.6l-.8,-2.4l1,-.8l.3,-2.2l1.6,-1h11.2l1.6,1l.3,2.2l1,.8l-.8,2.4l.8,2.6l-1,.6l-.9,2z" stroke="#fff" stroke-width="0.85" fill="none"/>
<circle cx="454.4" cy="184.9" r="4.4" fill="none" stroke="#fff" stroke-width="1"/>
<path d="M451.8,187l2.6,-4.4l2.6,4.4M452.4,185.6h4" stroke="#fff" stroke-width="0.6" fill="none" opacity="0.85"/>
<path d="M449.4,179H459.4" stroke="#fff" stroke-width="0.5" fill="none" opacity="0.7"/>
<rect x="447.4" y="190.3" width="14" height="1.8" fill="none" stroke="#fff" stroke-width="0.7"/>
<rect x="445.2" y="192.1" width="18.4" height="2.5" fill="none" stroke="#fff" stroke-width="0.7"/>
<path d="M439.6,195.6q1,-1.2 3,-1h23.6q2,-.2 3,1l-.6,1.4l-2,1.4h-24.4l-2,-1.4z" stroke="#fff" stroke-width="0.85" fill="none"/>
<path d="M441.8,196.4H467" stroke="#fff" stroke-width="0.5" fill="none" opacity="0.8"/>
<path d="M439.8,196.4l-.2,2.4l1.6,.4M469,196.4l.2,2.4l-1.6,.4" stroke="#fff" stroke-width="0.7" fill="none"/>
<path d="M443.8,199.6H465M443.8,201H465" stroke="#fff" stroke-width="0.6" fill="none" opacity="0.9"/>
<path d="M444.8,201V226M446.8,201V226M462,201V226M464,201V226" stroke="#fff" stroke-width="0.6" fill="none" opacity="0.9"/>
<path d="M448.4,201V222M460.4,201V222" stroke="#fff" stroke-width="0.5" fill="none" opacity="0.7"/>
<path d="M444,205H448.8M444,209.4H448.8M444,211H448.8M444,221.2H448.8" stroke="#fff" stroke-width="0.6" fill="none" opacity="0.9"/>
<path d="M460,205H464.8M460,209.4H464.8M460,211H464.8M460,221.2H464.8" stroke="#fff" stroke-width="0.6" fill="none" opacity="0.9"/>
<rect x="449.8" y="202.8" width="9.2" height="17.8" fill="#000" stroke="#fff" stroke-width="0.9"/>
<rect x="451" y="204" width="6.8" height="15.6" fill="none" stroke="#fff" stroke-width="0.4" opacity="0.6"/>
<rect x="450.5" y="223.6" width="7.8" height="7.8" fill="#000" stroke="#fff" stroke-width="0.9"/>
<path d="M553.2,130L553.2,155" stroke="#fff" stroke-width="0.9"/>
<rect x="552.3" y="155" width="1.8" height="7" fill="none" stroke="#fff" stroke-width="0.6"/>
<path d="M551.8,157.4H554.6M551.8,159.6H554.6" stroke="#fff" stroke-width="0.5" fill="none" opacity="0.8"/>
<path d="M548.4,164.4Q553.2,161.4 558,164.4Q553.2,167.2 548.4,164.4z" stroke="#fff" stroke-width="0.8" fill="none"/>
<path d="M550.6,166.4L553.2,171.6L555.8,166.4" stroke="#fff" stroke-width="0.7" fill="none"/>
<path d="M550.2,177.3l-1.6,-1.2l.8,-1.4l-.9,-1.4l1.5,-1.4h6.4l1.5,1.4l-.9,1.4l.8,1.4l-1.6,1.2" stroke="#fff" stroke-width="0.8" fill="none"/>
<circle cx="553.2" cy="174.6" r="1.7" fill="none" stroke="#fff" stroke-width=".7"/>
<path d="M546.6,190.3l-.9,-2l-1,-.6l.8,-2.6l-.8,-2.4l1,-.8l.3,-2.2l1.6,-1h11.2l1.6,1l.3,2.2l1,.8l-.8,2.4l.8,2.6l-1,.6l-.9,2z" stroke="#fff" stroke-width="0.85" fill="none"/>
<circle cx="553.2" cy="184.9" r="4.4" fill="none" stroke="#fff" stroke-width="1"/>
<path d="M550.6,187l2.6,-4.4l2.6,4.4M551.2,185.6h4" stroke="#fff" stroke-width="0.6" fill="none" opacity="0.85"/>
<path d="M548.2,179H558.2" stroke="#fff" stroke-width="0.5" fill="none" opacity="0.7"/>
<rect x="546.2" y="190.3" width="14" height="1.8" fill="none" stroke="#fff" stroke-width="0.7"/>
<rect x="544" y="192.1" width="18.4" height="2.5" fill="none" stroke="#fff" stroke-width="0.7"/>
<path d="M538.4,195.6q1,-1.2 3,-1h23.6q2,-.2 3,1l-.6,1.4l-2,1.4h-24.4l-2,-1.4z" stroke="#fff" stroke-width="0.85" fill="none"/>
<path d="M540.6,196.4H565.8" stroke="#fff" stroke-width="0.5" fill="none" opacity="0.8"/>
<path d="M538.6,196.4l-.2,2.4l1.6,.4M567.8,196.4l.2,2.4l-1.6,.4" stroke="#fff" stroke-width="0.7" fill="none"/>
<path d="M542.6,199.6H563.8M542.6,201H563.8" stroke="#fff" stroke-width="0.6" fill="none" opacity="0.9"/>
<path d="M543.6,201V226M545.6,201V226M560.8,201V226M562.8,201V226" stroke="#fff" stroke-width="0.6" fill="none" opacity="0.9"/>
<path d="M547.2,201V222M559.2,201V222" stroke="#fff" stroke-width="0.5" fill="none" opacity="0.7"/>
<path d="M542.8,205H547.6M542.8,209.4H547.6M542.8,211H547.6M542.8,221.2H547.6" stroke="#fff" stroke-width="0.6" fill="none" opacity="0.9"/>
<path d="M558.8,205H563.6M558.8,209.4H563.6M558.8,211H563.6M558.8,221.2H563.6" stroke="#fff" stroke-width="0.6" fill="none" opacity="0.9"/>
<rect x="548.6" y="202.8" width="9.2" height="17.8" fill="#000" stroke="#fff" stroke-width="0.9"/>
<rect x="549.8" y="204" width="6.8" height="15.6" fill="none" stroke="#fff" stroke-width="0.4" opacity="0.6"/>
<rect x="549.3" y="223.6" width="7.8" height="7.8" fill="#000" stroke="#fff" stroke-width="0.9"/>
<rect x="478.6" y="180.3" width="3.6" height="3.9" fill="none" stroke="#fff" stroke-width="0.9"/>
<path d="M480.4,184.2l-1.4,2.6" stroke="#fff" stroke-width="0.9" fill="none"/>
<path d="M478.6,186.8c-7,.4 -10,5 -7.6,10.4c2.6,3.6 7,1 7.6,-3.4c4,2.4 5.4,6 3,9.6c-6,2.6 -10,4.6 -8.6,9.4c-3.6,5 -3.6,12 -1,15.6c3,3 11,3 12.4,-1c2.4,-6 0.6,-14.6 -2.4,-18.8" stroke="#fff" stroke-width="1.2" fill="none"/>
<path d="M479,187c4,1 5.6,4 5,7.6M473,190.4c3,3.6 6,3 7,-.6M471.6,203.6c4,3.4 8.6,2.4 10,-1M474,209l0.6,12.6M478.6,208.6l1,13.6M482,209l0.4,12M471,222q7,4.8 14.6,0" stroke="#fff" stroke-width="0.9" fill="none" opacity="0.95"/>
<path d="M471.6,192q3.6,5 1,9.6M482,196q-5,2 -3.6,7M475,200q4,2.4 6.4,0M476,214q2.6,4 5.6,0M472.4,216.6q-1,4 1.4,7M484.6,214q1.6,4 -0.4,8M470.4,207q-1.6,5 0.6,9" stroke="#fff" stroke-width="0.7" fill="none" opacity="0.85"/>
<circle cx="477" cy="193.6" r="2.3" fill="none" stroke="#fff" stroke-width=".8" opacity=".95"/>
<circle cx="481.6" cy="191" r="1.5" fill="none" stroke="#fff" stroke-width=".6" opacity=".8"/>
<ellipse cx="478.6" cy="212" rx="4" ry="5.6" fill="none" stroke="#fff" stroke-width=".7" opacity=".85"/>
<rect x="525.4" y="180.3" width="3.6" height="3.9" fill="none" stroke="#fff" stroke-width="0.9"/>
<path d="M527.2,184.2l1.4,2.6" stroke="#fff" stroke-width="0.9" fill="none"/>
<path d="M529,186.8c7,.4 10,5 7.6,10.4c-2.6,3.6 -7,1 -7.6,-3.4c-4,2.4 -5.4,6 -3,9.6c6,2.6 10,4.6 8.6,9.4c3.6,5 3.6,12 1,15.6c-3,3 -11,3 -12.4,-1c-2.4,-6 -0.6,-14.6 2.4,-18.8" stroke="#fff" stroke-width="1.2" fill="none"/>
<path d="M528.6,187c-4,1 -5.6,4 -5,7.6M534.6,190.4c-3,3.6 -6,3 -7,-.6M536,203.6c-4,3.4 -8.6,2.4 -10,-1M533.6,209l-0.6,12.6M529,208.6l-1,13.6M525.6,209l-0.4,12M536.6,222q-7,4.8 -14.6,0" stroke="#fff" stroke-width="0.9" fill="none" opacity="0.95"/>
<path d="M536,192q-3.6,5 -1,9.6M525.6,196q5,2 3.6,7M532.6,200q-4,2.4 -6.4,0M531.6,214q-2.6,4 -5.6,0M535.2,216.6q1,4 -1.4,7M523,214q-1.6,4 0.4,8M537.2,207q1.6,5 -0.6,9" stroke="#fff" stroke-width="0.7" fill="none" opacity="0.85"/>
<circle cx="530.6" cy="193.6" r="2.3" fill="none" stroke="#fff" stroke-width=".8" opacity=".95"/>
<circle cx="526" cy="191" r="1.5" fill="none" stroke="#fff" stroke-width=".6" opacity=".8"/>
<ellipse cx="529" cy="212" rx="4" ry="5.6" fill="none" stroke="#fff" stroke-width=".7" opacity=".85"/>
<path d="M484.8,192.4A19,16.7 0 0 1 522.8,192.4" stroke="#fff" stroke-width="1.05" fill="none"/>
<path d="M484.8,192c-1.4,-2 -3,-3 -5,-3.4M522.8,192c1.4,-2 3,-3 5,-3.4" stroke="#fff" stroke-width="0.7" fill="none"/>
<ellipse cx="503.8" cy="185.6" rx="5.4" ry="6.5" fill="none" stroke="#fff" stroke-width="1.1"/>
<path d="M484.8,192.2H522.8M484.8,193.8H522.8M484.8,196.8H522.8" stroke="#fff" stroke-width="0.7" fill="none"/>
<path d="M486.8,198.6H520.8" stroke="#fff" stroke-width="0.6" fill="none" opacity="0.8"/>
<path d="M489.8,201.6H517.8" stroke="#fff" stroke-width="1.5" stroke-dasharray="7 1.6 1.4 1.6" opacity=".9"/>
<path d="M485.8,200H521.8M485.8,203.4H521.8" stroke="#fff" stroke-width="0.5" fill="none" opacity="0.8"/>
<rect x="485.5" y="205.4" width="36.6" height="14.4" fill="#000" stroke="#fff" stroke-width="0.9"/>
<path d="M484.8,220.8H522.8" stroke="#fff" stroke-width="0.7" fill="none"/>
<path d="M486.2,222.4H521.4" stroke="#fff" stroke-width="0.5" fill="none" opacity="0.8"/>
<circle cx="488.4" cy="201.8" r=".8" fill="#fff"/>
<circle cx="488.2" cy="217.6" r=".8" fill="#fff"/>
<circle cx="519.2" cy="201.8" r=".8" fill="#fff"/>
<circle cx="519.4" cy="217.6" r=".8" fill="#fff"/>
<text x="503.8" y="216.5" font-family="Liberation Sans, sans-serif" font-weight="bold" font-size="9.3" fill="#fff" text-anchor="middle" textLength="24" lengthAdjust="spacingAndGlyphs">BANK</text>
<path d="M460.8,205H472.8M460.8,209.4H472.8" stroke="#fff" stroke-width="0.6" fill="none" opacity="0.85"/>
<path d="M534.8,205H546.8M534.8,209.4H546.8" stroke="#fff" stroke-width="0.6" fill="none" opacity="0.85"/>
<rect x="458.2" y="224.6" width="90.8" height="28" fill="#000"/>
<path d="M458.2,225.2H549" stroke="#fff" stroke-width="0.8" fill="none"/>
<path d="M458.2,238.8H549" stroke="#fff" stroke-width="1.1" fill="none"/>
<path d="M458.2,237.2H549" stroke="#fff" stroke-width="0.5" fill="none" opacity="0.7"/>
<path d="M458.2,225.2V238.8M549,225.2V238.8" stroke="#fff" stroke-width="0.8" fill="none"/>
<path d="M481.8,231.4q2.6,-.4 4,1.6q5.4,3.4 10.6,.4q7.4,4 14.8,0q5.2,3 10.6,-.4q1.4,-2 4,-1.6" stroke="#fff" stroke-width="0.8" fill="none"/>
<circle cx="488.9" cy="230" r="1.5" fill="none" stroke="#fff" stroke-width=".7"/>
<circle cx="503.8" cy="230" r="1.5" fill="none" stroke="#fff" stroke-width=".7"/>
<circle cx="518.7" cy="230" r="1.5" fill="none" stroke="#fff" stroke-width=".7"/>
<path d="M465.4,239.6H542M465.4,246.6H542M465.4,252.4H542" stroke="#fff" stroke-width="0.7" fill="none"/>
<path d="M465.4,240.8H542" stroke="#fff" stroke-width="0.5" fill="none" opacity="0.6"/>
<path d="M458.4,238.8Q464.8,240.4 465.4,246.6" stroke="#fff" stroke-width="0.8" fill="none"/>
<path d="M461.8,246.6L465.4,252.4" stroke="#fff" stroke-width="0.7" fill="none"/>
<circle cx="454" cy="247.6" r="2.5" fill="#fff"/>
<path d="M452.9,249.7L454,252.1L455.1,249.7z" fill="#ccc"/>
<circle cx="454" cy="247.1" r="0.75" fill="#888"/>
<path d="M549.2,238.8Q542.8,240.4 542.2,246.6" stroke="#fff" stroke-width="0.8" fill="none"/>
<path d="M545.8,246.6L542.2,252.4" stroke="#fff" stroke-width="0.7" fill="none"/>
<circle cx="553.6" cy="247.6" r="2.5" fill="#fff"/>
<path d="M552.5,249.7L553.6,252.1L554.7,249.7z" fill="#ccc"/>
<circle cx="553.6" cy="247.1" r="0.75" fill="#888"/>
<path d="M443.8,217.8H458.2M443.8,225.4H458.2M443.8,227.6H458.2" stroke="#fff" stroke-width="0.8" fill="none" opacity="0.95"/>
<path d="M549,217.8H563.8M549,225.4H563.8M549,227.6H563.8" stroke="#fff" stroke-width="0.8" fill="none" opacity="0.95"/>
<rect x="443.9" y="259.6" width="21" height="26.8" fill="#000"/>
<rect x="447.2" y="260" width="14.4" height="5.8" fill="#000" stroke="#fff" stroke-width="0.7" rx="1.5" opacity="0.6"/>
<rect x="447.2" y="266.6" width="14.4" height="4.4" fill="#000" stroke="#fff" stroke-width="0.7" opacity="0.65"/>
<path d="M445.9,272.6H462.9M445.9,274H462.9" stroke="#fff" stroke-width="0.6" fill="none" opacity="0.85"/>
<path d="M444.3,275.2H464.5L463.3,278.2H445.5z" stroke="#fff" stroke-width="0.8" fill="none"/>
<path d="M444.9,276.6H463.9" stroke="#fff" stroke-width="0.5" fill="none" opacity="0.7"/>
<rect x="445.3" y="280.2" width="18.2" height="5.8" fill="#000" stroke="#fff" stroke-width="0.8"/>
<path d="M445.3,282.2H463.5M445.3,284H463.5" stroke="#fff" stroke-width="0.5" fill="none" opacity="0.6"/>
<rect x="445.5" y="286.4" width="17.8" height="93.6" fill="#2c2c2c" opacity="0.9"/>
<path d="M445.7,286.4V380M448.3,286.4V380M460.5,286.4V380M463.1,286.4V380" stroke="#fff" stroke-width="0.55" fill="none" opacity="0.75"/>
<path d="M445.7,287h2.6M460.5,287h2.6M445.7,290.07h2.6M460.5,290.07h2.6M445.7,293.13h2.6M460.5,293.13h2.6M445.7,296.2h2.6M460.5,296.2h2.6M445.7,299.27h2.6M460.5,299.27h2.6M445.7,302.33h2.6M460.5,302.33h2.6M445.7,305.4h2.6M460.5,305.4h2.6M445.7,308.47h2.6M460.5,308.47h2.6M445.7,311.53h2.6M460.5,311.53h2.6M445.7,314.6h2.6M460.5,314.6h2.6M445.7,317.67h2.6M460.5,317.67h2.6M445.7,320.73h2.6M460.5,320.73h2.6M445.7,323.8h2.6M460.5,323.8h2.6M445.7,326.87h2.6M460.5,326.87h2.6M445.7,329.93h2.6M460.5,329.93h2.6M445.7,333h2.6M460.5,333h2.6M445.7,336.07h2.6M460.5,336.07h2.6M445.7,339.13h2.6M460.5,339.13h2.6M445.7,342.2h2.6M460.5,342.2h2.6M445.7,345.27h2.6M460.5,345.27h2.6M445.7,348.33h2.6M460.5,348.33h2.6M445.7,351.4h2.6M460.5,351.4h2.6M445.7,354.47h2.6M460.5,354.47h2.6M445.7,357.53h2.6M460.5,357.53h2.6M445.7,360.6h2.6M460.5,360.6h2.6M445.7,363.67h2.6M460.5,363.67h2.6M445.7,366.73h2.6M460.5,366.73h2.6M445.7,369.8h2.6M460.5,369.8h2.6M445.7,372.87h2.6M460.5,372.87h2.6M445.7,375.93h2.6M460.5,375.93h2.6M445.7,379h2.6M460.5,379h2.6" stroke="#fff" stroke-width="0.5" fill="none" opacity="0.7"/>
<rect x="448.7" y="286.6" width="11.4" height="93.4" fill="#000"/>
<rect x="450.8" y="289.6" width="7.2" height="7.6" fill="#000" stroke="#fff" stroke-width="0.8"/>
<rect x="452.2" y="291" width="4.4" height="4.8" fill="#000" stroke="#fff" stroke-width="0.5" opacity="0.7"/>
<rect x="451" y="300.2" width="6.8" height="4" fill="#8a8a8a"/>
<path d="M451,300.2H457.8M451,302.2H457.8M451,304.2H457.8" stroke="#fff" stroke-width="0.5" fill="none" opacity="0.9"/>
<rect x="451.2" y="307" width="6.2" height="54.4" fill="#000" stroke="#fff" stroke-width="0.9"/>
<rect x="449.6" y="305.6" width="9.4" height="57.2" fill="none" stroke="#fff" stroke-width="0.5" opacity="0.6"/>
<rect x="449.4" y="365.4" width="10" height="12" fill="#8c8c8c"/>
<path d="M449.4,365.4V377.4M450.65,365.4V377.4M451.9,365.4V377.4M453.15,365.4V377.4M454.4,365.4V377.4M455.65,365.4V377.4M456.9,365.4V377.4M458.15,365.4V377.4M459.4,365.4V377.4" stroke="#fff" stroke-width="0.5" fill="none" opacity="0.8"/>
<rect x="449.4" y="365.4" width="10" height="12" fill="none" stroke="#fff" stroke-width="0.6"/>
<rect x="451" y="378.6" width="6.8" height="2.8" fill="#bbb"/>
<rect x="445.3" y="383.4" width="18.2" height="7.8" fill="#000" stroke="#fff" stroke-width="0.9"/>
<path d="M444.3,382.2H464.5" stroke="#fff" stroke-width="0.7" fill="none"/>
<rect x="466" y="274.6" width="5.2" height="6" fill="#dcdcdc"/>
<path d="M468.6,275.6v4" stroke="#000" stroke-width="2.2" stroke-dasharray=".8 .8" opacity=".6"/>
<rect x="466" y="281.6" width="5.2" height="93.4" fill="none" stroke="#fff" stroke-width="0.5" opacity="0.75"/>
<circle cx="468.6" cy="286" r="2.2" fill="#000" stroke="#fff" stroke-width=".7"/>
<rect x="467" y="291.4" width="3.2" height="26.6" fill="#000" stroke="#fff" stroke-width="0.7"/>
<path d="M466,320.4H471.2M466,322H471.2" stroke="#fff" stroke-width="0.6" fill="none" opacity="0.9"/>
<ellipse cx="468.6" cy="325.8" rx="1.9" ry="2.6" fill="#000" stroke="#fff" stroke-width=".7"/>
<rect x="466.4" y="330.4" width="4.4" height="6.4" fill="#aaa"/>
<path d="M466,330.4H471.2M466,332.4H471.2M466,334.6H471.2M466,336.8H471.2" stroke="#fff" stroke-width="0.5" fill="none" opacity="0.9"/>
<circle cx="468.6" cy="341" r="2" fill="#000" stroke="#fff" stroke-width=".7"/>
<rect x="467" y="346.4" width="3.2" height="25.6" fill="#000" stroke="#fff" stroke-width="0.7"/>
<rect x="466.2" y="373.6" width="4.8" height="3.8" fill="#bbb"/>
<path d="M471.9,271H483.1L481.3,274.3H473.7z" stroke="#fff" stroke-width="0.5" fill="#9c9c9c"/>
<rect x="473.9" y="275.4" width="7.2" height="4.2" fill="#000" stroke="#fff" stroke-width="0.7"/>
<path d="M472.5,280.8H482.5" stroke="#fff" stroke-width="0.7" fill="none"/>
<rect x="473.3" y="281.8" width="8.4" height="18.6" fill="#9c9c9c"/>
<path d="M478.8,281.8V300.4" stroke="#fff" stroke-width="1" fill="none" opacity="0.95"/>
<path d="M476.3,281.8V300.4" stroke="#fff" stroke-width="0.7" fill="none" opacity="0.6"/>
<path d="M473.5,281.8V300.4M481.5,281.8V300.4" stroke="#fff" stroke-width="0.5" fill="none" opacity="0.6"/>
<path d="M472.9,301.4H482.1M472.9,303H482.1" stroke="#fff" stroke-width="0.6" fill="none" opacity="0.9"/>
<rect x="473.5" y="304.4" width="8" height="52" fill="#000" stroke="#fff" stroke-width="0.8"/>
<circle cx="477.5" cy="323.8" r="2.5" fill="#fff"/>
<path d="M476.4,325.9L477.5,328.3L478.6,325.9z" fill="#ccc"/>
<circle cx="477.5" cy="323.3" r="0.75" fill="#888"/>
<path d="M472.9,357.6H482.1" stroke="#fff" stroke-width="0.6" fill="none" opacity="0.9"/>
<rect x="473.3" y="358.6" width="8.4" height="49.4" fill="#f4f4f4"/>
<path d="M475.3,358.6V408M477.7,358.6V408M480.1,358.6V408" stroke="#666" stroke-width="0.6" fill="none" opacity="0.5"/>
<rect x="471.3" y="408" width="12.4" height="2.8" fill="#fff"/>
<rect x="542.7" y="259.6" width="21" height="26.8" fill="#000"/>
<rect x="546" y="260" width="14.4" height="5.8" fill="#000" stroke="#fff" stroke-width="0.7" rx="1.5" opacity="0.6"/>
<rect x="546" y="266.6" width="14.4" height="4.4" fill="#000" stroke="#fff" stroke-width="0.7" opacity="0.65"/>
<path d="M544.7,272.6H561.7M544.7,274H561.7" stroke="#fff" stroke-width="0.6" fill="none" opacity="0.85"/>
<path d="M543.1,275.2H563.3L562.1,278.2H544.3z" stroke="#fff" stroke-width="0.8" fill="none"/>
<path d="M543.7,276.6H562.7" stroke="#fff" stroke-width="0.5" fill="none" opacity="0.7"/>
<rect x="544.1" y="280.2" width="18.2" height="5.8" fill="#000" stroke="#fff" stroke-width="0.8"/>
<path d="M544.1,282.2H562.3M544.1,284H562.3" stroke="#fff" stroke-width="0.5" fill="none" opacity="0.6"/>
<rect x="544.3" y="286.4" width="17.8" height="93.6" fill="#2c2c2c" opacity="0.9"/>
<path d="M544.5,286.4V380M547.1,286.4V380M559.3,286.4V380M561.9,286.4V380" stroke="#fff" stroke-width="0.55" fill="none" opacity="0.75"/>
<path d="M544.5,287h2.6M559.3,287h2.6M544.5,290.07h2.6M559.3,290.07h2.6M544.5,293.13h2.6M559.3,293.13h2.6M544.5,296.2h2.6M559.3,296.2h2.6M544.5,299.27h2.6M559.3,299.27h2.6M544.5,302.33h2.6M559.3,302.33h2.6M544.5,305.4h2.6M559.3,305.4h2.6M544.5,308.47h2.6M559.3,308.47h2.6M544.5,311.53h2.6M559.3,311.53h2.6M544.5,314.6h2.6M559.3,314.6h2.6M544.5,317.67h2.6M559.3,317.67h2.6M544.5,320.73h2.6M559.3,320.73h2.6M544.5,323.8h2.6M559.3,323.8h2.6M544.5,326.87h2.6M559.3,326.87h2.6M544.5,329.93h2.6M559.3,329.93h2.6M544.5,333h2.6M559.3,333h2.6M544.5,336.07h2.6M559.3,336.07h2.6M544.5,339.13h2.6M559.3,339.13h2.6M544.5,342.2h2.6M559.3,342.2h2.6M544.5,345.27h2.6M559.3,345.27h2.6M544.5,348.33h2.6M559.3,348.33h2.6M544.5,351.4h2.6M559.3,351.4h2.6M544.5,354.47h2.6M559.3,354.47h2.6M544.5,357.53h2.6M559.3,357.53h2.6M544.5,360.6h2.6M559.3,360.6h2.6M544.5,363.67h2.6M559.3,363.67h2.6M544.5,366.73h2.6M559.3,366.73h2.6M544.5,369.8h2.6M559.3,369.8h2.6M544.5,372.87h2.6M559.3,372.87h2.6M544.5,375.93h2.6M559.3,375.93h2.6M544.5,379h2.6M559.3,379h2.6" stroke="#fff" stroke-width="0.5" fill="none" opacity="0.7"/>
<rect x="547.5" y="286.6" width="11.4" height="93.4" fill="#000"/>
<rect x="549.6" y="289.6" width="7.2" height="7.6" fill="#000" stroke="#fff" stroke-width="0.8"/>
<rect x="551" y="291" width="4.4" height="4.8" fill="#000" stroke="#fff" stroke-width="0.5" opacity="0.7"/>
<rect x="549.8" y="300.2" width="6.8" height="4" fill="#8a8a8a"/>
<path d="M549.8,300.2H556.6M549.8,302.2H556.6M549.8,304.2H556.6" stroke="#fff" stroke-width="0.5" fill="none" opacity="0.9"/>
<rect x="550" y="307" width="6.2" height="54.4" fill="#000" stroke="#fff" stroke-width="0.9"/>
<rect x="548.4" y="305.6" width="9.4" height="57.2" fill="none" stroke="#fff" stroke-width="0.5" opacity="0.6"/>
<rect x="548.2" y="365.4" width="10" height="12" fill="#8c8c8c"/>
<path d="M548.2,365.4V377.4M549.45,365.4V377.4M550.7,365.4V377.4M551.95,365.4V377.4M553.2,365.4V377.4M554.45,365.4V377.4M555.7,365.4V377.4M556.95,365.4V377.4M558.2,365.4V377.4" stroke="#fff" stroke-width="0.5" fill="none" opacity="0.8"/>
<rect x="548.2" y="365.4" width="10" height="12" fill="none" stroke="#fff" stroke-width="0.6"/>
<rect x="549.8" y="378.6" width="6.8" height="2.8" fill="#bbb"/>
<rect x="544.1" y="383.4" width="18.2" height="7.8" fill="#000" stroke="#fff" stroke-width="0.9"/>
<path d="M543.1,382.2H563.3" stroke="#fff" stroke-width="0.7" fill="none"/>
<rect x="536.4" y="274.6" width="5.2" height="6" fill="#dcdcdc"/>
<path d="M539,275.6v4" stroke="#000" stroke-width="2.2" stroke-dasharray=".8 .8" opacity=".6"/>
<rect x="536.4" y="281.6" width="5.2" height="93.4" fill="none" stroke="#fff" stroke-width="0.5" opacity="0.75"/>
<circle cx="539" cy="286" r="2.2" fill="#000" stroke="#fff" stroke-width=".7"/>
<rect x="537.4" y="291.4" width="3.2" height="26.6" fill="#000" stroke="#fff" stroke-width="0.7"/>
<path d="M536.4,320.4H541.6M536.4,322H541.6" stroke="#fff" stroke-width="0.6" fill="none" opacity="0.9"/>
<ellipse cx="539" cy="325.8" rx="1.9" ry="2.6" fill="#000" stroke="#fff" stroke-width=".7"/>
<rect x="536.8" y="330.4" width="4.4" height="6.4" fill="#aaa"/>
<path d="M536.4,330.4H541.6M536.4,332.4H541.6M536.4,334.6H541.6M536.4,336.8H541.6" stroke="#fff" stroke-width="0.5" fill="none" opacity="0.9"/>
<circle cx="539" cy="341" r="2" fill="#000" stroke="#fff" stroke-width=".7"/>
<rect x="537.4" y="346.4" width="3.2" height="25.6" fill="#000" stroke="#fff" stroke-width="0.7"/>
<rect x="536.6" y="373.6" width="4.8" height="3.8" fill="#bbb"/>
<path d="M524.5,271H535.7L533.9,274.3H526.3z" stroke="#fff" stroke-width="0.5" fill="#9c9c9c"/>
<rect x="526.5" y="275.4" width="7.2" height="4.2" fill="#000" stroke="#fff" stroke-width="0.7"/>
<path d="M525.1,280.8H535.1" stroke="#fff" stroke-width="0.7" fill="none"/>
<rect x="525.9" y="281.8" width="8.4" height="18.6" fill="#9c9c9c"/>
<path d="M531.4,281.8V300.4" stroke="#fff" stroke-width="1" fill="none" opacity="0.95"/>
<path d="M528.9,281.8V300.4" stroke="#fff" stroke-width="0.7" fill="none" opacity="0.6"/>
<path d="M526.1,281.8V300.4M534.1,281.8V300.4" stroke="#fff" stroke-width="0.5" fill="none" opacity="0.6"/>
<path d="M525.5,301.4H534.7M525.5,303H534.7" stroke="#fff" stroke-width="0.6" fill="none" opacity="0.9"/>
<rect x="526.1" y="304.4" width="8" height="52" fill="#000" stroke="#fff" stroke-width="0.8"/>
<circle cx="530.1" cy="323.8" r="2.5" fill="#fff"/>
<path d="M529,325.9L530.1,328.3L531.2,325.9z" fill="#ccc"/>
<circle cx="530.1" cy="323.3" r="0.75" fill="#888"/>
<path d="M525.5,357.6H534.7" stroke="#fff" stroke-width="0.6" fill="none" opacity="0.9"/>
<rect x="525.9" y="358.6" width="8.4" height="49.4" fill="#f4f4f4"/>
<path d="M527.9,358.6V408M530.3,358.6V408M532.7,358.6V408" stroke="#666" stroke-width="0.6" fill="none" opacity="0.5"/>
<rect x="523.9" y="408" width="12.4" height="2.8" fill="#fff"/>
<rect x="485" y="262" width="37.6" height="7.6" fill="#000"/>
<path d="M484,262.6Q503.8,255.6 523.6,262.6" stroke="#fff" stroke-width="1.3" fill="none"/>
<path d="M485.4,261.62L487.5,269.4M488.35,260.94L490.1,269.4M491.3,260.39L492.7,269.4M494.25,259.96L495.3,269.4M497.2,259.65L497.9,269.4M500.15,259.46L500.5,269.4M507.45,259.46L507.1,269.4M510.4,259.65L509.7,269.4M513.35,259.96L512.3,269.4M516.3,260.39L514.9,269.4M519.25,260.94L517.5,269.4M522.2,261.62L520.1,269.4" stroke="#fff" stroke-width="0.8" fill="none" opacity="0.9"/>
<path d="M485.5,269.8H522.1" stroke="#fff" stroke-width="0.7" fill="none"/>
<circle cx="503.8" cy="265.4" r="2.8" fill="#fff"/>
<path d="M502.7,267.8L503.8,270.2L504.9,267.8z" fill="#ccc"/>
<circle cx="503.8" cy="264.9" r="0.84" fill="#888"/>
<path d="M484,262.6L485.6,269.8M523.6,262.6L522,269.8" stroke="#fff" stroke-width="0.9" fill="none"/>
<rect x="483.9" y="272.6" width="39.8" height="102.4" fill="#555"/>
<path d="M483.1,271H524.5L523.1,274.3H484.5z" stroke="#fff" stroke-width="0.5" fill="#9c9c9c"/>
<rect x="484.7" y="275" width="38.2" height="5.3" fill="#8e8e8e"/>
<path d="M485.9,275.8v3.7M488.46,275.8v3.7M491.01,275.8v3.7M493.57,275.8v3.7M496.13,275.8v3.7M498.69,275.8v3.7M501.24,275.8v3.7M503.8,275.8v3.7M506.36,275.8v3.7M508.91,275.8v3.7M511.47,275.8v3.7M514.03,275.8v3.7M516.59,275.8v3.7M519.14,275.8v3.7M521.7,275.8v3.7" stroke="#fff" stroke-width="1.05" opacity=".9" stroke-dasharray="1.6 .6"/>
<path d="M484.7,275H522.9M484.7,280.3H522.9" stroke="#fff" stroke-width="0.5" fill="none" opacity="0.9"/>
<path d="M484.2,274V371M523.4,274V371" stroke="#fff" stroke-width="0.6" fill="none" opacity="0.7"/>
<rect x="485.4" y="282.4" width="8.7" height="45.2" fill="#8c8c8c" stroke="#fff" stroke-width="0.7" opacity="0.95"/>
<rect x="485.4" y="337.6" width="8.7" height="33" fill="#8c8c8c" stroke="#fff" stroke-width="0.7" opacity="0.95"/>
<rect x="485.9" y="283.3" width="7.7" height="7" fill="#fff" rx="2.6" opacity="0.95"/>
<rect x="486.65" y="284.05" width="6.2" height="5.5" fill="#000" rx="2.2"/>
<rect x="486.6" y="292.4" width="6.3" height="23.8" fill="#fff" opacity="0.96"/>
<path d="M487.1,294.46h2.14M487.1,298.43h2.14M487.1,302.4h2.14M487.1,306.36h2.14M487.1,310.33h2.14M487.1,314.3h2.14M490.25,294.46h2.14M490.25,298.43h2.14M490.25,302.4h2.14M490.25,306.36h2.14M490.25,310.33h2.14M490.25,314.3h2.14" stroke="#000" stroke-width="2.7" opacity=".92"/>
<rect x="485.7" y="317.9" width="8.1" height="9.2" fill="#fff" rx="2.8" opacity="0.95"/>
<rect x="486.45" y="318.65" width="6.6" height="7.7" fill="#000" rx="2.4"/>
<rect x="485.9" y="338.1" width="7.7" height="6.2" fill="#fff" rx="2.6" opacity="0.95"/>
<rect x="486.65" y="338.85" width="6.2" height="4.7" fill="#000" rx="2.2"/>
<rect x="486.6" y="346.4" width="6.3" height="23.2" fill="#fff" opacity="0.96"/>
<path d="M487.1,348.41h2.14M487.1,352.28h2.14M487.1,356.14h2.14M487.1,360.01h2.14M487.1,363.88h2.14M487.1,367.74h2.14M490.25,348.41h2.14M490.25,352.28h2.14M490.25,356.14h2.14M490.25,360.01h2.14M490.25,363.88h2.14M490.25,367.74h2.14" stroke="#000" stroke-width="2.63" opacity=".92"/>
<rect x="496.9" y="282.4" width="14.3" height="45.2" fill="#8c8c8c" stroke="#fff" stroke-width="0.7" opacity="0.95"/>
<rect x="496.9" y="337.6" width="14.3" height="33" fill="#8c8c8c" stroke="#fff" stroke-width="0.7" opacity="0.95"/>
<rect x="497.4" y="283.3" width="13.3" height="7" fill="#fff" rx="2.6" opacity="0.95"/>
<rect x="498.15" y="284.05" width="11.8" height="5.5" fill="#000" rx="2.2"/>
<rect x="498.1" y="292.4" width="11.9" height="23.8" fill="#fff" opacity="0.96"/>
<path d="M498.54,294.46h1.87M498.54,298.43h1.87M498.54,302.4h1.87M498.54,306.36h1.87M498.54,310.33h1.87M498.54,314.3h1.87M501.29,294.46h1.87M501.29,298.43h1.87M501.29,302.4h1.87M501.29,306.36h1.87M501.29,310.33h1.87M501.29,314.3h1.87M504.94,294.46h1.87M504.94,298.43h1.87M504.94,302.4h1.87M504.94,306.36h1.87M504.94,310.33h1.87M504.94,314.3h1.87M507.69,294.46h1.87M507.69,298.43h1.87M507.69,302.4h1.87M507.69,306.36h1.87M507.69,310.33h1.87M507.69,314.3h1.87" stroke="#000" stroke-width="2.7" opacity=".92"/>
<rect x="497.2" y="317.9" width="13.7" height="9.2" fill="#fff" rx="2.8" opacity="0.95"/>
<rect x="497.95" y="318.65" width="12.2" height="7.7" fill="#000" rx="2.4"/>
<rect x="497.4" y="338.1" width="13.3" height="6.2" fill="#fff" rx="2.6" opacity="0.95"/>
<rect x="498.15" y="338.85" width="11.8" height="4.7" fill="#000" rx="2.2"/>
<rect x="498.1" y="346.4" width="11.9" height="23.2" fill="#fff" opacity="0.96"/>
<path d="M498.54,348.41h1.87M498.54,352.28h1.87M498.54,356.14h1.87M498.54,360.01h1.87M498.54,363.88h1.87M498.54,367.74h1.87M501.29,348.41h1.87M501.29,352.28h1.87M501.29,356.14h1.87M501.29,360.01h1.87M501.29,363.88h1.87M501.29,367.74h1.87M504.94,348.41h1.87M504.94,352.28h1.87M504.94,356.14h1.87M504.94,360.01h1.87M504.94,363.88h1.87M504.94,367.74h1.87M507.69,348.41h1.87M507.69,352.28h1.87M507.69,356.14h1.87M507.69,360.01h1.87M507.69,363.88h1.87M507.69,367.74h1.87" stroke="#000" stroke-width="2.63" opacity=".92"/>
<rect x="514" y="282.4" width="8.9" height="45.2" fill="#8c8c8c" stroke="#fff" stroke-width="0.7" opacity="0.95"/>
<rect x="514" y="337.6" width="8.9" height="33" fill="#8c8c8c" stroke="#fff" stroke-width="0.7" opacity="0.95"/>
<rect x="514.5" y="283.3" width="7.9" height="7" fill="#fff" rx="2.6" opacity="0.95"/>
<rect x="515.25" y="284.05" width="6.4" height="5.5" fill="#000" rx="2.2"/>
<rect x="515.2" y="292.4" width="6.5" height="23.8" fill="#fff" opacity="0.96"/>
<path d="M515.72,294.46h2.21M515.72,298.43h2.21M515.72,302.4h2.21M515.72,306.36h2.21M515.72,310.33h2.21M515.72,314.3h2.21M518.97,294.46h2.21M518.97,298.43h2.21M518.97,302.4h2.21M518.97,306.36h2.21M518.97,310.33h2.21M518.97,314.3h2.21" stroke="#000" stroke-width="2.7" opacity=".92"/>
<rect x="514.3" y="317.9" width="8.3" height="9.2" fill="#fff" rx="2.8" opacity="0.95"/>
<rect x="515.05" y="318.65" width="6.8" height="7.7" fill="#000" rx="2.4"/>
<rect x="514.5" y="338.1" width="7.9" height="6.2" fill="#fff" rx="2.6" opacity="0.95"/>
<rect x="515.25" y="338.85" width="6.4" height="4.7" fill="#000" rx="2.2"/>
<rect x="515.2" y="346.4" width="6.5" height="23.2" fill="#fff" opacity="0.96"/>
<path d="M515.72,348.41h2.21M515.72,352.28h2.21M515.72,356.14h2.21M515.72,360.01h2.21M515.72,363.88h2.21M515.72,367.74h2.21M518.97,348.41h2.21M518.97,352.28h2.21M518.97,356.14h2.21M518.97,360.01h2.21M518.97,363.88h2.21M518.97,367.74h2.21" stroke="#000" stroke-width="2.63" opacity=".92"/>
<rect x="483.9" y="328.2" width="39.8" height="8.4" fill="#666"/>
<path d="M483.9,328.6H523.7M483.9,331.6H523.7M483.9,334.6H523.7" stroke="#fff" stroke-width="0.6" fill="none" opacity="0.8"/>
<path d="M502.8,328.4V336.4M504.8,328.4V336.4" stroke="#fff" stroke-width="0.7" fill="none"/>
<path d="M500.8,331.5h6M503.8,328v3" stroke="#fff" stroke-width="0.7" fill="none"/>
<rect x="482.7" y="371.4" width="42.2" height="3.4" fill="#ededed"/>
<rect x="483.9" y="376.6" width="39.8" height="3.4" fill="#bbb"/>
<path d="M483.9,378.3H523.7" stroke="#000" stroke-width="2.2" stroke-dasharray=".7 .8" opacity=".75"/>
<rect x="502.8" y="376.4" width="2" height="3.8" fill="#fff"/>
<rect x="483" y="380.4" width="41.6" height="30.2" fill="#cfcfcf"/>
<path d="M483,381H524.6M483,383.4H524.6" stroke="#fff" stroke-width="0.8" fill="none"/>
<rect x="484.9" y="385" width="8" height="23.8" fill="#000"/>
<rect x="495.2" y="385" width="7" height="23.8" fill="#000"/>
<rect x="505.4" y="385" width="7.3" height="23.8" fill="#000"/>
<rect x="515.3" y="385" width="7.3" height="23.8" fill="#000"/>
<rect x="503.3" y="376" width="1" height="34" fill="#fff"/>
<rect x="39" y="191" width="78.8" height="71" fill="#000"/>
<path d="M45,192.3H111.8" stroke="#fff" stroke-width="0.7" fill="none" opacity="0.95"/>
<path d="M45.3,193.9H111.5" stroke="#fff" stroke-width="0.7" fill="none" opacity="0.95"/>
<path d="M45.8,195.5H111" stroke="#fff" stroke-width="0.7" fill="none" opacity="0.95"/>
<path d="M47.2,198.8H109.6" stroke="#fff" stroke-width="0.7" fill="none" opacity="0.95"/>
<path d="M46.4,201.2H110.4" stroke="#fff" stroke-width="0.7" fill="none" opacity="0.95"/>
<path d="M46.8,207.7H110" stroke="#fff" stroke-width="0.7" fill="none" opacity="0.95"/>
<path d="M45.6,209.3H111.2" stroke="#fff" stroke-width="0.7" fill="none" opacity="0.95"/>
<path d="M45,211.8H111.8" stroke="#fff" stroke-width="0.7" fill="none" opacity="0.95"/>
<path d="M45,192.3L45.8,195.5L47.2,198.8Q45.4,203 46.8,207.7L45,211.8L40,215" stroke="#fff" stroke-width="0.7" fill="none"/>
<path d="M111.8,192.3L111,195.5L109.6,198.8Q111.4,203 110,207.7L111.8,211.8L116.8,215" stroke="#fff" stroke-width="0.7" fill="none"/>
<path d="M39.6,215H117.2M39.6,216.6H117.2" stroke="#fff" stroke-width="0.85" fill="none"/>
<path d="M41.4,219.9H115.4" stroke="#fff" stroke-width="0.7" fill="none"/>
<path d="M42.8,222.3H114" stroke="#fff" stroke-width="0.7" fill="none"/>
<path d="M43.6,223.9H113.2" stroke="#fff" stroke-width="0.6" fill="none" opacity="0.9"/>
<path d="M39.6,215v1.6l1.8,3.3l1.4,2.4l2.2,2.4M117.2,215v1.6l-1.8,3.3l-1.4,2.4l-2.2,2.4" stroke="#fff" stroke-width="0.7" fill="none"/>
<path d="M45.6,225H111.2" stroke="#fff" stroke-width="0.6" fill="none" opacity="0.9"/>
<path d="M45.6,224.7V241M111.2,224.7V241" stroke="#fff" stroke-width="0.8" fill="none"/>
<path d="M45.6,234.5H111.2M45.6,236.1H111.2M45.6,237.7H111.2M45.6,239.3H111.2M45.6,241H111.2" stroke="#fff" stroke-width="0.65" fill="none" opacity="0.95"/>
<path d="M55.6,242.6q-1,5 -3.6,7l-1.6,5l1,6M44.6,242.6q1,7 3,10l0.6,9" stroke="#fff" stroke-width="1" fill="none" opacity="0.95"/>
<path d="M48.6,243.6L70.4,243.4L65.4,246.2L44,249.6L48,252z" stroke="#fff" stroke-width="0.8" fill="#555"/>
<path d="M48,246L68.4,244.6M47,248.6L65.4,246.2" stroke="#fff" stroke-width="0.7" fill="none" opacity="0.9"/>
<path d="M52.5,251q-3,1 -4.5,4q1,4 3,5M51,256l-0.6,7M53.4,247l-2,13" stroke="#fff" stroke-width="0.9" fill="none" opacity="0.95"/>
<circle cx="50" cy="252" r="1.7" fill="none" stroke="#fff" stroke-width=".6"/>
<rect x="47.4" y="262" width="5.2" height="4.4" fill="none" stroke="#fff" stroke-width="0.6" opacity="0.9"/>
<path d="M101.2,242.6q1,5 3.6,7l1.6,5l-1,6M112.2,242.6q-1,7 -3,10l-0.6,9" stroke="#fff" stroke-width="1" fill="none" opacity="0.95"/>
<path d="M108.2,243.6L86.4,243.4L91.4,246.2L112.8,249.6L108.8,252z" stroke="#fff" stroke-width="0.8" fill="#555"/>
<path d="M108.8,246L88.4,244.6M109.8,248.6L91.4,246.2" stroke="#fff" stroke-width="0.7" fill="none" opacity="0.9"/>
<path d="M104.3,251q3,1 4.5,4q-1,4 -3,5M105.8,256l0.6,7M103.4,247l2,13" stroke="#fff" stroke-width="0.9" fill="none" opacity="0.95"/>
<circle cx="106.8" cy="252" r="1.7" fill="none" stroke="#fff" stroke-width=".6"/>
<rect x="104.2" y="262" width="5.2" height="4.4" fill="none" stroke="#fff" stroke-width="0.6" opacity="0.9"/>
<path d="M56.2,260.4L57.4,249.4Q57.8,247.6 59.8,247.4H97Q99,247.6 99.4,249.4L100.6,260.4z" stroke="#fff" stroke-width="0.8" fill="#000"/>
<text x="78.2" y="258.8" font-family="Liberation Sans, sans-serif" font-weight="bold" font-size="9.8" fill="#fff" text-anchor="middle" textLength="23.8" lengthAdjust="spacingAndGlyphs">BANK</text>
<path d="M56.8,261.4H100L96.4,265.4H60.4z" stroke="#fff" stroke-width="0.7" fill="#8a8a8a"/>
<path d="M58.8,263.2H98" stroke="#fff" stroke-width="0.5" fill="none" opacity="0.8"/>
<rect x="46.4" y="266" width="64" height="108" fill="#000"/>
<path d="M46.4,302H110.4M46.4,306.73H110.4M46.4,311.47H110.4M46.4,316.2H110.4M46.4,320.93H110.4M46.4,325.67H110.4M46.4,330.4H110.4M46.4,335.13H110.4M46.4,339.87H110.4M46.4,344.6H110.4M46.4,349.33H110.4M46.4,354.07H110.4M46.4,358.8H110.4M46.4,363.53H110.4M46.4,368.27H110.4M46.4,373H110.4" stroke="#fff" stroke-width="0.6" fill="none" opacity="0.55"/>
<path d="M54.8,302V306.73M63.2,302V306.73M71.6,302V306.73M80,302V306.73M88.4,302V306.73M96.8,302V306.73M105.2,302V306.73M50.6,306.73V311.47M59,306.73V311.47M67.4,306.73V311.47M75.8,306.73V311.47M84.2,306.73V311.47M92.6,306.73V311.47M101,306.73V311.47M109.4,306.73V311.47M54.8,311.47V316.2M63.2,311.47V316.2M71.6,311.47V316.2M80,311.47V316.2M88.4,311.47V316.2M96.8,311.47V316.2M105.2,311.47V316.2M50.6,316.2V320.93M59,316.2V320.93M67.4,316.2V320.93M75.8,316.2V320.93M84.2,316.2V320.93M92.6,316.2V320.93M101,316.2V320.93M109.4,316.2V320.93M54.8,320.93V325.67M63.2,320.93V325.67M71.6,320.93V325.67M80,320.93V325.67M88.4,320.93V325.67M96.8,320.93V325.67M105.2,320.93V325.67M50.6,325.67V330.4M59,325.67V330.4M67.4,325.67V330.4M75.8,325.67V330.4M84.2,325.67V330.4M92.6,325.67V330.4M101,325.67V330.4M109.4,325.67V330.4M54.8,330.4V335.13M63.2,330.4V335.13M71.6,330.4V335.13M80,330.4V335.13M88.4,330.4V335.13M96.8,330.4V335.13M105.2,330.4V335.13M50.6,335.13V339.87M59,335.13V339.87M67.4,335.13V339.87M75.8,335.13V339.87M84.2,335.13V339.87M92.6,335.13V339.87M101,335.13V339.87M109.4,335.13V339.87M54.8,339.87V344.6M63.2,339.87V344.6M71.6,339.87V344.6M80,339.87V344.6M88.4,339.87V344.6M96.8,339.87V344.6M105.2,339.87V344.6M50.6,344.6V349.33M59,344.6V349.33M67.4,344.6V349.33M75.8,344.6V349.33M84.2,344.6V349.33M92.6,344.6V349.33M101,344.6V349.33M109.4,344.6V349.33M54.8,349.33V354.07M63.2,349.33V354.07M71.6,349.33V354.07M80,349.33V354.07M88.4,349.33V354.07M96.8,349.33V354.07M105.2,349.33V354.07M50.6,354.07V358.8M59,354.07V358.8M67.4,354.07V358.8M75.8,354.07V358.8M84.2,354.07V358.8M92.6,354.07V358.8M101,354.07V358.8M109.4,354.07V358.8M54.8,358.8V363.53M63.2,358.8V363.53M71.6,358.8V363.53M80,358.8V363.53M88.4,358.8V363.53M96.8,358.8V363.53M105.2,358.8V363.53M50.6,363.53V368.27M59,363.53V368.27M67.4,363.53V368.27M75.8,363.53V368.27M84.2,363.53V368.27M92.6,363.53V368.27M101,363.53V368.27M109.4,363.53V368.27M54.8,368.27V373M63.2,368.27V373M71.6,368.27V373M80,368.27V373M88.4,368.27V373M96.8,368.27V373M105.2,368.27V373" stroke="#fff" stroke-width="0.6" fill="none" opacity="0.55"/>
<path d="M46.4,267H62.8M46.4,272H62.8M46.4,277H62.8M46.4,282H62.8M46.4,287H62.8M46.4,292H62.8M46.4,297H62.8M46.4,302H62.8" stroke="#fff" stroke-width="0.6" fill="none" opacity="0.4"/>
<path d="M54.8,267V272M50.6,272V277M59,272V277M54.8,277V282M50.6,282V287M59,282V287M54.8,287V292M50.6,292V297M59,292V297M54.8,297V302" stroke="#fff" stroke-width="0.6" fill="none" opacity="0.4"/>
<path d="M94,267H110.4M94,272H110.4M94,277H110.4M94,282H110.4M94,287H110.4M94,292H110.4M94,297H110.4M94,302H110.4" stroke="#fff" stroke-width="0.6" fill="none" opacity="0.4"/>
<path d="M102.4,267V272M98.2,272V277M106.6,272V277M102.4,277V282M98.2,282V287M106.6,282V287M102.4,287V292M98.2,292V297M106.6,292V297M102.4,297V302" stroke="#fff" stroke-width="0.6" fill="none" opacity="0.4"/>
<path d="M46.4,266V374M110.4,266V374" stroke="#fff" stroke-width="0.8" fill="none"/>
<rect x="49.8" y="267" width="12.6" height="34.4" fill="#f6f6f6"/>
<path d="M52.7,267.4V301M55.5,267.4V301M58.5,267.4V301" stroke="#444" stroke-width="0.6" fill="none" opacity="0.6"/>
<rect x="48.7" y="262.4" width="14.8" height="4.2" fill="#000" stroke="#fff" stroke-width="0.6" opacity="0.9"/>
<path d="M49.1,264.6H63.1" stroke="#fff" stroke-width="0.5" fill="none" opacity="0.8"/>
<rect x="94.4" y="267" width="12.6" height="34.4" fill="#f6f6f6"/>
<path d="M97.3,267.4V301M100.1,267.4V301M103.1,267.4V301" stroke="#444" stroke-width="0.6" fill="none" opacity="0.6"/>
<rect x="93.3" y="262.4" width="14.8" height="4.2" fill="#000" stroke="#fff" stroke-width="0.6" opacity="0.9"/>
<path d="M93.7,264.6H107.7" stroke="#fff" stroke-width="0.5" fill="none" opacity="0.8"/>
<rect x="65.8" y="266" width="25.2" height="108" fill="#000"/>
<path d="M65.8,266V372M91,266V372M64,266V372M92.8,266V372" stroke="#fff" stroke-width="0.5" fill="none" opacity="0.8"/>
<rect x="68.2" y="268" width="20.2" height="12" fill="#d8d8d8"/>
<rect x="68.2" y="268" width="20.2" height="12" fill="none" stroke="#fff" stroke-width="0.8"/>
<path d="M69.8,271h3.2M69.8,276.2h3.2M74.35,271h3.2M74.35,276.2h3.2M78.9,271h3.2M78.9,276.2h3.2M83.45,271h3.2M83.45,276.2h3.2" stroke="#333" stroke-width="3.4" opacity=".75"/>
<rect x="69.8" y="282.4" width="17" height="33" fill="#4a4a4a"/>
<rect x="69.8" y="282.4" width="17" height="33" fill="none" stroke="#fff" stroke-width="0.8"/>
<rect x="71.3" y="283.1" width="6.6" height="7" fill="#fff" rx="2.8" opacity="0.95"/>
<rect x="72.05" y="283.85" width="5.1" height="5.5" fill="#000" rx="2.4"/>
<rect x="78.7" y="283.1" width="6.6" height="7" fill="#fff" rx="2.8" opacity="0.95"/>
<rect x="79.45" y="283.85" width="5.1" height="5.5" fill="#000" rx="2.4"/>
<rect x="71.6" y="291.4" width="13.4" height="22.4" fill="#fff" opacity="0.96"/>
<path d="M72.01,293.73h2.31M72.01,298.21h2.31M72.01,302.69h2.31M72.01,307.17h2.31M72.01,311.65h2.31M75.13,293.73h2.31M75.13,298.21h2.31M75.13,302.69h2.31M75.13,307.17h2.31M75.13,311.65h2.31M79.16,293.73h2.31M79.16,298.21h2.31M79.16,302.69h2.31M79.16,307.17h2.31M79.16,311.65h2.31M82.28,293.73h2.31M82.28,298.21h2.31M82.28,302.69h2.31M82.28,307.17h2.31M82.28,311.65h2.31" stroke="#000" stroke-width="3.4" opacity=".92"/>
<rect x="77.9" y="291.4" width="1" height="22.4" fill="#fff"/>
<rect x="67.8" y="316.8" width="21" height="6.2" fill="#9c9c9c"/>
<path d="M68.8,320H88" stroke="#000" stroke-width="3" stroke-dasharray=".7 .7" opacity=".6"/>
<path d="M67.4,316.6H89.2M67.4,323.4H89.2" stroke="#fff" stroke-width="0.7" fill="none"/>
<rect x="67.2" y="327.4" width="22.2" height="7.8" fill="#f2f2f2"/>
<path d="M69,333h3M73.4,333h4M81,333h2.6M84.8,333h3" stroke="#000" stroke-width="1.5" opacity=".85"/>
<rect x="77.8" y="328.4" width="1.2" height="2.6" fill="#000"/>
<rect x="69.8" y="336.8" width="17" height="32.6" fill="#4a4a4a"/>
<rect x="69.8" y="336.8" width="17" height="32.6" fill="none" stroke="#fff" stroke-width="0.8"/>
<rect x="71.3" y="337.9" width="6.6" height="6.6" fill="#fff" rx="2.8" opacity="0.95"/>
<rect x="72.05" y="338.65" width="5.1" height="5.1" fill="#000" rx="2.4"/>
<rect x="78.7" y="337.9" width="6.6" height="6.6" fill="#fff" rx="2.8" opacity="0.95"/>
<rect x="79.45" y="338.65" width="5.1" height="5.1" fill="#000" rx="2.4"/>
<rect x="71.6" y="346" width="13.4" height="22.4" fill="#fff" opacity="0.96"/>
<path d="M72.01,348.33h2.31M72.01,352.81h2.31M72.01,357.29h2.31M72.01,361.77h2.31M72.01,366.25h2.31M75.13,348.33h2.31M75.13,352.81h2.31M75.13,357.29h2.31M75.13,361.77h2.31M75.13,366.25h2.31M79.16,348.33h2.31M79.16,352.81h2.31M79.16,357.29h2.31M79.16,361.77h2.31M79.16,366.25h2.31M82.28,348.33h2.31M82.28,352.81h2.31M82.28,357.29h2.31M82.28,361.77h2.31M82.28,366.25h2.31" stroke="#000" stroke-width="3.4" opacity=".92"/>
<rect x="77.9" y="346" width="1" height="22.4" fill="#fff"/>
<circle cx="67" cy="359.6" r="2" fill="#000" stroke="#fff" stroke-width=".8"/>
<path d="M67,340V357.6" stroke="#fff" stroke-width="0.5" fill="none" opacity="0.7"/>
<circle cx="89.8" cy="359.6" r="2" fill="#000" stroke="#fff" stroke-width=".8"/>
<path d="M89.8,340V357.6" stroke="#fff" stroke-width="0.5" fill="none" opacity="0.7"/>
<rect x="45.8" y="373.6" width="15" height="8" fill="#000" stroke="#fff" stroke-width="0.8"/>
<rect x="96" y="373.6" width="15" height="8" fill="#000" stroke="#fff" stroke-width="0.8"/>
<path d="M61,380.8q-2.6,-.6 -2.2,-3.4q.6,-3.2 4.4,-3.6H93.6q3.8,.4 4.4,3.6q.4,2.8 -2.2,3.4" stroke="#fff" stroke-width="0.8" fill="none"/>
<rect x="63.8" y="375.6" width="29.2" height="5.8" fill="#000" stroke="#fff" stroke-width="0.7"/>
<rect x="69.2" y="370.8" width="18.4" height="4.8" fill="#000" stroke="#fff" stroke-width="0.7"/>
<path d="M63.8,378.4H93" stroke="#fff" stroke-width="0.5" fill="none" opacity="0.8"/>
<path d="M69,375.6V381.4M87.8,375.6V381.4" stroke="#fff" stroke-width="0.5" fill="none" opacity="0.8"/>
<rect x="665.4" y="191" width="78.8" height="71" fill="#000"/>
<path d="M671.4,192.3H738.2" stroke="#fff" stroke-width="0.7" fill="none" opacity="0.95"/>
<path d="M671.7,193.9H737.9" stroke="#fff" stroke-width="0.7" fill="none" opacity="0.95"/>
<path d="M672.2,195.5H737.4" stroke="#fff" stroke-width="0.7" fill="none" opacity="0.95"/>
<path d="M673.6,198.8H736" stroke="#fff" stroke-width="0.7" fill="none" opacity="0.95"/>
<path d="M672.8,201.2H736.8" stroke="#fff" stroke-width="0.7" fill="none" opacity="0.95"/>
<path d="M673.2,207.7H736.4" stroke="#fff" stroke-width="0.7" fill="none" opacity="0.95"/>
<path d="M672,209.3H737.6" stroke="#fff" stroke-width="0.7" fill="none" opacity="0.95"/>
<path d="M671.4,211.8H738.2" stroke="#fff" stroke-width="0.7" fill="none" opacity="0.95"/>
<path d="M671.4,192.3L672.2,195.5L673.6,198.8Q671.8,203 673.2,207.7L671.4,211.8L666.4,215" stroke="#fff" stroke-width="0.7" fill="none"/>
<path d="M738.2,192.3L737.4,195.5L736,198.8Q737.8,203 736.4,207.7L738.2,211.8L743.2,215" stroke="#fff" stroke-width="0.7" fill="none"/>
<path d="M666,215H743.6M666,216.6H743.6" stroke="#fff" stroke-width="0.85" fill="none"/>
<path d="M667.8,219.9H741.8" stroke="#fff" stroke-width="0.7" fill="none"/>
<path d="M669.2,222.3H740.4" stroke="#fff" stroke-width="0.7" fill="none"/>
<path d="M670,223.9H739.6" stroke="#fff" stroke-width="0.6" fill="none" opacity="0.9"/>
<path d="M666,215v1.6l1.8,3.3l1.4,2.4l2.2,2.4M743.6,215v1.6l-1.8,3.3l-1.4,2.4l-2.2,2.4" stroke="#fff" stroke-width="0.7" fill="none"/>
<path d="M672,225H737.6" stroke="#fff" stroke-width="0.6" fill="none" opacity="0.9"/>
<path d="M672,224.7V241M737.6,224.7V241" stroke="#fff" stroke-width="0.8" fill="none"/>
<path d="M672,234.5H737.6M672,236.1H737.6M672,237.7H737.6M672,239.3H737.6M672,241H737.6" stroke="#fff" stroke-width="0.65" fill="none" opacity="0.95"/>
<path d="M682,242.6q-1,5 -3.6,7l-1.6,5l1,6M671,242.6q1,7 3,10l0.6,9" stroke="#fff" stroke-width="1" fill="none" opacity="0.95"/>
<path d="M675,243.6L696.8,243.4L691.8,246.2L670.4,249.6L674.4,252z" stroke="#fff" stroke-width="0.8" fill="#555"/>
<path d="M674.4,246L694.8,244.6M673.4,248.6L691.8,246.2" stroke="#fff" stroke-width="0.7" fill="none" opacity="0.9"/>
<path d="M678.9,251q-3,1 -4.5,4q1,4 3,5M677.4,256l-0.6,7M679.8,247l-2,13" stroke="#fff" stroke-width="0.9" fill="none" opacity="0.95"/>
<circle cx="676.4" cy="252" r="1.7" fill="none" stroke="#fff" stroke-width=".6"/>
<rect x="673.8" y="262" width="5.2" height="4.4" fill="none" stroke="#fff" stroke-width="0.6" opacity="0.9"/>
<path d="M727.6,242.6q1,5 3.6,7l1.6,5l-1,6M738.6,242.6q-1,7 -3,10l-0.6,9" stroke="#fff" stroke-width="1" fill="none" opacity="0.95"/>
<path d="M734.6,243.6L712.8,243.4L717.8,246.2L739.2,249.6L735.2,252z" stroke="#fff" stroke-width="0.8" fill="#555"/>
<path d="M735.2,246L714.8,244.6M736.2,248.6L717.8,246.2" stroke="#fff" stroke-width="0.7" fill="none" opacity="0.9"/>
<path d="M730.7,251q3,1 4.5,4q-1,4 -3,5M732.2,256l0.6,7M729.8,247l2,13" stroke="#fff" stroke-width="0.9" fill="none" opacity="0.95"/>
<circle cx="733.2" cy="252" r="1.7" fill="none" stroke="#fff" stroke-width=".6"/>
<rect x="730.6" y="262" width="5.2" height="4.4" fill="none" stroke="#fff" stroke-width="0.6" opacity="0.9"/>
<path d="M682.6,260.4L683.8,249.4Q684.2,247.6 686.2,247.4H723.4Q725.4,247.6 725.8,249.4L727,260.4z" stroke="#fff" stroke-width="0.8" fill="#000"/>
<text x="704.6" y="258.8" font-family="Liberation Sans, sans-serif" font-weight="bold" font-size="9.8" fill="#fff" text-anchor="middle" textLength="23.8" lengthAdjust="spacingAndGlyphs">BANK</text>
<path d="M683.2,261.4H726.4L722.8,265.4H686.8z" stroke="#fff" stroke-width="0.7" fill="#8a8a8a"/>
<path d="M685.2,263.2H724.4" stroke="#fff" stroke-width="0.5" fill="none" opacity="0.8"/>
<rect x="672.8" y="266" width="64" height="108" fill="#000"/>
<path d="M672.8,302H736.8M672.8,306.73H736.8M672.8,311.47H736.8M672.8,316.2H736.8M672.8,320.93H736.8M672.8,325.67H736.8M672.8,330.4H736.8M672.8,335.13H736.8M672.8,339.87H736.8M672.8,344.6H736.8M672.8,349.33H736.8M672.8,354.07H736.8M672.8,358.8H736.8M672.8,363.53H736.8M672.8,368.27H736.8M672.8,373H736.8" stroke="#fff" stroke-width="0.6" fill="none" opacity="0.55"/>
<path d="M681.2,302V306.73M689.6,302V306.73M698,302V306.73M706.4,302V306.73M714.8,302V306.73M723.2,302V306.73M731.6,302V306.73M677,306.73V311.47M685.4,306.73V311.47M693.8,306.73V311.47M702.2,306.73V311.47M710.6,306.73V311.47M719,306.73V311.47M727.4,306.73V311.47M735.8,306.73V311.47M681.2,311.47V316.2M689.6,311.47V316.2M698,311.47V316.2M706.4,311.47V316.2M714.8,311.47V316.2M723.2,311.47V316.2M731.6,311.47V316.2M677,316.2V320.93M685.4,316.2V320.93M693.8,316.2V320.93M702.2,316.2V320.93M710.6,316.2V320.93M719,316.2V320.93M727.4,316.2V320.93M735.8,316.2V320.93M681.2,320.93V325.67M689.6,320.93V325.67M698,320.93V325.67M706.4,320.93V325.67M714.8,320.93V325.67M723.2,320.93V325.67M731.6,320.93V325.67M677,325.67V330.4M685.4,325.67V330.4M693.8,325.67V330.4M702.2,325.67V330.4M710.6,325.67V330.4M719,325.67V330.4M727.4,325.67V330.4M735.8,325.67V330.4M681.2,330.4V335.13M689.6,330.4V335.13M698,330.4V335.13M706.4,330.4V335.13M714.8,330.4V335.13M723.2,330.4V335.13M731.6,330.4V335.13M677,335.13V339.87M685.4,335.13V339.87M693.8,335.13V339.87M702.2,335.13V339.87M710.6,335.13V339.87M719,335.13V339.87M727.4,335.13V339.87M735.8,335.13V339.87M681.2,339.87V344.6M689.6,339.87V344.6M698,339.87V344.6M706.4,339.87V344.6M714.8,339.87V344.6M723.2,339.87V344.6M731.6,339.87V344.6M677,344.6V349.33M685.4,344.6V349.33M693.8,344.6V349.33M702.2,344.6V349.33M710.6,344.6V349.33M719,344.6V349.33M727.4,344.6V349.33M735.8,344.6V349.33M681.2,349.33V354.07M689.6,349.33V354.07M698,349.33V354.07M706.4,349.33V354.07M714.8,349.33V354.07M723.2,349.33V354.07M731.6,349.33V354.07M677,354.07V358.8M685.4,354.07V358.8M693.8,354.07V358.8M702.2,354.07V358.8M710.6,354.07V358.8M719,354.07V358.8M727.4,354.07V358.8M735.8,354.07V358.8M681.2,358.8V363.53M689.6,358.8V363.53M698,358.8V363.53M706.4,358.8V363.53M714.8,358.8V363.53M723.2,358.8V363.53M731.6,358.8V363.53M677,363.53V368.27M685.4,363.53V368.27M693.8,363.53V368.27M702.2,363.53V368.27M710.6,363.53V368.27M719,363.53V368.27M727.4,363.53V368.27M735.8,363.53V368.27M681.2,368.27V373M689.6,368.27V373M698,368.27V373M706.4,368.27V373M714.8,368.27V373M723.2,368.27V373M731.6,368.27V373" stroke="#fff" stroke-width="0.6" fill="none" opacity="0.55"/>
<path d="M672.8,267H689.2M672.8,272H689.2M672.8,277H689.2M672.8,282H689.2M672.8,287H689.2M672.8,292H689.2M672.8,297H689.2M672.8,302H689.2" stroke="#fff" stroke-width="0.6" fill="none" opacity="0.4"/>
<path d="M681.2,267V272M677,272V277M685.4,272V277M681.2,277V282M677,282V287M685.4,282V287M681.2,287V292M677,292V297M685.4,292V297M681.2,297V302" stroke="#fff" stroke-width="0.6" fill="none" opacity="0.4"/>
<path d="M720.4,267H736.8M720.4,272H736.8M720.4,277H736.8M720.4,282H736.8M720.4,287H736.8M720.4,292H736.8M720.4,297H736.8M720.4,302H736.8" stroke="#fff" stroke-width="0.6" fill="none" opacity="0.4"/>
<path d="M728.8,267V272M724.6,272V277M733,272V277M728.8,277V282M724.6,282V287M733,282V287M728.8,287V292M724.6,292V297M733,292V297M728.8,297V302" stroke="#fff" stroke-width="0.6" fill="none" opacity="0.4"/>
<path d="M672.8,266V374M736.8,266V374" stroke="#fff" stroke-width="0.8" fill="none"/>
<rect x="676.2" y="267" width="12.6" height="34.4" fill="#f6f6f6"/>
<path d="M679.1,267.4V301M681.9,267.4V301M684.9,267.4V301" stroke="#444" stroke-width="0.6" fill="none" opacity="0.6"/>
<rect x="675.1" y="262.4" width="14.8" height="4.2" fill="#000" stroke="#fff" stroke-width="0.6" opacity="0.9"/>
<path d="M675.5,264.6H689.5" stroke="#fff" stroke-width="0.5" fill="none" opacity="0.8"/>
<rect x="720.8" y="267" width="12.6" height="34.4" fill="#f6f6f6"/>
<path d="M723.7,267.4V301M726.5,267.4V301M729.5,267.4V301" stroke="#444" stroke-width="0.6" fill="none" opacity="0.6"/>
<rect x="719.7" y="262.4" width="14.8" height="4.2" fill="#000" stroke="#fff" stroke-width="0.6" opacity="0.9"/>
<path d="M720.1,264.6H734.1" stroke="#fff" stroke-width="0.5" fill="none" opacity="0.8"/>
<rect x="692.2" y="266" width="25.2" height="108" fill="#000"/>
<path d="M692.2,266V372M717.4,266V372M690.4,266V372M719.2,266V372" stroke="#fff" stroke-width="0.5" fill="none" opacity="0.8"/>
<rect x="694.6" y="268" width="20.2" height="12" fill="#d8d8d8"/>
<rect x="694.6" y="268" width="20.2" height="12" fill="none" stroke="#fff" stroke-width="0.8"/>
<path d="M696.2,271h3.2M696.2,276.2h3.2M700.75,271h3.2M700.75,276.2h3.2M705.3,271h3.2M705.3,276.2h3.2M709.85,271h3.2M709.85,276.2h3.2" stroke="#333" stroke-width="3.4" opacity=".75"/>
<rect x="696.2" y="282.4" width="17" height="33" fill="#4a4a4a"/>
<rect x="696.2" y="282.4" width="17" height="33" fill="none" stroke="#fff" stroke-width="0.8"/>
<rect x="697.7" y="283.1" width="6.6" height="7" fill="#fff" rx="2.8" opacity="0.95"/>
<rect x="698.45" y="283.85" width="5.1" height="5.5" fill="#000" rx="2.4"/>
<rect x="705.1" y="283.1" width="6.6" height="7" fill="#fff" rx="2.8" opacity="0.95"/>
<rect x="705.85" y="283.85" width="5.1" height="5.5" fill="#000" rx="2.4"/>
<rect x="698" y="291.4" width="13.4" height="22.4" fill="#fff" opacity="0.96"/>
<path d="M698.41,293.73h2.31M698.41,298.21h2.31M698.41,302.69h2.31M698.41,307.17h2.31M698.41,311.65h2.31M701.53,293.73h2.31M701.53,298.21h2.31M701.53,302.69h2.31M701.53,307.17h2.31M701.53,311.65h2.31M705.56,293.73h2.31M705.56,298.21h2.31M705.56,302.69h2.31M705.56,307.17h2.31M705.56,311.65h2.31M708.68,293.73h2.31M708.68,298.21h2.31M708.68,302.69h2.31M708.68,307.17h2.31M708.68,311.65h2.31" stroke="#000" stroke-width="3.4" opacity=".92"/>
<rect x="704.3" y="291.4" width="1" height="22.4" fill="#fff"/>
<rect x="694.2" y="316.8" width="21" height="6.2" fill="#9c9c9c"/>
<path d="M695.2,320H714.4" stroke="#000" stroke-width="3" stroke-dasharray=".7 .7" opacity=".6"/>
<path d="M693.8,316.6H715.6M693.8,323.4H715.6" stroke="#fff" stroke-width="0.7" fill="none"/>
<rect x="693.6" y="327.4" width="22.2" height="7.8" fill="#f2f2f2"/>
<path d="M695.4,333h3M699.8,333h4M707.4,333h2.6M711.2,333h3" stroke="#000" stroke-width="1.5" opacity=".85"/>
<rect x="704.2" y="328.4" width="1.2" height="2.6" fill="#000"/>
<rect x="696.2" y="336.8" width="17" height="32.6" fill="#4a4a4a"/>
<rect x="696.2" y="336.8" width="17" height="32.6" fill="none" stroke="#fff" stroke-width="0.8"/>
<rect x="697.7" y="337.9" width="6.6" height="6.6" fill="#fff" rx="2.8" opacity="0.95"/>
<rect x="698.45" y="338.65" width="5.1" height="5.1" fill="#000" rx="2.4"/>
<rect x="705.1" y="337.9" width="6.6" height="6.6" fill="#fff" rx="2.8" opacity="0.95"/>
<rect x="705.85" y="338.65" width="5.1" height="5.1" fill="#000" rx="2.4"/>
<rect x="698" y="346" width="13.4" height="22.4" fill="#fff" opacity="0.96"/>
<path d="M698.41,348.33h2.31M698.41,352.81h2.31M698.41,357.29h2.31M698.41,361.77h2.31M698.41,366.25h2.31M701.53,348.33h2.31M701.53,352.81h2.31M701.53,357.29h2.31M701.53,361.77h2.31M701.53,366.25h2.31M705.56,348.33h2.31M705.56,352.81h2.31M705.56,357.29h2.31M705.56,361.77h2.31M705.56,366.25h2.31M708.68,348.33h2.31M708.68,352.81h2.31M708.68,357.29h2.31M708.68,361.77h2.31M708.68,366.25h2.31" stroke="#000" stroke-width="3.4" opacity=".92"/>
<rect x="704.3" y="346" width="1" height="22.4" fill="#fff"/>
<circle cx="693.4" cy="359.6" r="2" fill="#000" stroke="#fff" stroke-width=".8"/>
<path d="M693.4,340V357.6" stroke="#fff" stroke-width="0.5" fill="none" opacity="0.7"/>
<circle cx="716.2" cy="359.6" r="2" fill="#000" stroke="#fff" stroke-width=".8"/>
<path d="M716.2,340V357.6" stroke="#fff" stroke-width="0.5" fill="none" opacity="0.7"/>
<rect x="672.2" y="373.6" width="15" height="8" fill="#000" stroke="#fff" stroke-width="0.8"/>
<rect x="722.4" y="373.6" width="15" height="8" fill="#000" stroke="#fff" stroke-width="0.8"/>
<path d="M687.4,380.8q-2.6,-.6 -2.2,-3.4q.6,-3.2 4.4,-3.6H720q3.8,.4 4.4,3.6q.4,2.8 -2.2,3.4" stroke="#fff" stroke-width="0.8" fill="none"/>
<rect x="690.2" y="375.6" width="29.2" height="5.8" fill="#000" stroke="#fff" stroke-width="0.7"/>
<rect x="695.6" y="370.8" width="18.4" height="4.8" fill="#000" stroke="#fff" stroke-width="0.7"/>
<path d="M690.2,378.4H719.4" stroke="#fff" stroke-width="0.5" fill="none" opacity="0.8"/>
<path d="M695.4,375.6V381.4M714.2,375.6V381.4" stroke="#fff" stroke-width="0.5" fill="none" opacity="0.8"/>
<rect x="41.6" y="381.2" width="188" height="9.8" fill="#000"/>
<path d="M41.6,381.8H229.6" stroke="#fff" stroke-width="1" fill="none"/>
<path d="M41.6,383.6H229.6" stroke="#fff" stroke-width="0.6" fill="none" opacity="0.8"/>
<path d="M41.6,385.6H229.6" stroke="#fff" stroke-width="0.9" fill="none"/>
<path d="M41.6,388H229.6" stroke="#fff" stroke-width="0.6" fill="none" opacity="0.8"/>
<path d="M41.6,390.2H229.6" stroke="#fff" stroke-width="1" fill="none"/>
<rect x="41.6" y="392.4" width="188" height="15.4" fill="url(#sp)"/>
<path d="M41.6,408.6H229.6" stroke="#fff" stroke-width="0.5" fill="none" opacity="0.6"/>
<rect x="70.4" y="393" width="17.2" height="13.2" fill="#b0b0b0"/>
<rect x="70.4" y="393" width="17.2" height="13.2" fill="none" stroke="#fff" stroke-width="0.7"/>
<path d="M72.55,393.4V405.8M74.7,393.4V405.8M76.85,393.4V405.8M79,393.4V405.8M81.15,393.4V405.8M83.3,393.4V405.8M85.45,393.4V405.8M70.8,395.2H87.2M70.8,397.4H87.2M70.8,399.6H87.2M70.8,401.8H87.2M70.8,404H87.2" stroke="#222" stroke-width=".55" opacity=".7"/>
<rect x="116.4" y="393" width="17.2" height="13.2" fill="#b0b0b0"/>
<rect x="116.4" y="393" width="17.2" height="13.2" fill="none" stroke="#fff" stroke-width="0.7"/>
<path d="M118.55,393.4V405.8M120.7,393.4V405.8M122.85,393.4V405.8M125,393.4V405.8M127.15,393.4V405.8M129.3,393.4V405.8M131.45,393.4V405.8M116.8,395.2H133.2M116.8,397.4H133.2M116.8,399.6H133.2M116.8,401.8H133.2M116.8,404H133.2" stroke="#222" stroke-width=".55" opacity=".7"/>
<rect x="157.8" y="393" width="17.2" height="13.2" fill="#b0b0b0"/>
<rect x="157.8" y="393" width="17.2" height="13.2" fill="none" stroke="#fff" stroke-width="0.7"/>
<path d="M159.95,393.4V405.8M162.1,393.4V405.8M164.25,393.4V405.8M166.4,393.4V405.8M168.55,393.4V405.8M170.7,393.4V405.8M172.85,393.4V405.8M158.2,395.2H174.6M158.2,397.4H174.6M158.2,399.6H174.6M158.2,401.8H174.6M158.2,404H174.6" stroke="#222" stroke-width=".55" opacity=".7"/>
<rect x="199.2" y="393" width="17.2" height="13.2" fill="#b0b0b0"/>
<rect x="199.2" y="393" width="17.2" height="13.2" fill="none" stroke="#fff" stroke-width="0.7"/>
<path d="M201.35,393.4V405.8M203.5,393.4V405.8M205.65,393.4V405.8M207.8,393.4V405.8M209.95,393.4V405.8M212.1,393.4V405.8M214.25,393.4V405.8M199.6,395.2H216M199.6,397.4H216M199.6,399.6H216M199.6,401.8H216M199.6,404H216" stroke="#222" stroke-width=".55" opacity=".7"/>
<rect x="329.4" y="381.2" width="124.4" height="9.8" fill="#000"/>
<path d="M329.4,381.8H453.8" stroke="#fff" stroke-width="1" fill="none"/>
<path d="M329.4,383.6H453.8" stroke="#fff" stroke-width="0.6" fill="none" opacity="0.8"/>
<path d="M329.4,385.6H453.8" stroke="#fff" stroke-width="0.9" fill="none"/>
<path d="M329.4,388H453.8" stroke="#fff" stroke-width="0.6" fill="none" opacity="0.8"/>
<path d="M329.4,390.2H453.8" stroke="#fff" stroke-width="1" fill="none"/>
<rect x="329.4" y="392.4" width="124.4" height="15.4" fill="url(#sp)"/>
<path d="M329.4,408.6H453.8" stroke="#fff" stroke-width="0.5" fill="none" opacity="0.6"/>
<rect x="342.4" y="393" width="17.2" height="13.2" fill="#b0b0b0"/>
<rect x="342.4" y="393" width="17.2" height="13.2" fill="none" stroke="#fff" stroke-width="0.7"/>
<path d="M344.55,393.4V405.8M346.7,393.4V405.8M348.85,393.4V405.8M351,393.4V405.8M353.15,393.4V405.8M355.3,393.4V405.8M357.45,393.4V405.8M342.8,395.2H359.2M342.8,397.4H359.2M342.8,399.6H359.2M342.8,401.8H359.2M342.8,404H359.2" stroke="#222" stroke-width=".55" opacity=".7"/>
<rect x="383" y="393" width="17.2" height="13.2" fill="#b0b0b0"/>
<rect x="383" y="393" width="17.2" height="13.2" fill="none" stroke="#fff" stroke-width="0.7"/>
<path d="M385.15,393.4V405.8M387.3,393.4V405.8M389.45,393.4V405.8M391.6,393.4V405.8M393.75,393.4V405.8M395.9,393.4V405.8M398.05,393.4V405.8M383.4,395.2H399.8M383.4,397.4H399.8M383.4,399.6H399.8M383.4,401.8H399.8M383.4,404H399.8" stroke="#222" stroke-width=".55" opacity=".7"/>
<rect x="423.6" y="393" width="17.2" height="13.2" fill="#b0b0b0"/>
<rect x="423.6" y="393" width="17.2" height="13.2" fill="none" stroke="#fff" stroke-width="0.7"/>
<path d="M425.75,393.4V405.8M427.9,393.4V405.8M430.05,393.4V405.8M432.2,393.4V405.8M434.35,393.4V405.8M436.5,393.4V405.8M438.65,393.4V405.8M424,395.2H440.4M424,397.4H440.4M424,399.6H440.4M424,401.8H440.4M424,404H440.4" stroke="#222" stroke-width=".55" opacity=".7"/>
<rect x="553.6" y="381.2" width="188" height="9.8" fill="#000"/>
<path d="M553.6,381.8H741.6" stroke="#fff" stroke-width="1" fill="none"/>
<path d="M553.6,383.6H741.6" stroke="#fff" stroke-width="0.6" fill="none" opacity="0.8"/>
<path d="M553.6,385.6H741.6" stroke="#fff" stroke-width="0.9" fill="none"/>
<path d="M553.6,388H741.6" stroke="#fff" stroke-width="0.6" fill="none" opacity="0.8"/>
<path d="M553.6,390.2H741.6" stroke="#fff" stroke-width="1" fill="none"/>
<rect x="553.6" y="392.4" width="188" height="15.4" fill="url(#sp)"/>
<path d="M553.6,408.6H741.6" stroke="#fff" stroke-width="0.5" fill="none" opacity="0.6"/>
<rect x="566.8" y="393" width="17.2" height="13.2" fill="#b0b0b0"/>
<rect x="566.8" y="393" width="17.2" height="13.2" fill="none" stroke="#fff" stroke-width="0.7"/>
<path d="M568.95,393.4V405.8M571.1,393.4V405.8M573.25,393.4V405.8M575.4,393.4V405.8M577.55,393.4V405.8M579.7,393.4V405.8M581.85,393.4V405.8M567.2,395.2H583.6M567.2,397.4H583.6M567.2,399.6H583.6M567.2,401.8H583.6M567.2,404H583.6" stroke="#222" stroke-width=".55" opacity=".7"/>
<rect x="608.2" y="393" width="17.2" height="13.2" fill="#b0b0b0"/>
<rect x="608.2" y="393" width="17.2" height="13.2" fill="none" stroke="#fff" stroke-width="0.7"/>
<path d="M610.35,393.4V405.8M612.5,393.4V405.8M614.65,393.4V405.8M616.8,393.4V405.8M618.95,393.4V405.8M621.1,393.4V405.8M623.25,393.4V405.8M608.6,395.2H625M608.6,397.4H625M608.6,399.6H625M608.6,401.8H625M608.6,404H625" stroke="#222" stroke-width=".55" opacity=".7"/>
<rect x="649.6" y="393" width="17.2" height="13.2" fill="#b0b0b0"/>
<rect x="649.6" y="393" width="17.2" height="13.2" fill="none" stroke="#fff" stroke-width="0.7"/>
<path d="M651.75,393.4V405.8M653.9,393.4V405.8M656.05,393.4V405.8M658.2,393.4V405.8M660.35,393.4V405.8M662.5,393.4V405.8M664.65,393.4V405.8M650,395.2H666.4M650,397.4H666.4M650,399.6H666.4M650,401.8H666.4M650,404H666.4" stroke="#222" stroke-width=".55" opacity=".7"/>
<rect x="695.6" y="393" width="17.2" height="13.2" fill="#b0b0b0"/>
<rect x="695.6" y="393" width="17.2" height="13.2" fill="none" stroke="#fff" stroke-width="0.7"/>
<path d="M697.75,393.4V405.8M699.9,393.4V405.8M702.05,393.4V405.8M704.2,393.4V405.8M706.35,393.4V405.8M708.5,393.4V405.8M710.65,393.4V405.8M696,395.2H712.4M696,397.4H712.4M696,399.6H712.4M696,401.8H712.4M696,404H712.4" stroke="#222" stroke-width=".55" opacity=".7"/>
<rect x="219.6" y="392.4" width="20.8" height="15.6" fill="url(#sp)"/>
<rect x="318.4" y="392.4" width="20.8" height="15.6" fill="url(#sp)"/>
<rect x="243.6" y="410.8" width="71.8" height="18.14" fill="#6a6a6a"/>
<path d="M243.6,411.2H315.4M243.6,412.78H315.4M243.6,414.35H315.4M243.6,415.93H315.4M243.6,417.5H315.4M243.6,419.08H315.4M243.6,420.66H315.4M243.6,422.23H315.4M243.6,423.81H315.4M243.6,425.39H315.4M243.6,426.96H315.4M243.6,428.54H315.4" stroke="#fff" stroke-width="0.5" fill="none" opacity="0.8"/>
<path d="M243.4,397.8V428.84M315.6,397.8V428.84" stroke="#fff" stroke-width="0.9" fill="none"/>
<path d="M280,410V428.84" stroke="#fff" stroke-width="0.9" fill="none"/>
<rect x="444" y="392.4" width="20.8" height="15.6" fill="url(#sp)"/>
<rect x="542.8" y="392.4" width="20.8" height="15.6" fill="url(#sp)"/>
<rect x="468" y="410.8" width="71.8" height="14.59" fill="#6a6a6a"/>
<path d="M468,411.2H539.8M468,412.73H539.8M468,414.27H539.8M468,415.8H539.8M468,417.33H539.8M468,418.86H539.8M468,420.4H539.8M468,421.93H539.8M468,423.46H539.8M468,424.99H539.8" stroke="#fff" stroke-width="0.5" fill="none" opacity="0.8"/>
<path d="M467.8,397.8V425.29M540,397.8V425.29" stroke="#fff" stroke-width="0.9" fill="none"/>
<path d="M504.4,410V425.29" stroke="#fff" stroke-width="0.9" fill="none"/>
<path d="M41.6,410.4H243.4" stroke="#fff" stroke-width="1.2" fill="none"/>
<path d="M50.2,410.4V415.43M58.8,410.4V415.43M67.4,410.4V415.43M76,410.4V415.43M84.6,410.4V415.43M93.2,410.4V415.43M101.8,410.4V415.43M110.4,410.4V415.43M119,410.4V415.43M127.6,410.4V415.43M136.2,410.4V415.43M144.8,410.4V415.43M153.4,410.4V415.43M162,410.4V415.43M170.6,410.4V415.43M179.2,410.4V415.43M187.8,410.4V415.43M196.4,410.4V415.43M205,410.4V415.43M213.6,410.4V415.43M222.2,410.4V415.43M230.8,410.4V415.43M239.4,410.4V415.43" stroke="#fff" stroke-width="0.6" fill="none" opacity="0.58"/>
<path d="M41.6,415.43H243.4" stroke="#fff" stroke-width="0.6" fill="none" opacity="0.58"/>
<path d="M45.9,415.43V420.46M54.5,415.43V420.46M63.1,415.43V420.46M71.7,415.43V420.46M80.3,415.43V420.46M88.9,415.43V420.46M97.5,415.43V420.46M106.1,415.43V420.46M114.7,415.43V420.46M123.3,415.43V420.46M131.9,415.43V420.46M140.5,415.43V420.46M149.1,415.43V420.46M157.7,415.43V420.46M166.3,415.43V420.46M174.9,415.43V420.46M183.5,415.43V420.46M192.1,415.43V420.46M200.7,415.43V420.46M209.3,415.43V420.46M217.9,415.43V420.46M226.5,415.43V420.46M235.1,415.43V420.46" stroke="#fff" stroke-width="0.6" fill="none" opacity="0.58"/>
<path d="M41.6,420.46H243.4" stroke="#fff" stroke-width="0.6" fill="none" opacity="0.58"/>
<path d="M50.2,420.46V425.49M58.8,420.46V425.49M67.4,420.46V425.49M76,420.46V425.49M84.6,420.46V425.49M93.2,420.46V425.49M101.8,420.46V425.49M110.4,420.46V425.49M119,420.46V425.49M127.6,420.46V425.49M136.2,420.46V425.49M144.8,420.46V425.49M153.4,420.46V425.49M162,420.46V425.49M170.6,420.46V425.49M179.2,420.46V425.49M187.8,420.46V425.49M196.4,420.46V425.49M205,420.46V425.49M213.6,420.46V425.49M222.2,420.46V425.49M230.8,420.46V425.49M239.4,420.46V425.49" stroke="#fff" stroke-width="0.6" fill="none" opacity="0.58"/>
<path d="M41.6,425.49H243.4" stroke="#fff" stroke-width="0.6" fill="none" opacity="0.58"/>
<path d="M45.9,425.49V430.52M54.5,425.49V430.52M63.1,425.49V430.52M71.7,425.49V430.52M80.3,425.49V430.52M88.9,425.49V430.52M97.5,425.49V430.52M106.1,425.49V430.52M114.7,425.49V430.52M123.3,425.49V430.52M131.9,425.49V430.52M140.5,425.49V430.52M149.1,425.49V430.52M157.7,425.49V430.52M166.3,425.49V430.52M174.9,425.49V430.52M183.5,425.49V430.52M192.1,425.49V430.52M200.7,425.49V430.38M209.3,425.49V430.25M217.9,425.49V430.11M226.5,425.49V429.97M235.1,425.49V429.84" stroke="#fff" stroke-width="0.6" fill="none" opacity="0.58"/>
<path d="M315.6,410.4H467.6" stroke="#fff" stroke-width="1.2" fill="none"/>
<path d="M324.2,410.4V415.43M332.8,410.4V415.43M341.4,410.4V415.43M350,410.4V415.43M358.6,410.4V415.43M367.2,410.4V415.43M375.8,410.4V415.43M384.4,410.4V415.43M393,410.4V415.43M401.6,410.4V415.43M410.2,410.4V415.43M418.8,410.4V415.43M427.4,410.4V415.43M436,410.4V415.43M444.6,410.4V415.43M453.2,410.4V415.43M461.8,410.4V415.43" stroke="#fff" stroke-width="0.6" fill="none" opacity="0.58"/>
<path d="M315.6,415.43H467.6" stroke="#fff" stroke-width="0.6" fill="none" opacity="0.58"/>
<path d="M319.9,415.43V420.46M328.5,415.43V420.46M337.1,415.43V420.46M345.7,415.43V420.46M354.3,415.43V420.46M362.9,415.43V420.46M371.5,415.43V420.46M380.1,415.43V420.46M388.7,415.43V420.46M397.3,415.43V420.46M405.9,415.43V420.46M414.5,415.43V420.46M423.1,415.43V420.46M431.7,415.43V420.46M440.3,415.43V420.46M448.9,415.43V420.46M457.5,415.43V420.46M466.1,415.43V420.46" stroke="#fff" stroke-width="0.6" fill="none" opacity="0.58"/>
<path d="M315.6,420.46H467.6" stroke="#fff" stroke-width="0.6" fill="none" opacity="0.58"/>
<path d="M324.2,420.46V425.49M332.8,420.46V425.49M341.4,420.46V425.49M350,420.46V425.49M358.6,420.46V425.49M367.2,420.46V425.49M375.8,420.46V425.49M384.4,420.46V425.49M393,420.46V425.49M401.6,420.46V425.49M410.2,420.46V425.49M418.8,420.46V425.49M427.4,420.46V425.49M436,420.46V425.49M444.6,420.46V425.49M453.2,420.46V425.49M461.8,420.46V425.49" stroke="#fff" stroke-width="0.6" fill="none" opacity="0.58"/>
<path d="M539.8,410.4H741.6" stroke="#fff" stroke-width="1.2" fill="none"/>
<path d="M548.4,410.4V415.43M557,410.4V415.43M565.6,410.4V415.43M574.2,410.4V415.43M582.8,410.4V415.43M591.4,410.4V415.43M600,410.4V415.43M608.6,410.4V415.43M617.2,410.4V415.43M625.8,410.4V415.43M634.4,410.4V415.43M643,410.4V415.43M651.6,410.4V415.43M660.2,410.4V415.43M668.8,410.4V415.43M677.4,410.4V415.43M686,410.4V415.43M694.6,410.4V415.43M703.2,410.4V415.43M711.8,410.4V415.43M720.4,410.4V415.43M729,410.4V415.43M737.6,410.4V415.43" stroke="#fff" stroke-width="0.6" fill="none" opacity="0.58"/>
<path d="M539.8,415.43H741.6" stroke="#fff" stroke-width="0.6" fill="none" opacity="0.58"/>
<path d="M544.1,415.43V420.46M552.7,415.43V420.46M561.3,415.43V420.46M569.9,415.43V420.46M578.5,415.43V420.46M587.1,415.43V420.46M595.7,415.43V420.46M604.3,415.43V420.46M612.9,415.43V420.46M621.5,415.43V420.46M630.1,415.43V420.46M638.7,415.43V420.46M647.3,415.43V420.46M655.9,415.43V420.46M664.5,415.43V420.46M673.1,415.43V420.46M681.7,415.43V420.46M690.3,415.43V420.46M698.9,415.43V420.46M707.5,415.43V420.46M716.1,415.43V420.46M724.7,415.43V420.46M733.3,415.43V420.46" stroke="#fff" stroke-width="0.6" fill="none" opacity="0.58"/>
<path d="M539.8,420.46H741.6" stroke="#fff" stroke-width="0.6" fill="none" opacity="0.58"/>
<path d="M548.4,420.46V424.89M557,420.46V424.75M565.6,420.46V424.62M574.2,420.46V424.48M582.8,420.46V424.34M591.4,420.46V424.21M600,420.46V424.07M608.6,420.46V423.94M617.2,420.46V423.8M625.8,420.46V423.67M634.4,420.46V423.53M643,420.46V423.39M651.6,420.46V423.26M660.2,420.46V423.12M668.8,420.46V422.99M677.4,420.46V422.85M686,420.46V422.71M694.6,420.46V422.58M703.2,420.46V422.44M711.8,420.46V422.31M720.4,420.46V422.17M729,420.46V422.03M737.6,420.46V421.9" stroke="#fff" stroke-width="0.6" fill="none" opacity="0.58"/>
<rect x="23" y="376" width="19.4" height="57.23" fill="#000"/>
<rect x="25" y="376.4" width="15.4" height="33.6" fill="#000" stroke="#fff" stroke-width="0.8"/>
<rect x="27" y="379" width="5" height="29.6" fill="#000" stroke="#fff" stroke-width="0.6" opacity="0.9"/>
<rect x="34" y="379" width="4.6" height="29.6" fill="#000" stroke="#fff" stroke-width="0.6" opacity="0.9"/>
<path d="M27,396.4H38.6M27,398H38.6" stroke="#fff" stroke-width="0.6" fill="none" opacity="0.85"/>
<rect x="25" y="410.6" width="15.4" height="22.43" fill="#6a6a6a"/>
<path d="M25,411H40.4M25,412.54H40.4M25,414.08H40.4M25,415.61H40.4M25,417.15H40.4M25,418.69H40.4M25,420.23H40.4M25,421.77H40.4M25,423.3H40.4M25,424.84H40.4M25,426.38H40.4M25,427.92H40.4M25,429.46H40.4M25,430.99H40.4M25,432.53H40.4" stroke="#fff" stroke-width="0.55" fill="none" opacity="0.95"/>
<rect x="15.6" y="376" width="9.4" height="57.03" fill="#000"/>
<path d="M14.2,382H25M14.2,385.6H25M14.2,390.2H25" stroke="#fff" stroke-width="0.8" fill="none"/>
<rect x="15.6" y="392" width="9.4" height="16" fill="url(#sp)"/>
<path d="M15.6,410.4H25" stroke="#fff" stroke-width="1.1" fill="none"/>
<path d="M15.6,410.4H25M15.6,415.96H25M15.6,421.52H25M15.6,427.07H25M15.6,432.63H25" stroke="#fff" stroke-width="0.6" fill="none" opacity="0.85"/>
<path d="M24.2,410.4V415.96M19.9,415.96V421.52M24.2,421.52V427.07M19.9,427.07V432.63" stroke="#fff" stroke-width="0.6" fill="none" opacity="0.85"/>
<path d="M15.6,217.6V433.03" stroke="#fff" stroke-width="0.8" fill="none"/>
<rect x="740.2" y="376" width="19.4" height="45.9" fill="#000"/>
<rect x="742.2" y="376.4" width="15.4" height="33.6" fill="#000" stroke="#fff" stroke-width="0.8"/>
<rect x="744.2" y="379" width="5" height="29.6" fill="#000" stroke="#fff" stroke-width="0.6" opacity="0.9"/>
<rect x="751.2" y="379" width="4.6" height="29.6" fill="#000" stroke="#fff" stroke-width="0.6" opacity="0.9"/>
<path d="M744.2,396.4H755.8M744.2,398H755.8" stroke="#fff" stroke-width="0.6" fill="none" opacity="0.85"/>
<rect x="742.2" y="410.6" width="15.4" height="11.1" fill="#6a6a6a"/>
<path d="M742.2,411H757.6M742.2,412.46H757.6M742.2,413.91H757.6M742.2,415.37H757.6M742.2,416.83H757.6M742.2,418.29H757.6M742.2,419.74H757.6M742.2,421.2H757.6" stroke="#fff" stroke-width="0.55" fill="none" opacity="0.95"/>
<rect x="758.2" y="376" width="9.4" height="45.7" fill="#000"/>
<path d="M758.2,382H769M758.2,385.6H769M758.2,390.2H769" stroke="#fff" stroke-width="0.8" fill="none"/>
<rect x="758.2" y="392" width="9.4" height="16" fill="url(#sp)"/>
<path d="M758.2,410.4H767.6" stroke="#fff" stroke-width="1.1" fill="none"/>
<path d="M758.2,410.4H767.6M758.2,415.85H767.6M758.2,421.3H767.6" stroke="#fff" stroke-width="0.6" fill="none" opacity="0.85"/>
<path d="M766.8,410.4V415.85M762.5,415.85V421.3" stroke="#fff" stroke-width="0.6" fill="none" opacity="0.85"/>
<path d="M767.6,217.6V421.7" stroke="#fff" stroke-width="0.8" fill="none"/>
<path d="M3,434.2L15.6,433.31" stroke="#fff" stroke-width="0.7" opacity="0.9"/>
<path d="M15.6,433.31L767.6,421.42" stroke="#fff" stroke-width="0.9" fill="none"/>
<rect x="36.8" y="432" width="5.4" height="5.4" fill="none" stroke="#fff" stroke-width="0.7"/>
<path d="M42.2,434L84,433.6" stroke="#fff" stroke-width="0.7" opacity="0.9"/>
<path d="M80.4,431.2L84.4,433.6L80,436.8" stroke="#fff" stroke-width="0.6" fill="none" opacity="0.9"/>
<path d="M87.6,430.6L93,436.8M93,430.6L87.6,436.8" stroke="#fff" stroke-width="0.7" fill="none"/>
<path d="M0,434.4L4,434.4" stroke="#fff" stroke-width="0.6" opacity="0.7"/></svg><div class="r" style="left:787px;top:86.5px;width:237px;height:396px;background:#f0f0f0;"></div>
<div class="r" style="left:788px;top:101px;width:1.2px;height:381px;background:#c6c6c6;"></div>
<div class="r" style="left:787px;top:86.5px;width:1.2px;height:15px;background:#dcdcdc;"></div>
<div class="r" style="left:795.7px;top:92.2px;width:198.3px;height:10.4px;background:#f2f2f2;border:1px solid #a3b8d8;box-sizing:border-box;"></div>
<div class="r" style="left:985px;top:93.2px;width:8px;height:8.4px;background:#cacaca;"></div>
<div class="t" style="transform:scaleX(0.9090);left:796.7px;top:94.10000000000001px;font-size:6.2px;line-height:7.6px;color:#777">No Selection</div>
<div class="r" style="left:796.2px;top:107px;width:13.3px;height:12.6px;background:#d2d2d2;"></div>
<div class="r" style="left:799.2px;top:110px;width:7px;height:6px;background:#dadada;"></div>
<div class="r" style="left:814px;top:107px;width:13.3px;height:12.6px;background:#d2d2d2;"></div>
<div class="r" style="left:817px;top:110px;width:7px;height:6px;background:#dadada;"></div>
<div class="r" style="left:831.4px;top:107px;width:13.3px;height:12.6px;background:#d2d2d2;"></div>
<div class="r" style="left:834.4px;top:110px;width:7px;height:6px;background:#dadada;"></div>
<div class="r" style="left:849.2px;top:107px;width:13.6px;height:12.6px;background:#e4e4e4;border:1px dotted #b4b4b4;box-sizing:border-box;"></div>
<svg class="r" style="left:850.5px;top:108px" width="11" height="11" viewBox="0 0 11 11"><rect x="0.6" y="0.6" width="6" height="3.6" fill="#a8d0f4"/><path d="M1,1 v2.8 M3.4,1 v2.8" stroke="#3a8fd0" stroke-width=".6"/><path d="M8,2.4 l-2.6,4 h1.8 l-1.2,3.6 l4,-5.2 h-2 l1.6,-2.4z" fill="#f2b800" stroke="#8a6800" stroke-width=".3"/></svg>
<div class="r" style="left:866.6px;top:107px;width:13.2px;height:12.6px;background:#e4e4e4;border:1px dotted #b4b4b4;box-sizing:border-box;"></div>
<div class="t" style="left:870.8px;top:108.44px;font-size:8.6px;line-height:10.32px;color:#111;font-weight:bold;">?</div>
<div class="r" style="left:795.3px;top:123.3px;width:198.8px;height:352.3px;background:#f3f3f3;border:1px solid #dadada;box-sizing:border-box;"></div>
<div class="r" style="left:1000.4px;top:86.5px;width:12.4px;height:395.5px;background:#b9b9b9;"></div>
<div class="r" style="left:1012.8px;top:86.5px;width:11.2px;height:39px;background:#fdfdfd;"></div>
<svg class="r" style="left:1003.5px;top:89.6px" width="6" height="6" viewBox="0 0 6 6"><path d="M0.8,0.8 L4.6,4.6 M4.6,0.8 L0.8,4.6" stroke="#111" stroke-width="1.1"/></svg>
<svg class="r" style="left:1003.2px;top:100.5px" width="7" height="8" viewBox="0 0 7 8"><path d="M1.4,0.8 h3.8 M3.3,0.8 v4.6 M1,5.4 h4.6 M3.3,5.4 v2.2" stroke="#111" stroke-width="1.1" fill="none"/></svg>
<div class="t" style="transform:rotate(-90deg) scaleX(0.9219);left:1014.8000000000001px;top:119px;font-size:6.2px;line-height:7.6px;color:#222">Properties</div>
<div class="t" style="transform:rotate(-90deg) scaleX(0.8658);left:1014.8000000000001px;top:146.3px;font-size:6.2px;line-height:7.6px;color:#222">Home</div>
<div class="t" style="transform:rotate(-90deg) scaleX(0.9243);left:1014.8000000000001px;top:204.7px;font-size:6.2px;line-height:7.6px;color:#222">G-code Generator</div>
<div class="t" style="transform:rotate(-90deg) scaleX(0.8940);left:1014.8000000000001px;top:246.2px;font-size:6.2px;line-height:7.6px;color:#222">HomeByMe</div>
<div class="r" style="left:1012.8px;top:125.5px;width:11.2px;height:0.8px;background:#d8d8d8;"></div>
<div class="r" style="left:1012.8px;top:152px;width:11.2px;height:0.8px;background:#d8d8d8;"></div>
<div class="r" style="left:1012.8px;top:211px;width:11.2px;height:0.8px;background:#d8d8d8;"></div>
<div class="r" style="left:1012.8px;top:252px;width:11.2px;height:0.8px;background:#d8d8d8;"></div>
<div class="t" style="transform:rotate(-90deg) scaleX(1.0024);left:1002.8000000000001px;top:468.4px;font-size:6.4px;line-height:7.6px;color:#111;font-weight:bold">Properties</div>
<svg class="r" style="left:1003px;top:472.4px" width="7" height="7" viewBox="0 0 7 7"><rect x="0.6" y="2" width="3" height="3" fill="#e8c020"/><rect x="3" y="0.6" width="3" height="3" fill="#e05050"/><rect x="3.4" y="3.6" width="3" height="3" fill="#6ab0e8"/></svg>
<div class="r" style="left:801.2px;top:129.2px;width:178px;height:10.5px;background:#e2e6fd;border:1px solid #b4c3ea;box-sizing:border-box;"></div><div class="t" style="transform:scaleX(0.9785);left:804px;top:130.64999999999998px;font-size:6.4px;line-height:7.8px;color:#555;font-weight:bold">General</div><div class="r" style="left:971.7px;top:133.25px;width:0;height:0;border-left:2px solid transparent;border-right:2px solid transparent;border-bottom:2.2px solid #999;"></div>
<div class="r" style="left:822.5px;top:147px;width:156.70000000000005px;height:10.199999999999989px;background:#a9ccf2;"></div>
<svg class="r" style="left:806.8px;top:147px" width="10" height="10" viewBox="0 0 10 10"><path d="M3,6.6 l3.6,-3.6 M2.4,5 a1.6,1.6 0 0 0 2.4,2.4 M5.4,2.6 a1.6,1.6 0 0 1 2.4,2.4" stroke="#c4c4c4" stroke-width="1" fill="none"/></svg>
<div class="r" style="left:822.5px;top:158.9px;width:156.70000000000005px;height:10.099999999999994px;background:#f3f3f3;border:1px solid #a9bcdc;box-sizing:border-box;"></div><div class="r" style="left:970.6px;top:159.9px;width:7.6px;height:8.099999999999994px;background:#cccccc;"></div><div class="t" style="transform:scaleX(0.8288);left:824.7px;top:160.45px;font-size:6.1px;line-height:7.4px;color:#999;">Windows</div>
<svg class="r" style="left:806.8px;top:159px" width="10" height="10" viewBox="0 0 10 10"><path d="M1.4,3.4 l3.6,-1.6 l3.6,1.6 l-3.6,1.6z M1.4,5.2 l3.6,1.6 l3.6,-1.6 M1.4,7 l3.6,1.6 l3.6,-1.6" stroke="#666" stroke-width=".7" fill="none"/></svg>
<div class="r" style="left:822.5px;top:170.6px;width:156.70000000000005px;height:10.099999999999994px;background:#f3f3f3;border:1px solid #a9bcdc;box-sizing:border-box;"></div><div class="r" style="left:970.6px;top:171.6px;width:7.6px;height:8.099999999999994px;background:#cccccc;"></div><svg class="r" style="left:825.5px;top:172.6px" width="6.4" height="6.4" viewBox="0 0 6.4 6.4"><circle cx="3.1" cy="3.1" r="2.5" fill="#fff" stroke="#777" stroke-width=".7"/></svg><div class="t" style="transform:scaleX(0.8498);left:833.5px;top:172.14999999999998px;font-size:6.1px;line-height:7.4px;color:#999;">ByLayer</div>
<svg class="r" style="left:806.8px;top:170.6px" width="10" height="10" viewBox="0 0 10 10"><path d="M4.4,1.4 l4,2.8 l-3.6,4.2 l-4,-3z" fill="#8a96a0"/><circle cx="8" cy="7.4" r="1.3" fill="#6a7a88"/></svg>
<div class="r" style="left:822.5px;top:182.2px;width:156.70000000000005px;height:10.100000000000023px;background:#a9ccf2;"></div><div class="t" style="transform:scaleX(0.7078);left:824.7px;top:183.75px;font-size:6.1px;line-height:7.4px;color:#222;">1</div>
<svg class="r" style="left:806.8px;top:182.2px" width="10" height="10" viewBox="0 0 10 10"><path d="M1.4,2.4 h7 M1.4,5 h7 M1.4,7.6 h7" stroke="#cfcfcf" stroke-width=".7" stroke-dasharray="1.4 1"/></svg>
<div class="r" style="left:822.5px;top:193.9px;width:156.70000000000005px;height:10.099999999999994px;background:#f3f3f3;border:1px solid #a9bcdc;box-sizing:border-box;"></div><div class="r" style="left:970.6px;top:194.9px;width:7.6px;height:8.099999999999994px;background:#cccccc;"></div><div class="t" style="transform:scaleX(0.8498);left:824.7px;top:195.45px;font-size:6.1px;line-height:7.4px;color:#999;">ByLayer</div><div class="t" style="transform:scaleX(0.9097);left:852.9px;top:195.45000000000002px;font-size:6.1px;line-height:7.4px;color:#777;">Solid line</div>
<svg class="r" style="left:806.8px;top:194px" width="10" height="10" viewBox="0 0 10 10"><path d="M1.4,2.4 h7 M1.4,5 h7 M1.4,7.6 h7" stroke="#999" stroke-width=".7" stroke-dasharray="2 .8"/></svg>
<div class="r" style="left:822.5px;top:205.7px;width:156.70000000000005px;height:9.900000000000006px;background:#f3f3f3;border:1px solid #a9bcdc;box-sizing:border-box;"></div><div class="r" style="left:970.6px;top:206.7px;width:7.6px;height:7.900000000000006px;background:#cccccc;"></div><div class="r" style="left:825.5px;top:210.4px;width:15.6px;height:0.8px;background:#666;"></div><div class="t" style="transform:scaleX(0.8498);left:843.0px;top:207.14999999999998px;font-size:6.1px;line-height:7.4px;color:#999;">ByLayer</div>
<svg class="r" style="left:806.8px;top:205.6px" width="10" height="10" viewBox="0 0 10 10"><path d="M1.4,2 h7" stroke="#333" stroke-width="1.5"/><path d="M1.4,4.6 h7" stroke="#333" stroke-width="1.2"/><path d="M1.4,6.8 h7" stroke="#333" stroke-width=".9"/><path d="M1.4,8.6 h7" stroke="#555" stroke-width=".5"/></svg>
<div class="r" style="left:822.5px;top:217.3px;width:156.70000000000005px;height:10.199999999999989px;background:#a9ccf2;"></div><div class="t" style="transform:scaleX(0.8519);left:824.7px;top:218.9px;font-size:6.1px;line-height:7.4px;color:#222;font-weight:bold;">ByLayer</div>
<svg class="r" style="left:806.8px;top:217.4px" width="10" height="10" viewBox="0 0 10 10"><path d="M1.6,1.6 l6.8,6.8 M8.4,1.6 l-6.8,6.8" stroke="#c4c4c4" stroke-width=".8" stroke-dasharray="1.2 .8"/></svg>
<div class="r" style="left:801.2px;top:231.6px;width:178px;height:10.400000000000006px;background:#e2e6fd;border:1px solid #b4c3ea;box-sizing:border-box;"></div><div class="t" style="transform:scaleX(1.0387);left:804px;top:233.0px;font-size:6.4px;line-height:7.8px;color:#555;font-weight:bold">PrintStyle</div><div class="r" style="left:971.7px;top:235.60000000000002px;width:0;height:0;border-left:2px solid transparent;border-right:2px solid transparent;border-bottom:2.2px solid #999;"></div>
<div class="r" style="left:822.5px;top:249.8px;width:156.70000000000005px;height:9.800000000000011px;background:#f3f3f3;border:1px solid #a9bcdc;box-sizing:border-box;"></div><div class="r" style="left:970.6px;top:250.8px;width:7.6px;height:7.800000000000011px;background:#cccccc;"></div><div class="t" style="transform:scaleX(0.8465);left:824.7px;top:251.20000000000002px;font-size:6.1px;line-height:7.4px;color:#999;">No</div>
<svg class="r" style="left:806.8px;top:249.6px" width="10" height="10" viewBox="0 0 10 10"><circle cx="5" cy="5" r="3.6" stroke="#bbb" stroke-width=".7" fill="none"/><path d="M0.6,5 h8.8" stroke="#aaa" stroke-width=".7"/></svg>
<div class="r" style="left:822.5px;top:261.6px;width:156.70000000000005px;height:9.899999999999977px;background:#f3f3f3;border:1px solid #a9bcdc;box-sizing:border-box;"></div><div class="r" style="left:970.6px;top:262.6px;width:7.6px;height:7.899999999999977px;background:#cccccc;"></div><div class="t" style="transform:scaleX(0.9260);left:824.7px;top:263.05px;font-size:6.1px;line-height:7.4px;color:#999;">None</div>
<svg class="r" style="left:806.8px;top:261.4px" width="10" height="10" viewBox="0 0 10 10"><path d="M1.4,1.4 h6.4 l-1,5 h-3.4z" stroke="#666" stroke-width=".8" fill="#ddd"/><path d="M7.4,3.6 l-3,5.4" stroke="#444" stroke-width="1"/></svg>
<div class="r" style="left:822.5px;top:273.8px;width:156.70000000000005px;height:9.5px;background:#f3f3f3;border:1px solid #a9bcdc;box-sizing:border-box;"></div><div class="r" style="left:970.6px;top:274.8px;width:7.6px;height:7.5px;background:#cccccc;"></div><div class="t" style="transform:scaleX(0.8991);left:824.7px;top:275.05px;font-size:6.1px;line-height:7.4px;color:#999;">ByColor</div>
<svg class="r" style="left:806.8px;top:273.6px" width="10" height="10" viewBox="0 0 10 10"><path d="M1.6,1.2 v6 M3.6,1.2 v6" stroke="#555" stroke-width="1"/><path d="M5.4,1.2 h3 l-.8,4 h-1.6z" stroke="#666" stroke-width=".7" fill="#ddd"/><path d="M8,3.4 l-2.6,5.4" stroke="#444" stroke-width=".9"/></svg>
<div class="r" style="left:822.5px;top:285px;width:156.70000000000005px;height:9.800000000000011px;background:#a9ccf2;"></div><div class="t" style="transform:scaleX(0.9260);left:824.7px;top:286.4px;font-size:6.1px;line-height:7.4px;color:#222;">None</div>
<svg class="r" style="left:806.8px;top:285px" width="10" height="10" viewBox="0 0 10 10"><path d="M1.4,1 v7.6 h7.4" stroke="#444" stroke-width=".9" fill="none"/><path d="M3.4,2 h3.4 M3.4,4 h4.6 M3.4,6 h4.6" stroke="#666" stroke-width=".9"/></svg>
<div class="r" style="left:801.2px;top:299px;width:178px;height:10.800000000000011px;background:#e2e6fd;border:1px solid #b4c3ea;box-sizing:border-box;"></div><div class="t" style="transform:scaleX(0.9133);left:804px;top:300.6px;font-size:6.4px;line-height:7.8px;color:#555;font-weight:bold">View</div><div class="r" style="left:971.7px;top:303.2px;width:0;height:0;border-left:2px solid transparent;border-right:2px solid transparent;border-bottom:2.2px solid #999;"></div>
<div class="r" style="left:822.5px;top:316.8px;width:156.70000000000005px;height:10.0px;background:#a9ccf2;"></div><div class="t" style="transform:scaleX(0.9579);left:824.7px;top:318.3px;font-size:6.1px;line-height:7.4px;color:#222;">8162.6321</div>
<svg class="r" style="left:806.8px;top:316.8px" width="10" height="10" viewBox="0 0 10 10"><circle cx="5" cy="5" r="3.6" stroke="#aaa" stroke-width=".7" fill="none"/><path d="M5,5 h2.2 M5,3.4 v1.6" stroke="#aaa" stroke-width=".6"/></svg>
<div class="r" style="left:822.5px;top:328.7px;width:156.70000000000005px;height:9.800000000000011px;background:#a9ccf2;"></div><div class="t" style="transform:scaleX(0.9579);left:824.7px;top:330.1px;font-size:6.1px;line-height:7.4px;color:#222;">6924.6619</div>
<svg class="r" style="left:806.8px;top:328.6px" width="10" height="10" viewBox="0 0 10 10"><circle cx="5" cy="5" r="3.6" stroke="#aaa" stroke-width=".7" fill="none"/><path d="M5,5 h2.2 M5,3.4 v1.6" stroke="#aaa" stroke-width=".6"/></svg>
<div class="r" style="left:822.5px;top:340.5px;width:156.70000000000005px;height:9.800000000000011px;background:#a9ccf2;"></div><div class="t" style="transform:scaleX(0.8848);left:824.7px;top:341.9px;font-size:6.1px;line-height:7.4px;color:#222;">0</div>
<svg class="r" style="left:806.8px;top:340.4px" width="10" height="10" viewBox="0 0 10 10"><circle cx="5" cy="5" r="3.6" stroke="#aaa" stroke-width=".7" fill="none"/><path d="M5,5 h2.2 M5,3.4 v1.6" stroke="#aaa" stroke-width=".6"/></svg>
<div class="r" style="left:822.5px;top:352.2px;width:156.70000000000005px;height:9.800000000000011px;background:#a9ccf2;"></div><div class="t" style="transform:scaleX(0.9579);left:824.7px;top:353.6px;font-size:6.1px;line-height:7.4px;color:#222;">3631.8497</div>
<svg class="r" style="left:806.8px;top:352.1px" width="10" height="10" viewBox="0 0 10 10"><path d="M3,1 h4 M5,1 v8 M3,9 h4" stroke="#aaa" stroke-width=".8" fill="none"/></svg>
<div class="r" style="left:822.5px;top:364px;width:156.70000000000005px;height:10px;background:#a9ccf2;"></div><div class="t" style="transform:scaleX(0.9732);left:824.7px;top:365.5px;font-size:6.1px;line-height:7.4px;color:#222;">9248.2114</div>
<svg class="r" style="left:806.8px;top:364.0px" width="10" height="10" viewBox="0 0 10 10"><path d="M1,3 v4 M1,5 h8 M9,3 v4" stroke="#aaa" stroke-width=".8" fill="none"/></svg>
<div class="r" style="left:801.2px;top:378px;width:178px;height:10.399999999999977px;background:#e2e6fd;border:1px solid #b4c3ea;box-sizing:border-box;"></div><div class="t" style="transform:scaleX(0.8721);left:804px;top:379.40000000000003px;font-size:6.4px;line-height:7.8px;color:#555;font-weight:bold">Misc</div><div class="r" style="left:971.7px;top:382.0px;width:0;height:0;border-left:2px solid transparent;border-right:2px solid transparent;border-bottom:2.2px solid #999;"></div>
<div class="r" style="left:822.5px;top:395.8px;width:156.70000000000005px;height:10.0px;background:#f3f3f3;border:1px solid #a9bcdc;box-sizing:border-box;"></div><div class="r" style="left:970.6px;top:396.8px;width:7.6px;height:8.0px;background:#cccccc;"></div><div class="t" style="transform:scaleX(0.8722);left:824.7px;top:397.3px;font-size:6.1px;line-height:7.4px;color:#999;">1:1</div>
<div class="t" style="left:808.4px;top:395.6px;font-size:8.6px;line-height:10.4px;color:#444;font-weight:bold">A</div>
<div class="r" style="left:822.5px;top:407.7px;width:156.70000000000005px;height:10.0px;background:#f3f3f3;border:1px solid #a9bcdc;box-sizing:border-box;"></div><div class="r" style="left:970.6px;top:408.7px;width:7.6px;height:8.0px;background:#cccccc;"></div><div class="t" style="transform:scaleX(0.8641);left:824.7px;top:409.2px;font-size:6.1px;line-height:7.4px;color:#999;">Yes</div>
<svg class="r" style="left:806.8px;top:407.6px" width="10" height="10" viewBox="0 0 10 10"><rect x="1" y="1" width="8" height="8" fill="none" stroke="#999" stroke-width=".5"/><path d="M2.6,1.6 v6 h6" stroke="#444" stroke-width=".9" fill="none"/><path d="M2.6,7.6 l-1.8,1.6" stroke="#444" stroke-width=".8"/></svg>
<div class="r" style="left:822.5px;top:419.6px;width:156.70000000000005px;height:10.0px;background:#f3f3f3;border:1px solid #a9bcdc;box-sizing:border-box;"></div><div class="r" style="left:970.6px;top:420.6px;width:7.6px;height:8.0px;background:#cccccc;"></div><div class="t" style="transform:scaleX(0.8641);left:824.7px;top:421.1px;font-size:6.1px;line-height:7.4px;color:#999;">Yes</div>
<svg class="r" style="left:806.8px;top:419.6px" width="10" height="10" viewBox="0 0 10 10"><path d="M2.6,1.6 v6 h6" stroke="#444" stroke-width=".9" fill="none"/><path d="M2.6,7.6 l-1.8,1.6" stroke="#444" stroke-width=".8"/><path d="M5.6,1.2 h1.2 M7.6,1.2 h1.2" stroke="#444" stroke-width=".7"/></svg>
<div class="r" style="left:822.5px;top:431.5px;width:156.70000000000005px;height:10.0px;background:#f3f3f3;border:1px solid #a9bcdc;box-sizing:border-box;"></div><div class="r" style="left:970.6px;top:432.5px;width:7.6px;height:8.0px;background:#cccccc;"></div><div class="t" style="transform:scaleX(0.8641);left:824.7px;top:433.0px;font-size:6.1px;line-height:7.4px;color:#999;">Yes</div>
<svg class="r" style="left:806.8px;top:431.4px" width="10" height="10" viewBox="0 0 10 10"><path d="M2.6,1.6 v6 h6" stroke="#444" stroke-width=".9" fill="none"/><path d="M2.6,7.6 l-1.8,1.6" stroke="#444" stroke-width=".8"/><circle cx="7" cy="2.4" r=".8" fill="#444"/></svg>
<div class="r" style="left:822.5px;top:443.4px;width:156.70000000000005px;height:10.0px;background:#a9ccf2;"></div>
<svg class="r" style="left:806.8px;top:443.4px" width="10" height="10" viewBox="0 0 10 10"><path d="M2.6,1.6 v6 h6" stroke="#444" stroke-width=".9" fill="none"/><path d="M2.6,7.6 l-1.8,1.6" stroke="#444" stroke-width=".8"/><path d="M5.6,4.4 l1.4,-3.2 l1.4,3.2 M6.1,3.2 h1.8" stroke="#444" stroke-width=".6" fill="none"/></svg>
<div class="r" style="left:0px;top:473px;width:787px;height:10px;background:#f0f0f0;"></div>
<svg class="r" style="left:0px;top:473px" width="110" height="10.4" viewBox="0 0 110 10.4"><path d="M1,0.4 q.6,7.6 4,8.6 h21 q2.2,-.4 4.4,-8.6z" fill="#fff" stroke="#444" stroke-width=".8"/>
<path d="M31.6,0.4 q1,7.8 4.4,8.6 h26 q2.4,-.6 4.6,-8.6" fill="#ececec" stroke="#555" stroke-width=".8"/>
<path d="M68.6,0.4 q1,7.8 4.4,8.6 h26.6 q2.4,-.6 4.6,-8.6" fill="#ececec" stroke="#555" stroke-width=".8"/></svg>
<div class="t" style="transform:scaleX(0.9958);left:6.5px;top:474.2px;font-size:6.2px;line-height:7.4px;color:#111;font-weight:bold">Model</div>
<div class="t" style="transform:scaleX(0.9084);left:39px;top:474.2px;font-size:6.1px;line-height:7.4px;color:#444">Layout1</div>
<div class="t" style="transform:scaleX(0.9452);left:76px;top:474.2px;font-size:6.1px;line-height:7.4px;color:#444">Layout2</div>
<div class="r" style="left:109px;top:474.8px;width:12px;height:5.8px;background:#f6f6f6;border:1px solid #c8c8c8;box-sizing:border-box;"></div>
<svg class="r" style="left:112.6px;top:475.4px" width="5" height="5" viewBox="0 0 5 5"><path d="M2.5,0.4 V4.6 M0.4,2.5 H4.6" stroke="#444" stroke-width=".8"/></svg>
<div class="r" style="left:0px;top:482.4px;width:1024px;height:1.4px;background:#8c8c8c;"></div>
<div class="r" style="left:0px;top:483.8px;width:1024px;height:12.4px;background:#c1c1c1;"></div>
<div class="r" style="left:0px;top:496px;width:1024px;height:1px;background:#7a7a7a;"></div>
<div class="t" style="transform:scaleX(0.9565);left:2px;top:487.0px;font-size:6.4px;line-height:7.8px;color:#111;font-weight:bold">Command window</div>
<svg class="r" style="left:1002.6px;top:487px" width="6" height="6" viewBox="0 0 6 6"><rect x="0.8" y="2" width="3.4" height="3" fill="none" stroke="#222" stroke-width=".9"/><path d="M1.8,2 v-1.2 h3.4 v3 h-1" fill="none" stroke="#222" stroke-width=".8"/></svg>
<svg class="r" style="left:1015px;top:487.2px" width="6" height="6" viewBox="0 0 6 6"><path d="M0.8,0.8 L4.6,4.6 M4.6,0.8 L0.8,4.6" stroke="#111" stroke-width="1.1"/></svg>
<div class="r" style="left:0px;top:497px;width:1024px;height:29.6px;background:#ffffff;"></div>
<div class="r" style="left:0px;top:497px;width:0.8px;height:29.6px;background:#9a9a9a;"></div>
<div class="r" style="left:0px;top:526.4px;width:1024px;height:0.8px;background:#e2e2e2;"></div>
<div class="r" style="left:0px;top:527.2px;width:1024px;height:8px;background:#ffffff;"></div>
<div class="r" style="left:0px;top:535.2px;width:1024px;height:19.8px;background:#f0f0f0;"></div>
<svg class="r" style="left:2.9px;top:496.8px" width="60" height="3" viewBox="0 0 60 3"><path d="M1,1 h3 M7,1 h5 M16,.6 h8 M28,1 h4 M36,1 h10" stroke="#333" stroke-width="1.2"/></svg>
<div class="t" style="transform:scaleX(0.9417);left:2.9px;top:499.90000000000003px;font-size:7.3px;line-height:8.8px;color:#111;font-weight:bold">Press ESC or ENTER to exit.</div>
<div class="t" style="transform:scaleX(0.9095);left:3.2px;top:508.4px;font-size:7.3px;line-height:8.8px;color:#444">: '_PAN</div>
<div class="t" style="transform:scaleX(0.9515);left:2.9px;top:516.9px;font-size:7.3px;line-height:8.8px;color:#444">Press ESC or ENTER to exit.</div>
<div class="r" style="left:1014.5px;top:497px;width:9.5px;height:29.4px;background:#f4f4f4;"></div>
<div class="r" style="left:1016.6px;top:500.8px;width:0;height:0;border-left:2.2px solid transparent;border-right:2.2px solid transparent;border-bottom:2.4px solid #222;"></div>
<div class="r" style="left:1016.6px;top:521px;width:0;height:0;border-left:2.2px solid transparent;border-right:2.2px solid transparent;border-top:2.4px solid #222;"></div>
<div class="r" style="left:1015.5px;top:512.8px;width:7.5px;height:4.6px;background:#cdcdcd;"></div>
<div class="t" style="transform:scaleX(0.9398);left:1.3px;top:541.8000000000001px;font-size:6.4px;line-height:7.8px;color:#333">DraftSight 2019 x64</div>
<div class="r" style="left:373.3px;top:539px;width:13.3px;height:12.6px;background:#e6e6e6;border:1px dotted #cccccc;box-sizing:border-box;"></div><svg class="r" style="left:374.8px;top:540px" width="11" height="11" viewBox="0 0 11 11"><rect x="1" y="1" width="8.4" height="4.4" rx="1" fill="#445"/><circle cx="3.4" cy="3" r="1" fill="#9cf"/><circle cx="7" cy="3" r="1" fill="#9cf"/><ellipse cx="5.2" cy="7.6" rx="3.6" ry="2.4" fill="#e2b000" stroke="#443" stroke-width=".6"/><path d="M2,7.6 h6.4" stroke="#443" stroke-width=".6"/></svg>
<div class="r" style="left:389.3px;top:539px;width:0.8px;height:12.6px;background:#d0d0d0;"></div>
<div class="r" style="left:392px;top:539px;width:13.3px;height:12.6px;background:#e6e6e6;border:1px dotted #cccccc;box-sizing:border-box;"></div><svg class="r" style="left:393.4px;top:540px" width="11" height="11" viewBox="0 0 11 11"><circle cx="4.4" cy="2" r="1" fill="#e03030"/><path d="M4.4,2.6 l0,6 l1.6,-1.4 l1.2,2.4 l1,-.6 l-1.2,-2.2 h2z" fill="#fff" stroke="#444" stroke-width=".6"/></svg>
<div class="r" style="left:409.2px;top:539px;width:13.3px;height:12.6px;background:#e6e6e6;border:1px dotted #cccccc;box-sizing:border-box;"></div><svg class="r" style="left:410.6px;top:540.2px" width="11" height="11" viewBox="0 0 11 11"><rect x="1.2" y="1.0" width="1.5" height="1.5" fill="#555"/><rect x="1.2" y="3.2" width="1.5" height="1.5" fill="#555"/><rect x="1.2" y="5.4" width="1.5" height="1.5" fill="#555"/><rect x="1.2" y="7.6000000000000005" width="1.5" height="1.5" fill="#555"/><rect x="3.4000000000000004" y="1.0" width="1.5" height="1.5" fill="#555"/><rect x="3.4000000000000004" y="3.2" width="1.5" height="1.5" fill="#555"/><rect x="3.4000000000000004" y="5.4" width="1.5" height="1.5" fill="#555"/><rect x="3.4000000000000004" y="7.6000000000000005" width="1.5" height="1.5" fill="#555"/><rect x="5.6000000000000005" y="1.0" width="1.5" height="1.5" fill="#555"/><rect x="5.6000000000000005" y="3.2" width="1.5" height="1.5" fill="#555"/><rect x="5.6000000000000005" y="5.4" width="1.5" height="1.5" fill="#555"/><rect x="5.6000000000000005" y="7.6000000000000005" width="1.5" height="1.5" fill="#555"/><rect x="7.800000000000001" y="1.0" width="1.5" height="1.5" fill="#555"/><rect x="7.800000000000001" y="3.2" width="1.5" height="1.5" fill="#555"/><rect x="7.800000000000001" y="5.4" width="1.5" height="1.5" fill="#555"/><rect x="7.800000000000001" y="7.6000000000000005" width="1.5" height="1.5" fill="#555"/></svg>
<div class="r" style="left:426.4px;top:539px;width:13.3px;height:12.6px;background:#e6e6e6;border:1px dotted #cccccc;box-sizing:border-box;"></div><svg class="r" style="left:427.8px;top:540.2px" width="11" height="11" viewBox="0 0 11 11"><path d="M2,3.4 l6.6,-1.4 v6.2 l-6.6,-1.4z" fill="none" stroke="#555" stroke-width=".8"/><path d="M0.8,5 h3" stroke="#555" stroke-width=".7"/></svg>
<div class="r" style="left:443.2px;top:539px;width:0.8px;height:12.6px;background:#d0d0d0;"></div>
<div class="r" style="left:446.7px;top:539px;width:13.3px;height:12.6px;background:#e6e6e6;border:1px dotted #cccccc;box-sizing:border-box;"></div><svg class="r" style="left:448px;top:540.2px" width="11" height="11" viewBox="0 0 11 11"><circle cx="5" cy="5.4" r="3.4" fill="none" stroke="#666" stroke-width=".8"/><path d="M5,5.4 l3.8,-3.8 M5,5.4 h4.6" stroke="#88a" stroke-width=".6"/><circle cx="5" cy="5.4" r="1" fill="#36c"/></svg>
<div class="r" style="left:463.9px;top:539px;width:13.3px;height:12.6px;background:#cfe3f8;border:1px solid #3a84d6;box-sizing:border-box;"></div><svg class="r" style="left:465.2px;top:540.2px" width="11" height="11" viewBox="0 0 11 11"><rect x="1.4" y="1.4" width="4.4" height="4.4" fill="#2a3ad0"/><circle cx="6.6" cy="5.6" r="2.6" fill="#dfe6f4" stroke="#556" stroke-width=".7"/><path d="M1.6,8.8 h7" stroke="#778" stroke-width=".6"/><circle cx="9" cy="9" r=".9" fill="#e03030"/></svg>
<div class="r" style="left:481px;top:539px;width:13.3px;height:12.6px;background:#e6e6e6;border:1px dotted #cccccc;box-sizing:border-box;"></div><svg class="r" style="left:482.4px;top:540.2px" width="11" height="11" viewBox="0 0 11 11"><rect x="1" y="1" width="3.6" height="3.6" fill="#2a3ad0"/><rect x="4.4" y="2" width="5" height="7.6" fill="#666"/><path d="M4.4,4 h5 M4.4,6 h5 M4.4,8 h5" stroke="#bbb" stroke-width=".5"/></svg>
<div class="r" style="left:498.8px;top:539px;width:13.5px;height:12.6px;background:#cfe3f8;border:1px solid #3a84d6;box-sizing:border-box;"></div><svg class="r" style="left:500.4px;top:540.4px" width="11" height="11" viewBox="0 0 11 11"><rect x="1.6" y="2.4" width="7" height="5.6" rx="1" fill="#f4f4f4" stroke="#999" stroke-width=".7"/></svg>
<div class="r" style="left:516.6px;top:539px;width:12.8px;height:12.6px;background:#e6e6e6;border:1px dotted #cccccc;box-sizing:border-box;"></div><svg class="r" style="left:517.4px;top:540.2px" width="11" height="11" viewBox="0 0 11 11"><rect x="4.4" y="3.6" width="4.6" height="5.4" fill="#fff" stroke="#444" stroke-width=".8"/><path d="M6.6,1 v2.4" stroke="#444" stroke-width=".7"/><path d="M0.8,6 h3 M2.3,4.6 v2.8" stroke="#2a8de0" stroke-width=".9"/></svg>
<div class="r" style="left:534px;top:540.2px;width:45px;height:10.2px;background:#d9eafb;border:1px solid #3a84d6;box-sizing:border-box;"></div>
<div class="t" style="transform:scaleX(0.9467);left:538.2px;top:541.7px;font-size:6.4px;line-height:7.8px;color:#222">Dynamic CCS</div>
<div class="r" style="left:583.9px;top:539.6px;width:51.3px;height:11.4px;background:#e4e4e4;border:1px dotted #cccccc;box-sizing:border-box;"></div>
<div class="t" style="transform:scaleX(1.0274);left:587.4px;top:541.7px;font-size:6.4px;line-height:7.8px;color:#222">Annotation</div>
<svg class="r" style="left:626.00px;top:544.00px" width="4.40" height="3.20" viewBox="0 0 4.40 3.20"><path d="M0,0H4.40L2.20,3.20z" fill="#222"/></svg>
<div class="t" style="transform:scaleX(0.8599);left:639.4px;top:541.7px;font-size:6.4px;line-height:7.8px;color:#333">(1:1)</div>
<div class="t" style="transform:scaleX(0.9041);left:655.4px;top:541.7px;font-size:6.4px;line-height:7.8px;color:#333">(9572.4204,4709.7278,0)</div></div></body></html>
